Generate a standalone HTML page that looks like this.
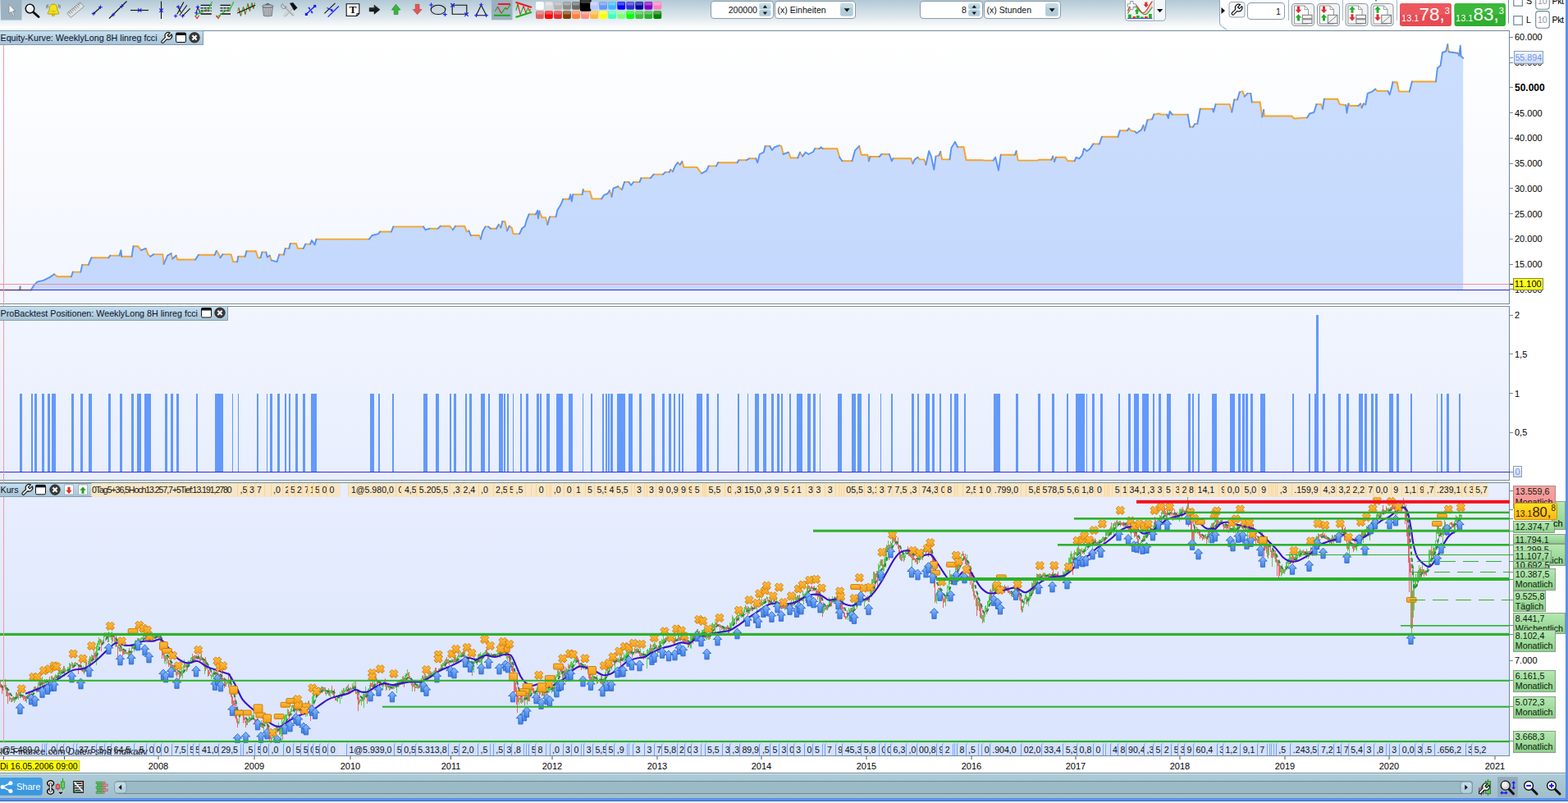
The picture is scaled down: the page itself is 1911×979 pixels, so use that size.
<!DOCTYPE html>
<html lang="de"><head><meta charset="utf-8"><title>ProRealTime Chart</title>
<style>
html,body{margin:0;padding:0;background:#fff;}
body{width:1911px;height:979px;overflow:hidden;position:relative;font-family:"Liberation Sans",sans-serif;font-size:11px;color:#000;}
#root{position:absolute;left:0;top:0;width:1911px;height:979px;overflow:hidden;background:#fff;}
.abs{position:absolute;}
.tb{position:absolute;left:0;top:0;width:1911px;height:37px;background:linear-gradient(#b2c9d5 0px,#c7d8e1 10px,#dde6ec 20px,#f0f4f7 28px,#fdfefe 34px,#fff 37px);}
.panel{position:absolute;left:0;width:1840px;border-top:1px solid #738b99;border-bottom:1px solid #738b99;border-right:1px solid #728898;box-sizing:border-box;}
.p1{top:37px;height:334px;background:linear-gradient(#ffffff,#f1f5fe);}
.p2{top:373px;height:213px;background:linear-gradient(#f1f5fe,#e8eefe);}
.p3{top:588px;height:334px;background:linear-gradient(#e8eefe,#dae4fd);}
.axl{position:absolute;left:1839px;top:37px;width:1px;height:885px;background:#728898;}
.lab{position:absolute;left:0;height:16px;line-height:17px;border:1px solid #7e9cb3;border-left:none;background:linear-gradient(#c6e0ee,#a9c3d4);font-size:10.72px;color:#091030;white-space:nowrap;padding-left:0.5px;box-sizing:content-box;}
.yl{position:absolute;left:1846px;font-size:11px;line-height:12px;white-space:nowrap;color:#000;}
.tick{position:absolute;left:1840px;width:4px;height:1px;background:#728898;}
.pl{position:absolute;left:1844.3px;font-size:10.7px;line-height:12.5px;padding:0 0 0 1.5px;box-sizing:border-box;border:1px solid #8aa08a;background:linear-gradient(#b4e8b0,#8fd08c);white-space:nowrap;overflow:hidden;color:#0a1a0a;}
.yr{position:absolute;top:924px;width:40px;text-align:center;font-size:11px;line-height:20px;}
.orow{position:absolute;top:589px;height:16.5px;line-height:17px;font-size:10.6px;background:#f6e6c6;border-radius:3px;overflow:hidden;white-space:nowrap;color:#111;}
.brow{position:absolute;top:905.5px;height:15.5px;line-height:16px;font-size:10.6px;background:#d3e1fd;overflow:hidden;white-space:nowrap;color:#111;}
.brow span,.orow span{position:absolute;top:0;height:17px;padding-left:2.5px;box-sizing:border-box;white-space:nowrap;}
.brow span{background:#d3e1fd;border-left:1px solid #6f9df0;border-radius:3px 0 0 3px;}
.orow span{background:#f6e6c6;border-left:1px solid #fbd593;border-radius:3px 0 0 3px;}
.brow b,.orow b{position:absolute;top:0;height:17px;width:3px;box-sizing:border-box;border-radius:3px 0 0 3px;}
.brow b{border-left:1px solid #7fa8f2;}
.orow b{border-left:1px solid #fbd593;}
.bt{position:absolute;left:0;top:942px;width:1908px;height:31px;background:linear-gradient(#6f8896 0,#6f8896 1px,#d8eef8 1px,#d8eef8 2px,#adcbd7 2px,#a9c8d4 10px,#a1bfcb 31px);}
.inp{position:absolute;box-sizing:border-box;border:1px solid #8a9aa8;border-radius:4px;background:#fff;font-size:10.6px;line-height:21px;height:22px;text-align:right;color:#111;}
.sel{position:absolute;box-sizing:border-box;border:1px solid #8a9aa8;border-radius:4px;background:#fff;font-size:10.55px;line-height:21px;height:22px;padding-left:3px;color:#111;}
</style></head><body><div id="root">
<div class="tb"></div>
<svg class="abs" style="left:0px;top:0px" width="1911" height="38" viewBox="0 0 1911 38"><path d="M1486.500,-1V27.500Q1486.500,31 1489.500,32.500L1495.500,36.500H1908V-1Z" fill="#fcfdfe"/><path d="M1486.500,-1V27.500Q1486.500,31 1489.500,32.500L1495.500,36.500" fill="none" stroke="#8fa5b2" stroke-width="1"/></svg><div class="inp" style="left:866px;top:1px;width:76.500px;padding-right:18.500px">200000</div>
<div class="sel" style="left:943.500px;top:1px;width:99.500px">(x) Einheiten</div>
<div class="inp" style="left:1121px;top:1px;width:76.500px;padding-right:18.500px">8</div>
<div class="sel" style="left:1198.500px;top:1px;width:94.500px">(x) Stunden</div>
<div class="inp" style="left:1520px;top:3px;width:46px;padding-right:4px;height:21px;line-height:20px">1</div><svg class="abs" style="left:0px;top:0px" width="1911" height="38" viewBox="0 0 1911 38"><rect x="1" y="0" width="25.5" height="24.5" fill="#9db2c1"/><path d="M11,5.300V16.800L13.700,14.300L15.900,19.600L17.700,18.800L15.500,13.700H19Z" fill="#f6f8fa" stroke="#87919a" stroke-width="1" stroke-linejoin="round"/><path d="M40.800,15L47,20.500" stroke="#111" stroke-width="3" stroke-linecap="round"/><circle cx="36.500" cy="10.600" r="5.300" fill="#eef1f4" stroke="#111" stroke-width="1.500"/><path d="M33,9.500a3.800,3.800 0 0 1 5,-2.500" stroke="#fff" stroke-width="1.200" fill="none"/><path d="M65,5c-3.300,0-4.700,2.500-4.700,5.300c0,3-1,4.400-2.300,5.500c0,0.900,0.400,1.300,1.300,1.300h11.400c0.900,0,1.300-0.400,1.300-1.300c-1.300-1.100-2.300-2.500-2.300-5.500C69.700,7.500,68.300,5,65,5z" fill="#f2e21c" stroke="#a89600" stroke-width="0.900"/><path d="M62.500,13.700h5" stroke="#b8a400" stroke-width="0.800"/><rect x="63.500" y="17" width="3" height="2.600" fill="#e4c800" stroke="#a89600" stroke-width="0.500"/><path d="M57.300,5.800q-1.200,2.200,-0.300,4.500M58.800,5.300q-1.100,2,-0.300,4.200M72.700,5.800q1.200,2.200,0.300,4.500M71.200,5.300q1.100,2,0.300,4.200" stroke="#555" stroke-width="0.700" fill="none"/><g transform="rotate(-40 92 12)"><rect x="81.500" y="8.600" width="21" height="7" fill="#dfe1e3" stroke="#8f9397" stroke-width="0.900"/><path d="M84,8.600v3M86.500,8.600v4M89,8.600v3M91.500,8.600v4M94,8.600v3M96.500,8.600v4M99,8.600v3M101,8.600v2" stroke="#6f7377" stroke-width="0.800"/></g><path d="M113.500,17L122.500,9" stroke="#111" stroke-width="1.1"/><path d="M111.8,16.6H116.2M114,14.4V18.8" stroke="#1a1aff" stroke-width="1.1" fill="none"/><path d="M120.2,8.6H124.6M122.4,6.4V10.8" stroke="#1a1aff" stroke-width="1.1" fill="none"/><path d="M133,22.500L154.500,1.500" stroke="#111" stroke-width="1.1"/><path d="M135.8,18H140.2M138,15.8V20.2" stroke="#1a1aff" stroke-width="1.1" fill="none"/><path d="M146.3,7.5H150.7M148.5,5.3V9.7" stroke="#1a1aff" stroke-width="1.1" fill="none"/><path d="M159,12.500H181" stroke="#111" stroke-width="1.1"/><path d="M168,10.3L172.4,14.7M168,14.7L172.4,10.3" stroke="#1a1aff" stroke-width="1.1" fill="none"/><path d="M196.500,1.500V23" stroke="#111" stroke-width="1.1"/><path d="M194.3,10.5L198.7,14.9M194.3,14.9L198.7,10.5" stroke="#1a1aff" stroke-width="1.1" fill="none"/><path d="M215.700,17.600L223.900,2.500M218.800,18.800L227.900,6.300M223.200,18.800L231.700,10.300M217.200,8.400L220.300,15" stroke="#111" stroke-width="1.100" fill="none"/><path d="M215,8.4H219.4M217.2,6.2V10.6" stroke="#1a1aff" stroke-width="1.1" fill="none"/><path d="M211.8,19.5H216.2M214,17.3V21.7" stroke="#1a1aff" stroke-width="1.1" fill="none"/><path d="M220.4,19.5H224.8M222.6,17.3V21.7" stroke="#1a1aff" stroke-width="1.1" fill="none"/><path d="M244.600,6.300H257.800M244.600,17H257.800" stroke="#111" stroke-width="1.300"/><path d="M244.600,9.800H257.800M244.600,13.200H257.800" stroke="#111" stroke-width="1.200" stroke-dasharray="3,1"/><path d="M241,8.500L239.300,15.700M241,8.500L244,16" stroke="#111" stroke-width="1"/><path d="M237.700,20L242,16.300H244L250.300,12H254L258.400,2" stroke="#1fbf1f" stroke-width="1.200" fill="none"/><path d="M237.700,19.500L240.200,22.600L242.700,18.800M250.300,12.300L252.300,13.800" stroke="#e02020" stroke-width="1.100" fill="none"/><path d="M238.8,8.5H243.2M241,6.3V10.7" stroke="#1a1aff" stroke-width="1.1" fill="none"/><path d="M237.1,15.7H241.5M239.3,13.5V17.9" stroke="#1a1aff" stroke-width="1.1" fill="none"/><path d="M268.500,6.300H281M268.500,17H281" stroke="#111" stroke-width="1.300"/><path d="M268.500,9.800H281M268.500,13.200H281" stroke="#111" stroke-width="1.200" stroke-dasharray="3,1"/><path d="M263.400,20.700L267.800,18.800L270.400,16.300L276.600,12.600L280.400,11.300L284.800,2" stroke="#1fbf1f" stroke-width="1.200" fill="none"/><path d="M263.400,18.800L266,22.600L268.400,18.800M276.600,12.600L278.500,13.600" stroke="#e02020" stroke-width="1.100" fill="none"/><path d="M289.500,13.500l1.500,-4l2.500,10l3,-11l2.500,9l3,-13l2.500,9l2.500,-10l2,7l1.500,-7.500" stroke="#1fbf1f" stroke-width="1" fill="none"/><path d="M291,9.500l2.500,10M296.500,8.500l2.500,9M302,4.500l2.500,9M307,3.500l2,7" stroke="#e02020" stroke-width="1" fill="none"/><path d="M289.200,16L311.200,6.300" stroke="#111" stroke-width="1.200"/><path d="M320.300,9h12l-1.100,10.200q-4.900,1.400,-9.800,0z" fill="#c4c7cb" stroke="#6a6e74" stroke-width="0.900"/><ellipse cx="326.300" cy="7.600" rx="6.800" ry="2" fill="#b0b4b9" stroke="#5e6268" stroke-width="0.900"/><path d="M324.300,5.800q2,-2.500,4,0" fill="none" stroke="#44484e" stroke-width="1.100"/><path d="M323,10.500v8M325.300,10.800v8.300M327.600,10.800v8.300M329.800,10.500v8" stroke="#80848a" stroke-width="0.900"/><path d="M346.500,19L356.500,8" stroke="#d0d3d6" stroke-width="3.200" stroke-linecap="round"/><path d="M346.500,19L356.500,8" stroke="#8a8e93" stroke-width="0.700" fill="none" transform="translate(1.500,1.200)"/><path d="M353,4l4,-1l5.500,6.500l-4,3.500z" fill="#111"/><path d="M347.500,8.500L357.500,18.500" stroke="#c6c9cd" stroke-width="3" stroke-linecap="round"/><path d="M344.500,4.500a3.200,3.200 0 1 0 4.600,3.400l-2.300,0.500l-1.300,-1.500z" fill="#d6d9dc" stroke="#7d8186" stroke-width="0.900"/><path d="M348.500,7.500L358.500,17.500" stroke="#7d8186" stroke-width="0.700" transform="translate(-1.400,1.400)"/><path d="M373.400,17.300L383.700,7.500" stroke="#1a1aff" stroke-width="1.300"/><rect x="371.800" y="15.800" width="3.200" height="3.200" fill="#1a1aff"/><rect x="382.100" y="5.900" width="3.200" height="3.200" fill="#1a1aff"/><path d="M375.800,9.800l2,1l-1,-2zM381.200,15.200l-2,-1l1,2z" fill="#1a1aff" stroke="#1a1aff" stroke-width="0.800"/><path d="M376.300,10.200L381,14.800" stroke="#1a1aff" stroke-width="1"/><path d="M395.400,16.300L408.500,3.800" stroke="#111" stroke-width="1.100"/><path d="M399.700,20.700L412.900,7.500" stroke="#1a1aff" stroke-width="1.200"/><path d="M398.500,9.500L405.500,13" stroke="#1a1aff" stroke-width="1.100"/><path d="M406.200,13.400l-3.600,0.600l1.800,-3.400z" fill="#1a1aff"/><path d="M422.200,4.700h15.600v11.800l-3,3h-12.600z" fill="#fff" stroke="#111" stroke-width="1.100"/><path d="M434.800,19.500v-3h3" fill="none" stroke="#111" stroke-width="0.900"/><text x="430" y="15.800" text-anchor="middle" font-family="Liberation Serif, serif" font-weight="bold" font-size="13.500" fill="#111">T</text><path d="M450.200,9.500h5.800v-3.400l7,5.600l-7,5.600v-3.400h-5.800z" fill="#1c1c1c" stroke="#000" stroke-width="0.500"/><path d="M450.600,9.900h6v-3l5.500,4.300" fill="none" stroke="#777" stroke-width="0.600" opacity="0.600"/><path d="M482.500,5.300l5.500,6.700h-3v5.600h-4.700v-5.600h-3z" fill="#3ab53a" stroke="#1f8a1f" stroke-width="0.700" stroke-linejoin="round"/><path d="M508.600,17.600l5.400,-6.100h-3v-6.200h-4.700v6.200h-3z" fill="#e4555a" stroke="#c03a40" stroke-width="0.700" stroke-linejoin="round"/><rect x="525.500" y="6" width="17" height="11.600" fill="#c6d0d8" opacity="0.500" stroke="#9aa6b0" stroke-width="0.500"/><ellipse cx="534" cy="11.900" rx="8.800" ry="5.600" fill="none" stroke="#111" stroke-width="1.100"/><path d="M523.1,6H527.9M525.5,3.6V8.4" stroke="#1a1aff" stroke-width="1.1" fill="none"/><path d="M540,17.6H544.8M542.4,15.2V20" stroke="#1a1aff" stroke-width="1.1" fill="none"/><path d="M551.200,6.300h17.600v11h-17.600z" fill="none" stroke="#111" stroke-width="1.100"/><path d="M549.3,4L553.9,8.6M549.3,8.6L553.9,4" stroke="#1a1aff" stroke-width="1.1" fill="none"/><path d="M566.3,15.3L570.9,19.9M566.3,19.9L570.9,15.3" stroke="#1a1aff" stroke-width="1.1" fill="none"/><path d="M586.400,6.300L592.700,18.800H580.400z" fill="none" stroke="#111" stroke-width="1.100"/><path d="M584.1,5.8H588.7M586.4,3.5V8.1" stroke="#1a1aff" stroke-width="1.1" fill="none"/><path d="M578.1,18.8H582.7M580.4,16.5V21.1" stroke="#1a1aff" stroke-width="1.1" fill="none"/><path d="M590.4,18.8H595M592.7,16.5V21.1" stroke="#1a1aff" stroke-width="1.1" fill="none"/><rect x="599" y="0" width="25.500" height="24.300" fill="#9bb0bf"/><path d="M607,5H622" stroke="#f01818" stroke-width="2"/><path d="M602,18.800H622" stroke="#12b012" stroke-width="2"/><path d="M603.400,13.800L606.500,8.200M611,16.300L616,9.400M617.900,11.300L622.200,5.700" stroke="#12b012" stroke-width="1.200" fill="none"/><path d="M606.500,8.200L611,16.300M616,9.400L617.900,11.300" stroke="#f01818" stroke-width="1.200" fill="none"/><path d="M629,12.600L631,5M634.200,17.600L638,7.500M641,15.700L643.600,9.400M645.400,13.800L646.700,11.300" stroke="#12b012" stroke-width="1.100" fill="none"/><path d="M631,5L634.200,17.600M638,7.500L641,15.700M643.600,9.400L645.400,13.800" stroke="#f01818" stroke-width="1.100" fill="none"/><path d="M628.500,2.800L648,9" stroke="#f01818" stroke-width="2"/><path d="M628.500,21L648,14.800" stroke="#12b012" stroke-width="2"/><rect x="653" y="13.200" width="9.800" height="9.800" rx="1.800" fill="#e06060"/><rect x="653.6" y="13.600" width="8.600" height="4" rx="1.500" fill="#fff" opacity="0.300"/><rect x="664" y="13.200" width="9.800" height="9.800" rx="1.800" fill="#ff0404"/><rect x="664.6" y="13.600" width="8.600" height="4" rx="1.500" fill="#fff" opacity="0.300"/><rect x="675.1" y="13.200" width="9.800" height="9.800" rx="1.800" fill="#e03030"/><rect x="675.7" y="13.600" width="8.600" height="4" rx="1.500" fill="#fff" opacity="0.300"/><rect x="686.1" y="13.200" width="9.800" height="9.800" rx="1.800" fill="#804000"/><rect x="686.7" y="13.600" width="8.600" height="4" rx="1.500" fill="#fff" opacity="0.300"/><rect x="697.1" y="13.200" width="9.800" height="9.800" rx="1.800" fill="#ff8040"/><rect x="697.7" y="13.600" width="8.600" height="4" rx="1.500" fill="#fff" opacity="0.300"/><rect x="708.1" y="13.200" width="9.800" height="9.800" rx="1.800" fill="#ff9080"/><rect x="708.8" y="13.600" width="8.600" height="4" rx="1.500" fill="#fff" opacity="0.300"/><rect x="719.2" y="13.200" width="9.800" height="9.800" rx="1.800" fill="#ffb840"/><rect x="719.8" y="13.600" width="8.600" height="4" rx="1.500" fill="#fff" opacity="0.300"/><rect x="730.2" y="13.200" width="9.800" height="9.800" rx="1.800" fill="#ffff00"/><rect x="730.8" y="13.600" width="8.600" height="4" rx="1.500" fill="#fff" opacity="0.300"/><rect x="741.2" y="13.200" width="9.800" height="9.800" rx="1.800" fill="#40ffc0"/><rect x="741.8" y="13.600" width="8.600" height="4" rx="1.500" fill="#fff" opacity="0.300"/><rect x="752.3" y="13.200" width="9.800" height="9.800" rx="1.800" fill="#80ff80"/><rect x="752.9" y="13.600" width="8.600" height="4" rx="1.500" fill="#fff" opacity="0.300"/><rect x="763.3" y="13.200" width="9.800" height="9.800" rx="1.800" fill="#04ff04"/><rect x="763.9" y="13.600" width="8.600" height="4" rx="1.500" fill="#fff" opacity="0.300"/><rect x="774.3" y="13.200" width="9.800" height="9.800" rx="1.800" fill="#40c040"/><rect x="774.9" y="13.600" width="8.600" height="4" rx="1.500" fill="#fff" opacity="0.300"/><rect x="785.4" y="13.200" width="9.800" height="9.800" rx="1.800" fill="#30b030"/><rect x="786" y="13.600" width="8.600" height="4" rx="1.500" fill="#fff" opacity="0.300"/><rect x="796.4" y="13.200" width="9.800" height="9.800" rx="1.800" fill="#008000"/><rect x="797" y="13.600" width="8.600" height="4" rx="1.500" fill="#fff" opacity="0.300"/><rect x="653" y="2" width="9.800" height="9.700" rx="1.800" fill="#ffffff"/><rect x="653.6" y="2.400" width="8.600" height="4" rx="1.500" fill="#fff" opacity="0.300"/><rect x="664" y="2" width="9.800" height="9.700" rx="1.800" fill="#d8d8d8"/><rect x="664.6" y="2.400" width="8.600" height="4" rx="1.500" fill="#fff" opacity="0.300"/><rect x="675.1" y="2" width="9.800" height="9.700" rx="1.800" fill="#b4b4b4"/><rect x="675.7" y="2.400" width="8.600" height="4" rx="1.500" fill="#fff" opacity="0.300"/><rect x="686.1" y="2" width="9.800" height="9.700" rx="1.800" fill="#8c8c8c"/><rect x="686.7" y="2.400" width="8.600" height="4" rx="1.500" fill="#fff" opacity="0.300"/><rect x="697.1" y="2" width="9.800" height="9.700" rx="1.800" fill="#6a6a6a"/><rect x="697.7" y="2.400" width="8.600" height="4" rx="1.500" fill="#fff" opacity="0.300"/><rect x="706.8" y="-1" width="13.800" height="14.800" rx="2" fill="#000"/><rect x="707.5" y="0" width="12.200" height="4" rx="1.500" fill="#fff" opacity="0.220"/><rect x="719.2" y="2" width="9.800" height="9.700" rx="1.800" fill="#b8c8ff"/><rect x="719.8" y="2.400" width="8.600" height="4" rx="1.500" fill="#fff" opacity="0.300"/><rect x="730.2" y="2" width="9.800" height="9.700" rx="1.800" fill="#6496ff"/><rect x="730.8" y="2.400" width="8.600" height="4" rx="1.500" fill="#fff" opacity="0.300"/><rect x="741.2" y="2" width="9.800" height="9.700" rx="1.800" fill="#40b8ff"/><rect x="741.8" y="2.400" width="8.600" height="4" rx="1.500" fill="#fff" opacity="0.300"/><rect x="752.3" y="2" width="9.800" height="9.700" rx="1.800" fill="#0404ff"/><rect x="752.9" y="2.400" width="8.600" height="4" rx="1.500" fill="#fff" opacity="0.300"/><rect x="763.3" y="2" width="9.800" height="9.700" rx="1.800" fill="#3030d0"/><rect x="763.9" y="2.400" width="8.600" height="4" rx="1.500" fill="#fff" opacity="0.300"/><rect x="774.3" y="2" width="9.800" height="9.700" rx="1.800" fill="#0404a0"/><rect x="774.9" y="2.400" width="8.600" height="4" rx="1.500" fill="#fff" opacity="0.300"/><rect x="785.4" y="2" width="9.800" height="9.700" rx="1.800" fill="#8000c0"/><rect x="786" y="2.400" width="8.600" height="4" rx="1.500" fill="#fff" opacity="0.300"/><rect x="796.4" y="2" width="9.800" height="9.700" rx="1.800" fill="#ff80c0"/><rect x="797" y="2.400" width="8.600" height="4" rx="1.500" fill="#fff" opacity="0.300"/><rect x="925.2" y="4.2" width="14.400" height="7.400" rx="2" fill="#b6d0dd"/><rect x="925.2" y="4.2" width="14.400" height="3" rx="1.500" fill="#c8e0ea" opacity="0.800"/><rect x="925.2" y="12.100000000000001" width="14.400" height="7.600" rx="2" fill="#b3cdda"/><path d="M929.7,9.8l2.700,-3.500l2.700,3.500zM929.7,14.5l2.700,3.500l2.700,-3.500z" fill="#111"/><rect x="1024.1" y="4.2" width="15.700" height="15.500" rx="2.500" fill="#b2ccd9"/><rect x="1024.1" y="4.2" width="15.700" height="5" rx="2" fill="#c6deea" opacity="0.800"/><path d="M1028.6999999999998,10.2h7l-3.500,4.200z" fill="#111"/><rect x="1180.1" y="4.2" width="14.400" height="7.400" rx="2" fill="#b6d0dd"/><rect x="1180.1" y="4.2" width="14.400" height="3" rx="1.500" fill="#c8e0ea" opacity="0.800"/><rect x="1180.1" y="12.100000000000001" width="14.400" height="7.600" rx="2" fill="#b3cdda"/><path d="M1184.6,9.8l2.700,-3.500l2.700,3.500zM1184.6,14.5l2.700,3.500l2.700,-3.500z" fill="#111"/><rect x="1274.1" y="4.2" width="15.700" height="15.500" rx="2.500" fill="#b2ccd9"/><rect x="1274.1" y="4.2" width="15.700" height="5" rx="2" fill="#c6deea" opacity="0.800"/><path d="M1278.6999999999998,10.2h7l-3.500,4.200z" fill="#111"/><rect x="1371.500" y="-3" width="49" height="28.300" rx="3.500" fill="#f3f6f8" stroke="#8f9ca6" stroke-width="0.900"/><path d="M1406.500,-2v27" stroke="#a4b0ba" stroke-width="0.900"/><path d="M1410,11h7.200l-3.600,4.200z" fill="#111"/><path d="M1374.500,13.500c3,-9 8,-11 12,-5s6,10 10,5s5,-9 8,-12v7c-3,2 -5,7 -8,9s-7,-3 -10,-7s-8,-2 -12,6z" fill="#f4b8b8" opacity="0.600"/><path d="M1374.500,13.500c3,-9 8,-11 12,-5s6,10 10,5s5,-9 8,-12" stroke="#d42a2a" stroke-width="1.100" fill="none"/><path d="M1374.500,16.500c4,-8 9,-10 12,-6s7,8 10,7s5,-5 8,-9" stroke="#22a822" stroke-width="1.100" fill="none"/><path d="M1377.500,1.500h3.500v3.300h3.300v3.500h-3.300v3.300h-3.500v-3.300h-3.300v-3.500h3.300z" fill="#fff" stroke="#8a949c" stroke-width="0.900"/><path d="M1395.300,2.500h3v3h1.800l-3.300,3.600l-3.300,-3.600h1.800z" fill="#e02a2a"/><path d="M1385.700,10.500l3,3.400h-1.600v3.300h-2.800v-3.300h-1.600z" fill="#22b022"/><path d="M1374,22.400h30.500" stroke="#2a2ae0" stroke-width="0.900"/><rect x="1375" y="17.6" width="3.800" height="4.4" fill="#22b022"/><rect x="1380.5" y="20.1" width="3.800" height="1.9" fill="#e02a2a"/><rect x="1385" y="18.9" width="3.800" height="3.1" fill="#22b022"/><rect x="1390" y="20.5" width="3.800" height="1.5" fill="#22b022"/><rect x="1395" y="20.1" width="3.800" height="1.9" fill="#e02a2a"/><rect x="1400" y="17" width="3.800" height="5" fill="#22b022"/><path d="M1488.500,9l4.500,4l-4.500,4z" fill="#111"/><rect x="1498" y="2.500" width="19" height="18.500" rx="3" fill="#f4f6f8" stroke="#8f9aa4" stroke-width="0.900"/><g transform="translate(1501.2,5) scale(1)"><path d="M10.390,0.630L7.300,3.720L9.280,5.700L12.370,2.610A4.300,4.300 0 0 1 6.710,8.410L2.490,12.630A1.500,1.500 0 0 1 0.370,10.510L4.590,6.290A4.300,4.300 0 0 1 10.390,0.630Z" fill="#fff" stroke="#111" stroke-width="1.150" stroke-linejoin="round"/></g><path d="M1570.500,0V25M1636.500,0V25M1702.500,0V25" stroke="#a9b8c2" stroke-width="1"/><path d="M1838.500,0V28.600" stroke="#7a909c" stroke-width="1"/><path d="M1677,0v1.500" stroke="#111" stroke-width="1"/><rect x="1574.5" y="4.5" width="27" height="27" rx="3.500" fill="#f1f3f5" stroke="#8a96a0" stroke-width="1"/><path d="M1577.5,7.0h12.500l4.500,4.500v17.500h-17z" fill="#fff" stroke="#8a8a8a" stroke-width="0.900"/><path d="M1590.0,7.0v4.500h4.500" fill="none" stroke="#8a8a8a" stroke-width="0.800"/><path d="M1581.0,7.8h3v4h2.300l-3.800,4.300l-3.800,-4.300h2.300z" fill="#e32a30"/><path d="M1582.5,17.2l3.800,4.300h-2.300v4h-3v-4h-2.300z" fill="#1fae2a"/><rect x="1587.3" y="18.3" width="11.700" height="10.300" fill="#f2f2f2" stroke="#777" stroke-width="1"/><rect x="1587.3" y="22.1" width="11.700" height="2.200" fill="#8c8c8c"/><rect x="1605.5" y="4.5" width="27" height="27" rx="3.500" fill="#f1f3f5" stroke="#8a96a0" stroke-width="1"/><path d="M1608.5,7.0h12.500l4.500,4.500v17.500h-17z" fill="#fff" stroke="#8a8a8a" stroke-width="0.900"/><path d="M1621.0,7.0v4.500h4.500" fill="none" stroke="#8a8a8a" stroke-width="0.800"/><path d="M1612.0,7.8h3v4h2.300l-3.800,4.300l-3.800,-4.300h2.300z" fill="#e32a30"/><path d="M1613.5,17.2l3.800,4.300h-2.300v4h-3v-4h-2.300z" fill="#1fae2a"/><rect x="1618.3" y="18.3" width="11.700" height="10.300" fill="#f2f2f2" stroke="#777" stroke-width="1"/><path d="M1618.8,28.1l10.700,-9.300" stroke="#777" stroke-width="0.900"/><rect x="1640" y="4.5" width="27" height="27" rx="3.500" fill="#f1f3f5" stroke="#8a96a0" stroke-width="1"/><path d="M1643,7.0h12.500l4.500,4.500v17.500h-17z" fill="#fff" stroke="#8a8a8a" stroke-width="0.900"/><path d="M1655.5,7.0v4.500h4.500" fill="none" stroke="#8a8a8a" stroke-width="0.800"/><path d="M1648,7.5l3.800,4.300h-2.300v4h-3v-4h-2.300z" fill="#1fae2a"/><path d="M1646.5,17.2h3v4h2.300l-3.800,4.300l-3.800,-4.300h2.300z" fill="#e32a30"/><rect x="1652.8" y="18.3" width="11.700" height="10.300" fill="#f2f2f2" stroke="#777" stroke-width="1"/><rect x="1652.8" y="22.1" width="11.700" height="2.200" fill="#8c8c8c"/><rect x="1671" y="4.5" width="27" height="27" rx="3.500" fill="#f1f3f5" stroke="#8a96a0" stroke-width="1"/><path d="M1674,7.0h12.500l4.500,4.500v17.500h-17z" fill="#fff" stroke="#8a8a8a" stroke-width="0.900"/><path d="M1686.5,7.0v4.500h4.500" fill="none" stroke="#8a8a8a" stroke-width="0.800"/><path d="M1679,7.5l3.800,4.300h-2.300v4h-3v-4h-2.300z" fill="#1fae2a"/><path d="M1677.5,17.2h3v4h2.300l-3.800,4.300l-3.800,-4.300h2.300z" fill="#e32a30"/><rect x="1683.8" y="18.3" width="11.700" height="10.300" fill="#f2f2f2" stroke="#777" stroke-width="1"/><path d="M1684.3,28.1l10.700,-9.300" stroke="#777" stroke-width="0.900"/><rect x="1706" y="4" width="63" height="28" rx="3" fill="#e84a52"/><rect x="1706" y="4" width="63" height="14" rx="3" fill="#ee6068" opacity="0.6"/><rect x="1772.500" y="4" width="62.500" height="28" rx="3" fill="#2fae2f"/><rect x="1772.500" y="4" width="62.500" height="14" rx="3" fill="#46bd46" opacity="0.6"/><rect x="1844.800" y="-4" width="10.600" height="11.200" fill="#fff" stroke="#6f8896" stroke-width="1.200"/><rect x="1844.800" y="19.700" width="10.600" height="10.500" fill="#fff" stroke="#6f8896" stroke-width="1.200"/><rect x="1871.700" y="-10" width="16.600" height="21.200" rx="3.500" fill="#fff" stroke="#6f8896" stroke-width="1.100"/><rect x="1871.700" y="13.600" width="16.600" height="20.700" rx="3.500" fill="#fff" stroke="#6f8896" stroke-width="1.100"/></svg><div class="abs" style="left:1706px;top:4px;width:63px;height:28px;color:#fff;white-space:nowrap;line-height:28px;text-align:center"><span style="font-size:11px;position:relative;top:1px">13.1</span><span style="font-size:22.5px">78,</span><span style="font-size:11px;position:relative;top:-8px">3</span></div>
<div class="abs" style="left:1772px;top:4px;width:63px;height:28px;color:#fff;white-space:nowrap;line-height:28px;text-align:center"><span style="font-size:11px;position:relative;top:1px">13.1</span><span style="font-size:22.5px">83,</span><span style="font-size:11px;position:relative;top:-8px">3</span></div>
<div class="abs" style="left:1860px;top:-6px;font-size:10.8px;line-height:14px">S</div><div class="abs" style="left:1874px;top:-6px;font-size:10.5px;line-height:14px;color:#9292a8">10</div><div class="abs" style="left:1891.500px;top:-6px;font-size:10.8px;letter-spacing:-0.5px;line-height:14px">Pkt</div>
<div class="abs" style="left:1860px;top:17px;font-size:10.8px;line-height:14px">L</div><div class="abs" style="left:1874px;top:17px;font-size:10.5px;line-height:14px;color:#9292a8">10</div><div class="abs" style="left:1891.500px;top:17px;font-size:10.8px;letter-spacing:-0.5px;line-height:14px">Pkt</div>
<div class="panel p1"></div><div class="panel p2"></div><div class="panel p3"></div>
<div class="abs" style="left:1840px;top:37px;width:68px;height:905px;background:#fff"></div>
<div class="abs" style="left:1908px;top:0;width:3px;height:979px;background:#5a90ee"></div>

<svg class="abs" style="left:0;top:0" width="1911" height="979" viewBox="0 0 1911 979" font-family="Liberation Sans, sans-serif">
<path d="M0,353.4 L0,353.6 L23.8,353.6 L24.6,349.4 L25.3,353.6 L37.8,353.6 L41.6,347.5 L45.4,343.7 L52.9,341.8 L60.5,338.1 L66.1,334.3 L69.9,337.3 L86.9,337.3 L88.8,331.6 L98.3,331.6 L100.2,322.9 L107.7,322.9 L111.5,314.2 L132.3,314.2 L134.2,311.6 L145.5,311.6 L147.4,305.2 L148.2,312.7 L160.6,312.7 L162.5,300.3 L168.2,300.3 L172,305.2 L177.7,302.9 L180.7,310.5 L183.3,312.7 L187.1,310.1 L198.4,310.1 L199.6,321.8 L204.1,311.6 L208.6,309 L210.2,315.4 L214.7,311.6 L216.2,316.5 L238.1,316.5 L241.9,310.8 L261.6,310.8 L263.8,305.9 L266.5,309.7 L268.4,314.2 L271.4,310.1 L281.6,310.1 L284.2,319.2 L289.2,319.2 L290.3,312.7 L298.6,312.7 L300.5,306.3 L311.8,306.3 L314.5,314.2 L317.5,314.2 L319.4,307.4 L324.3,307.4 L325.8,313.5 L328.8,311.6 L330.7,317.3 L337.5,319.2 L340.2,310.5 L345.9,310.5 L347.7,302.9 L352.3,302.9 L353.8,296.9 L361,296.9 L362.9,302.9 L369.7,302.9 L372.3,297.6 L378,297.6 L379.9,293.1 L383.7,298.4 L385.5,291.6 L449.8,291.6 L453.6,287 L461.1,285.1 L463,282.5 L477,282.5 L479.3,276.4 L516,276.4 L518.6,280.2 L523.5,278.7 L529.2,278.7 L533.7,278.7 L536.7,275.7 L548.1,275.7 L551.9,280.2 L554.9,275.7 L566.2,275.7 L568.9,282.5 L571.5,281.4 L573.8,287 L584,287 L585.9,291.6 L588.1,282.5 L591.5,276.4 L595.3,276.4 L598,278.7 L604.8,278.7 L607.8,273.8 L610.4,277.6 L612.3,270 L615.4,270 L618,281.4 L620.7,275.7 L623.7,277.6 L625.6,285.1 L633.1,285.1 L635.8,279.5 L635.9,278.7 L639.7,275.7 L641.6,268.9 L644.6,261.3 L652.9,261.3 L655.2,256.8 L655.9,266.2 L657.5,257.5 L660.5,265.1 L665,265.1 L667.3,273.8 L669.9,264.4 L677.5,264.4 L679.4,256 L683.2,250 L686.2,242.8 L693.7,242.8 L695.3,237.1 L696.8,245.5 L698.3,237.1 L709.6,237.1 L710.7,231.1 L711.9,233.4 L719.1,233.4 L721.7,242.4 L733.1,242.4 L736.1,237.9 L740.6,236 L742.9,232.2 L745.5,239.8 L747.4,229.6 L753.1,227.3 L755.7,229.6 L758,231.1 L761,222 L766.3,222 L769.3,225.8 L772,222 L779.5,222 L781.4,217.1 L792.8,217.1 L796.6,212.6 L807.9,212.6 L810.9,209.9 L815.5,209.9 L817.3,206.9 L820,209.2 L823,202 L826,198.2 L828.7,200.8 L831.3,197.1 L833.6,203.9 L849.5,203.9 L852.5,208.4 L855.1,211.4 L860.8,208.4 L863.8,202.4 L872.9,202.4 L875.2,198.2 L898.6,198.2 L900.5,195.2 L909.9,195.2 L913,193.3 L921.3,193.3 L923.2,198.2 L925.8,188 L930.7,185.7 L932.6,178.2 L938.3,178.2 L940.9,183.1 L944,179.3 L949.6,177.4 L952.3,178.2 L954.6,188 L961,185.7 L963.6,192.5 L972.3,192.5 L975,185.7 L978,190.6 L981.8,185.7 L985.5,188 L991.2,185 L993.1,181.2 L998.8,181.2 L1000.7,179.3 L1002.6,181.2 L1020.3,181.2 L1023.3,191.8 L1026.4,196.3 L1038.5,196.3 L1042.2,183.1 L1047.2,178.2 L1049.8,188.8 L1057.4,188.8 L1058.9,196.3 L1060.4,191 L1071.7,191 L1074.4,188 L1083.8,188 L1086.8,196.3 L1088.4,193.3 L1110.3,193.3 L1112.5,199.3 L1114.8,194.4 L1118.6,191.8 L1120.9,194.4 L1126.2,194.4 L1128.4,200.8 L1132.2,184.2 L1134.9,190.6 L1138.3,206.9 L1140.5,190.6 L1144.3,189.5 L1146.2,185 L1148.1,194.4 L1157.5,194.4 L1159.4,180.4 L1164,172.9 L1167,179.3 L1174.5,179.3 L1177.6,195.2 L1197.2,195.2 L1200,195.6 L1210.6,195.6 L1213.2,191.8 L1217,207.7 L1219.7,188.8 L1237,188.8 L1238.6,184.2 L1240.8,195.6 L1264.3,195.6 L1266.1,194.8 L1281.3,194.8 L1283.2,190.6 L1285,197.1 L1286.9,191.8 L1298.3,191.8 L1301.3,196.3 L1309.6,196.3 L1311.5,191.8 L1315.3,193.3 L1319.1,188.8 L1321,181.2 L1324.7,184.2 L1328.5,181.2 L1332.3,175.5 L1339.9,175.5 L1342.9,166.8 L1362.5,166.8 L1364.8,159.3 L1373.9,159.3 L1375.8,156.6 L1378.4,159.3 L1383.3,160.4 L1385.2,162.3 L1390.9,158.5 L1393.5,152.8 L1395,159.3 L1398.4,146.4 L1404.1,145.3 L1406.4,139.6 L1411.7,138.5 L1415.5,139.6 L1422.3,139.6 L1423.8,144.2 L1425.7,135.8 L1428.7,139.6 L1447.6,139.6 L1450.2,154.7 L1454,154.7 L1456.3,151 L1459.3,151 L1462.7,132.8 L1477.8,132.8 L1479,136.6 L1481.6,127.1 L1498.6,127.1 L1501.3,136.6 L1504.3,121.5 L1508.1,121.5 L1510.7,112.4 L1514.5,111.3 L1516.8,117.7 L1520.5,113.9 L1524.3,113.9 L1525.8,124.5 L1535.7,124.5 L1538.3,142.6 L1540.2,133.9 L1540.9,141.5 L1574.2,141.5 L1577.2,144.5 L1593.1,143.4 L1596.1,138.5 L1601.4,137 L1604.4,127.1 L1610.1,127.1 L1612,132.8 L1613.9,120.7 L1630.1,120.7 L1632.8,127.1 L1640.4,128.3 L1641.5,137.7 L1643.4,126.4 L1645.3,129 L1655.5,129 L1658.1,126.4 L1659.6,131.3 L1661.9,126.4 L1664.2,127.5 L1666.8,113.9 L1672.5,111.6 L1676.3,108.6 L1678.2,110.9 L1691.4,110.9 L1693.6,115.4 L1695.9,107.5 L1697.4,100.3 L1702.7,100.3 L1705,111.6 L1717.8,111.6 L1720.9,99.5 L1750,99.5 L1751.9,82.9 L1755.6,79.9 L1757.9,64 L1762.4,62.5 L1764.3,54.2 L1765.8,63.3 L1776.4,64.8 L1778.3,67.8 L1779.8,55.7 L1780.6,68.6 L1783.2,70.8 L1783.2,353.4 Z" fill="#5895fc" fill-opacity="0.3" stroke="none"/>
<path d="M0,353.6 L23.8,353.6 M24.6,349.4 L25.3,353.6 M25.3,353.6 L37.8,353.6 M66.1,334.3 L69.9,337.3 M69.9,337.3 L86.9,337.3 M88.8,331.6 L98.3,331.6 M100.2,322.9 L107.7,322.9 M111.5,314.2 L132.3,314.2 M134.2,311.6 L145.5,311.6 M148.2,312.7 L160.6,312.7 M162.5,300.3 L168.2,300.3 M168.2,300.3 L172,305.2 M177.7,302.9 L180.7,310.5 M180.7,310.5 L183.3,312.7 M187.1,310.1 L198.4,310.1 M198.4,310.1 L199.6,321.8 M208.6,309 L210.2,315.4 M214.7,311.6 L216.2,316.5 M216.2,316.5 L238.1,316.5 M241.9,310.8 L261.6,310.8 M263.8,305.9 L266.5,309.7 M266.5,309.7 L268.4,314.2 M271.4,310.1 L281.6,310.1 M281.6,310.1 L284.2,319.2 M284.2,319.2 L289.2,319.2 M290.3,312.7 L298.6,312.7 M300.5,306.3 L311.8,306.3 M311.8,306.3 L314.5,314.2 M314.5,314.2 L317.5,314.2 M319.4,307.4 L324.3,307.4 M328.8,311.6 L330.7,317.3 M340.2,310.5 L345.9,310.5 M347.7,302.9 L352.3,302.9 M353.8,296.9 L361,296.9 M361,296.9 L362.9,302.9 M362.9,302.9 L369.7,302.9 M372.3,297.6 L378,297.6 M385.5,291.6 L449.8,291.6 M463,282.5 L477,282.5 M479.3,276.4 L516,276.4 M523.5,278.7 L529.2,278.7 M529.2,278.7 L533.7,278.7 M536.7,275.7 L548.1,275.7 M548.1,275.7 L551.9,280.2 M554.9,275.7 L566.2,275.7 M566.2,275.7 L568.9,282.5 M568.9,282.5 L571.5,281.4 M573.8,287 L584,287 M584,287 L585.9,291.6 M591.5,276.4 L595.3,276.4 M598,278.7 L604.8,278.7 M607.8,273.8 L610.4,277.6 M612.3,270 L615.4,270 M615.4,270 L618,281.4 M620.7,275.7 L623.7,277.6 M623.7,277.6 L625.6,285.1 M625.6,285.1 L633.1,285.1 M635.8,279.5 L635.9,278.7 M644.6,261.3 L652.9,261.3 M657.5,257.5 L660.5,265.1 M660.5,265.1 L665,265.1 M665,265.1 L667.3,273.8 M669.9,264.4 L677.5,264.4 M686.2,242.8 L693.7,242.8 M698.3,237.1 L709.6,237.1 M710.7,231.1 L711.9,233.4 M711.9,233.4 L719.1,233.4 M719.1,233.4 L721.7,242.4 M721.7,242.4 L733.1,242.4 M742.9,232.2 L745.5,239.8 M753.1,227.3 L755.7,229.6 M755.7,229.6 L758,231.1 M761,222 L766.3,222 M772,222 L779.5,222 M781.4,217.1 L792.8,217.1 M796.6,212.6 L807.9,212.6 M810.9,209.9 L815.5,209.9 M817.3,206.9 L820,209.2 M826,198.2 L828.7,200.8 M831.3,197.1 L833.6,203.9 M833.6,203.9 L849.5,203.9 M849.5,203.9 L852.5,208.4 M852.5,208.4 L855.1,211.4 M863.8,202.4 L872.9,202.4 M875.2,198.2 L898.6,198.2 M900.5,195.2 L909.9,195.2 M913,193.3 L921.3,193.3 M932.6,178.2 L938.3,178.2 M949.6,177.4 L952.3,178.2 M952.3,178.2 L954.6,188 M961,185.7 L963.6,192.5 M963.6,192.5 L972.3,192.5 M975,185.7 L978,190.6 M993.1,181.2 L998.8,181.2 M1002.6,181.2 L1020.3,181.2 M1020.3,181.2 L1023.3,191.8 M1026.4,196.3 L1038.5,196.3 M1047.2,178.2 L1049.8,188.8 M1049.8,188.8 L1057.4,188.8 M1057.4,188.8 L1058.9,196.3 M1060.4,191 L1071.7,191 M1074.4,188 L1083.8,188 M1088.4,193.3 L1110.3,193.3 M1110.3,193.3 L1112.5,199.3 M1118.6,191.8 L1120.9,194.4 M1120.9,194.4 L1126.2,194.4 M1126.2,194.4 L1128.4,200.8 M1140.5,190.6 L1144.3,189.5 M1146.2,185 L1148.1,194.4 M1148.1,194.4 L1157.5,194.4 M1167,179.3 L1174.5,179.3 M1174.5,179.3 L1177.6,195.2 M1177.6,195.2 L1197.2,195.2 M1197.2,195.2 L1200,195.6 M1200,195.6 L1210.6,195.6 M1219.7,188.8 L1237,188.8 M1238.6,184.2 L1240.8,195.6 M1240.8,195.6 L1264.3,195.6 M1264.3,195.6 L1266.1,194.8 M1266.1,194.8 L1281.3,194.8 M1283.2,190.6 L1285,197.1 M1286.9,191.8 L1298.3,191.8 M1298.3,191.8 L1301.3,196.3 M1301.3,196.3 L1309.6,196.3 M1332.3,175.5 L1339.9,175.5 M1342.9,166.8 L1362.5,166.8 M1364.8,159.3 L1373.9,159.3 M1375.8,156.6 L1378.4,159.3 M1378.4,159.3 L1383.3,160.4 M1393.5,152.8 L1395,159.3 M1398.4,146.4 L1404.1,145.3 M1406.4,139.6 L1411.7,138.5 M1411.7,138.5 L1415.5,139.6 M1415.5,139.6 L1422.3,139.6 M1428.7,139.6 L1447.6,139.6 M1450.2,154.7 L1454,154.7 M1456.3,151 L1459.3,151 M1462.7,132.8 L1477.8,132.8 M1481.6,127.1 L1498.6,127.1 M1498.6,127.1 L1501.3,136.6 M1504.3,121.5 L1508.1,121.5 M1510.7,112.4 L1514.5,111.3 M1514.5,111.3 L1516.8,117.7 M1520.5,113.9 L1524.3,113.9 M1525.8,124.5 L1535.7,124.5 M1535.7,124.5 L1538.3,142.6 M1540.2,133.9 L1540.9,141.5 M1540.9,141.5 L1574.2,141.5 M1574.2,141.5 L1577.2,144.5 M1577.2,144.5 L1593.1,143.4 M1604.4,127.1 L1610.1,127.1 M1610.1,127.1 L1612,132.8 M1613.9,120.7 L1630.1,120.7 M1630.1,120.7 L1632.8,127.1 M1632.8,127.1 L1640.4,128.3 M1643.4,126.4 L1645.3,129 M1645.3,129 L1655.5,129 M1658.1,126.4 L1659.6,131.3 M1661.9,126.4 L1664.2,127.5 M1676.3,108.6 L1678.2,110.9 M1678.2,110.9 L1691.4,110.9 M1697.4,100.3 L1702.7,100.3 M1702.7,100.3 L1705,111.6 M1705,111.6 L1717.8,111.6 M1720.9,99.5 L1750,99.5 M1764.3,54.2 L1765.8,63.3 M1776.4,64.8 L1778.3,67.8" fill="none" stroke="#f5a32a" stroke-width="1.9" stroke-linecap="round"/>
<path d="M23.8,353.6 L24.6,349.4 M37.8,353.6 L41.6,347.5 M41.6,347.5 L45.4,343.7 M45.4,343.7 L52.9,341.8 M52.9,341.8 L60.5,338.1 M60.5,338.1 L66.1,334.3 M86.9,337.3 L88.8,331.6 M98.3,331.6 L100.2,322.9 M107.7,322.9 L111.5,314.2 M132.3,314.2 L134.2,311.6 M145.5,311.6 L147.4,305.2 M147.4,305.2 L148.2,312.7 M160.6,312.7 L162.5,300.3 M172,305.2 L177.7,302.9 M183.3,312.7 L187.1,310.1 M199.6,321.8 L204.1,311.6 M204.1,311.6 L208.6,309 M210.2,315.4 L214.7,311.6 M238.1,316.5 L241.9,310.8 M261.6,310.8 L263.8,305.9 M268.4,314.2 L271.4,310.1 M289.2,319.2 L290.3,312.7 M298.6,312.7 L300.5,306.3 M317.5,314.2 L319.4,307.4 M324.3,307.4 L325.8,313.5 M325.8,313.5 L328.8,311.6 M330.7,317.3 L337.5,319.2 M337.5,319.2 L340.2,310.5 M345.9,310.5 L347.7,302.9 M352.3,302.9 L353.8,296.9 M369.7,302.9 L372.3,297.6 M378,297.6 L379.9,293.1 M379.9,293.1 L383.7,298.4 M383.7,298.4 L385.5,291.6 M449.8,291.6 L453.6,287 M453.6,287 L461.1,285.1 M461.1,285.1 L463,282.5 M477,282.5 L479.3,276.4 M516,276.4 L518.6,280.2 M518.6,280.2 L523.5,278.7 M533.7,278.7 L536.7,275.7 M551.9,280.2 L554.9,275.7 M571.5,281.4 L573.8,287 M585.9,291.6 L588.1,282.5 M588.1,282.5 L591.5,276.4 M595.3,276.4 L598,278.7 M604.8,278.7 L607.8,273.8 M610.4,277.6 L612.3,270 M618,281.4 L620.7,275.7 M633.1,285.1 L635.8,279.5 M635.9,278.7 L639.7,275.7 M639.7,275.7 L641.6,268.9 M641.6,268.9 L644.6,261.3 M652.9,261.3 L655.2,256.8 M655.2,256.8 L655.9,266.2 M655.9,266.2 L657.5,257.5 M667.3,273.8 L669.9,264.4 M677.5,264.4 L679.4,256 M679.4,256 L683.2,250 M683.2,250 L686.2,242.8 M693.7,242.8 L695.3,237.1 M695.3,237.1 L696.8,245.5 M696.8,245.5 L698.3,237.1 M709.6,237.1 L710.7,231.1 M733.1,242.4 L736.1,237.9 M736.1,237.9 L740.6,236 M740.6,236 L742.9,232.2 M745.5,239.8 L747.4,229.6 M747.4,229.6 L753.1,227.3 M758,231.1 L761,222 M766.3,222 L769.3,225.8 M769.3,225.8 L772,222 M779.5,222 L781.4,217.1 M792.8,217.1 L796.6,212.6 M807.9,212.6 L810.9,209.9 M815.5,209.9 L817.3,206.9 M820,209.2 L823,202 M823,202 L826,198.2 M828.7,200.8 L831.3,197.1 M855.1,211.4 L860.8,208.4 M860.8,208.4 L863.8,202.4 M872.9,202.4 L875.2,198.2 M898.6,198.2 L900.5,195.2 M909.9,195.2 L913,193.3 M921.3,193.3 L923.2,198.2 M923.2,198.2 L925.8,188 M925.8,188 L930.7,185.7 M930.7,185.7 L932.6,178.2 M938.3,178.2 L940.9,183.1 M940.9,183.1 L944,179.3 M944,179.3 L949.6,177.4 M954.6,188 L961,185.7 M972.3,192.5 L975,185.7 M978,190.6 L981.8,185.7 M981.8,185.7 L985.5,188 M985.5,188 L991.2,185 M991.2,185 L993.1,181.2 M998.8,181.2 L1000.7,179.3 M1000.7,179.3 L1002.6,181.2 M1023.3,191.8 L1026.4,196.3 M1038.5,196.3 L1042.2,183.1 M1042.2,183.1 L1047.2,178.2 M1058.9,196.3 L1060.4,191 M1071.7,191 L1074.4,188 M1083.8,188 L1086.8,196.3 M1086.8,196.3 L1088.4,193.3 M1112.5,199.3 L1114.8,194.4 M1114.8,194.4 L1118.6,191.8 M1128.4,200.8 L1132.2,184.2 M1132.2,184.2 L1134.9,190.6 M1134.9,190.6 L1138.3,206.9 M1138.3,206.9 L1140.5,190.6 M1144.3,189.5 L1146.2,185 M1157.5,194.4 L1159.4,180.4 M1159.4,180.4 L1164,172.9 M1164,172.9 L1167,179.3 M1210.6,195.6 L1213.2,191.8 M1213.2,191.8 L1217,207.7 M1217,207.7 L1219.7,188.8 M1237,188.8 L1238.6,184.2 M1281.3,194.8 L1283.2,190.6 M1285,197.1 L1286.9,191.8 M1309.6,196.3 L1311.5,191.8 M1311.5,191.8 L1315.3,193.3 M1315.3,193.3 L1319.1,188.8 M1319.1,188.8 L1321,181.2 M1321,181.2 L1324.7,184.2 M1324.7,184.2 L1328.5,181.2 M1328.5,181.2 L1332.3,175.5 M1339.9,175.5 L1342.9,166.8 M1362.5,166.8 L1364.8,159.3 M1373.9,159.3 L1375.8,156.6 M1383.3,160.4 L1385.2,162.3 M1385.2,162.3 L1390.9,158.5 M1390.9,158.5 L1393.5,152.8 M1395,159.3 L1398.4,146.4 M1404.1,145.3 L1406.4,139.6 M1422.3,139.6 L1423.8,144.2 M1423.8,144.2 L1425.7,135.8 M1425.7,135.8 L1428.7,139.6 M1447.6,139.6 L1450.2,154.7 M1454,154.7 L1456.3,151 M1459.3,151 L1462.7,132.8 M1477.8,132.8 L1479,136.6 M1479,136.6 L1481.6,127.1 M1501.3,136.6 L1504.3,121.5 M1508.1,121.5 L1510.7,112.4 M1516.8,117.7 L1520.5,113.9 M1524.3,113.9 L1525.8,124.5 M1538.3,142.6 L1540.2,133.9 M1593.1,143.4 L1596.1,138.5 M1596.1,138.5 L1601.4,137 M1601.4,137 L1604.4,127.1 M1612,132.8 L1613.9,120.7 M1640.4,128.3 L1641.5,137.7 M1641.5,137.7 L1643.4,126.4 M1655.5,129 L1658.1,126.4 M1659.6,131.3 L1661.9,126.4 M1664.2,127.5 L1666.8,113.9 M1666.8,113.9 L1672.5,111.6 M1672.5,111.6 L1676.3,108.6 M1691.4,110.9 L1693.6,115.4 M1693.6,115.4 L1695.9,107.5 M1695.9,107.5 L1697.4,100.3 M1717.8,111.6 L1720.9,99.5 M1750,99.5 L1751.9,82.9 M1751.9,82.9 L1755.6,79.9 M1755.6,79.9 L1757.9,64 M1757.9,64 L1762.4,62.5 M1762.4,62.5 L1764.3,54.2 M1765.8,63.3 L1776.4,64.8 M1778.3,67.8 L1779.8,55.7 M1779.8,55.7 L1780.6,68.6 M1780.6,68.6 L1783.2,70.8" fill="none" stroke="#5a93f6" stroke-width="1.9" stroke-linecap="round"/>
<rect x="0" y="346" width="1840" height="1" fill="#f48f99"/>
<rect x="0" y="353" width="1840" height="1.1" fill="#3636e0"/>
<path d="M24,480h3V575h-3ZM38,480h2V575h-2ZM42,480h3V575h-3ZM51,480h3V575h-3ZM58,480h3V575h-3ZM63,480h5V575h-5ZM87,480h3V575h-3ZM98,480h3V575h-3ZM108,480h4V575h-4ZM132,480h3V575h-3ZM146,480h3V575h-3ZM160,480h3V575h-3ZM167,480h5V575h-5ZM176,480h8V575h-8ZM201,480h3V575h-3ZM208,480h3V575h-3ZM215,480h3V575h-3ZM239,480h2V575h-2ZM262,480h10V575h-10ZM283,480h1V575h-1ZM290,480h1V575h-1ZM313,480h2V575h-2ZM325,480h1V575h-1ZM329,480h3V575h-3ZM338,480h3V575h-3ZM347,480h2V575h-2ZM352,480h2V575h-2ZM360,480h3V575h-3ZM369,480h3V575h-3ZM379,480h7V575h-7ZM451,480h5V575h-5ZM461,480h2V575h-2ZM478,480h2V575h-2ZM516,480h5V575h-5ZM531,480h4V575h-4ZM548,480h2V575h-2ZM553,480h3V575h-3ZM567,480h2V575h-2ZM572,480h3V575h-3ZM586,480h5V575h-5ZM595,480h2V575h-2ZM608,480h5V575h-5ZM614,480h2V575h-2ZM618,480h2V575h-2ZM625,480h1V575h-1ZM634,480h2V575h-2ZM625,480h1V575h-1ZM634,480h2V575h-2ZM641,480h3V575h-3ZM654,480h3V575h-3ZM658,480h1V575h-1ZM659,480h1V575h-1ZM666,480h4V575h-4ZM678,480h8V575h-8ZM693,480h5V575h-5ZM710,480h1V575h-1ZM720,480h2V575h-2ZM734,480h2V575h-2ZM738,480h2V575h-2ZM741,480h2V575h-2ZM744,480h3V575h-3ZM752,480h10V575h-10ZM766,480h5V575h-5ZM779,480h3V575h-3ZM794,480h4V575h-4ZM807,480h3V575h-3ZM815,480h3V575h-3ZM821,480h2V575h-2ZM827,480h2V575h-2ZM831,480h2V575h-2ZM849,480h7V575h-7ZM861,480h3V575h-3ZM874,480h2V575h-2ZM899,480h2V575h-2ZM911,480h1V575h-1ZM920,480h5V575h-5ZM930,480h4V575h-4ZM940,480h3V575h-3ZM947,480h3V575h-3ZM952,480h2V575h-2ZM962,480h2V575h-2ZM971,480h7V575h-7ZM984,480h4V575h-4ZM991,480h3V575h-3ZM999,480h1V575h-1ZM1021,480h5V575h-5ZM1038,480h5V575h-5ZM1045,480h5V575h-5ZM1058,480h2V575h-2ZM1073,480h1V575h-1ZM1086,480h2V575h-2ZM1111,480h3V575h-3ZM1118,480h2V575h-2ZM1128,480h5V575h-5ZM1136,480h3V575h-3ZM1145,480h2V575h-2ZM1158,480h2V575h-2ZM1163,480h5V575h-5ZM1175,480h2V575h-2ZM1211,480h8V575h-8ZM1238,480h3V575h-3ZM1240,480h1V575h-1ZM1265,480h3V575h-3ZM1282,480h3V575h-3ZM1300,480h2V575h-2ZM1311,480h11V575h-11ZM1324,480h1V575h-1ZM1331,480h3V575h-3ZM1341,480h3V575h-3ZM1363,480h2V575h-2ZM1375,480h3V575h-3ZM1382,480h6V575h-6ZM1392,480h8V575h-8ZM1405,480h2V575h-2ZM1412,480h3V575h-3ZM1422,480h5V575h-5ZM1448,480h3V575h-3ZM1453,480h2V575h-2ZM1460,480h2V575h-2ZM1477,480h6V575h-6ZM1499,480h6V575h-6ZM1509,480h3V575h-3ZM1514,480h3V575h-3ZM1518,480h3V575h-3ZM1524,480h3V575h-3ZM1536,480h6V575h-6ZM1575,480h2V575h-2ZM1595,480h2V575h-2ZM1602,480h5V575h-5ZM1612,480h3V575h-3ZM1631,480h3V575h-3ZM1641,480h3V575h-3ZM1656,480h5V575h-5ZM1663,480h3V575h-3ZM1671,480h3V575h-3ZM1676,480h3V575h-3ZM1693,480h5V575h-5ZM1702,480h3V575h-3ZM1719,480h2V575h-2ZM1751,480h1V575h-1ZM1756,480h2V575h-2ZM1763,480h3V575h-3ZM1778,480h2V575h-2ZM1604,384h3V480h-3Z" fill="#6399fa"/>
<rect x="0" y="575" width="1845" height="1.1" fill="#3636e0"/>
<path d="M0.5,831V838M1.5,834V839M2.5,836V846M3.5,836V842M6.5,828V841M8.5,838V849M9.5,841V858M10.5,845V848M11.5,845V855M12.5,850V853M14.5,851V856M16.5,849V854M20.5,844V851M21.5,846V851M23.5,845V848M24.5,845V851M26.5,847V850M28.5,847V854M29.5,848V852M30.5,848V855M31.5,850V855M35.5,845V850M36.5,844V851M42.5,837V841M43.5,837V842M44.5,839V844M48.5,828V838M49.5,828V834M50.5,831V834M52.5,829V839M55.5,830V832M57.5,828V831M58.5,830V833M60.5,825V837M63.5,824V828M64.5,826V830M65.5,826V834M68.5,823V827M72.5,816V822M75.5,817V821M77.5,812V821M79.5,815V819M85.5,809V815M88.5,808V815M92.5,808V810M94.5,808V811M95.5,810V822M98.5,808V817M99.5,812V818M100.5,814V819M102.5,815V822M105.5,807V819M109.5,800V822M112.5,799V804M113.5,799V803M115.5,796V802M116.5,794V806M122.5,779V784M123.5,780V794M128.5,772V776M131.5,771V783M134.5,773V776M137.5,772V782M138.5,774V777M139.5,775V783M141.5,772V788M142.5,783V789M143.5,788V801M145.5,789V794M147.5,788V794M149.5,791V800M150.5,792V798M151.5,794V798M154.5,795V797M157.5,790V800M158.5,793V798M159.5,794V796M161.5,786V791M166.5,781V787M168.5,778V785M173.5,777V779M176.5,772V776M177.5,773V780M178.5,775V779M180.5,775V781M181.5,777V782M184.5,774V783M189.5,774V779M191.5,773V776M193.5,773V779M195.5,775V788M197.5,779V803M198.5,784V799M199.5,789V803M201.5,799V806M203.5,798V804M204.5,802V809M205.5,805V813M206.5,808V811M208.5,808V814M209.5,810V817M210.5,811V815M213.5,813V819M214.5,816V823M215.5,819V825M217.5,820V822M218.5,821V829M220.5,818V825M225.5,809V815M227.5,807V819M234.5,797V805M235.5,800V806M237.5,799V806M239.5,799V803M241.5,797V804M242.5,799V804M243.5,801V807M245.5,797V804M246.5,801V805M247.5,803V808M250.5,801V818M251.5,805V815M252.5,812V816M253.5,816V825M254.5,817V824M255.5,819V822M256.5,822V824M261.5,818V823M263.5,814V821M265.5,819V824M266.5,821V825M267.5,823V825M268.5,821V828M270.5,819V829M271.5,826V831M272.5,827V830M273.5,826V839M274.5,829V837M278.5,820V838M281.5,826V850M282.5,838V858M283.5,849V864M284.5,854V860M285.5,854V860M286.5,857V875M287.5,862V877M288.5,869V881M289.5,876V887M294.5,865V868M295.5,866V872M296.5,869V882M297.5,873V878M298.5,875V881M299.5,879V887M301.5,879V884M304.5,874V880M309.5,872V878M310.5,876V881M311.5,878V882M313.5,876V880M314.5,876V885M315.5,879V888M317.5,882V886M319.5,882V887M320.5,880V888M325.5,879V897M326.5,884V890M327.5,886V897M328.5,891V904M329.5,898V901M330.5,899V906M337.5,885V891M340.5,886V896M344.5,880V902M351.5,865V872M352.5,868V880M357.5,860V865M358.5,863V868M361.5,861V874M362.5,864V867M365.5,859V867M366.5,864V870M367.5,865V868M368.5,867V869M376.5,854V864M377.5,858V864M378.5,860V879M385.5,840V849M386.5,838V846M388.5,840V843M390.5,839V842M392.5,837V845M394.5,838V842M396.5,838V846M401.5,841V848M404.5,836V846M406.5,842V850M407.5,840V851M408.5,849V854M409.5,851V854M415.5,846V849M418.5,839V846M422.5,837V841M424.5,834V845M425.5,839V844M427.5,838V841M430.5,836V840M432.5,836V841M433.5,831V846M435.5,842V853M436.5,846V867M437.5,850V859M441.5,850V855M444.5,846V853M447.5,844V858M451.5,832V840M452.5,833V837M454.5,831V841M455.5,834V838M458.5,825V829M459.5,828V837M461.5,829V833M462.5,830V836M464.5,832V835M465.5,833V837M468.5,830V834M469.5,827V837M470.5,832V842M473.5,834V839M474.5,839V842M477.5,837V840M479.5,836V839M482.5,833V837M485.5,831V838M487.5,829V835M491.5,824V834M492.5,826V838M495.5,821V825M498.5,819V828M499.5,824V828M500.5,827V833M501.5,828V836M503.5,833V838M505.5,831V843M506.5,837V839M509.5,834V840M510.5,836V839M515.5,823V829M518.5,822V829M520.5,824V829M522.5,822V826M525.5,820V823M530.5,814V820M531.5,814V824M532.5,817V820M533.5,818V822M535.5,815V819M538.5,810V814M541.5,806V812M544.5,801V807M545.5,804V809M547.5,805V811M548.5,805V808M551.5,804V806M553.5,798V807M554.5,801V807M559.5,795V801M563.5,795V799M564.5,794V798M565.5,793V803M567.5,799V808M568.5,801V810M571.5,801V811M573.5,808V810M574.5,809V813M575.5,811V824M579.5,804V808M584.5,797V808M592.5,792V796M593.5,790V796M594.5,795V811M596.5,797V801M599.5,797V801M601.5,797V800M604.5,797V800M610.5,795V797M614.5,792V796M616.5,794V800M617.5,793V803M619.5,790V802M620.5,797V807M621.5,800V821M623.5,808V818M624.5,812V819M625.5,811V830M626.5,822V845M627.5,830V844M628.5,832V844M629.5,838V859M630.5,845V869M631.5,846V856M633.5,850V853M634.5,847V857M636.5,850V856M639.5,848V860M641.5,845V853M643.5,845V855M644.5,842V855M648.5,839V842M649.5,839V845M650.5,839V846M651.5,842V846M656.5,834V840M657.5,838V856M659.5,835V841M660.5,836V849M661.5,841V848M663.5,844V849M666.5,842V847M671.5,838V841M680.5,814V825M683.5,810V819M684.5,810V822M685.5,815V827M687.5,812V825M689.5,813V832M693.5,811V815M694.5,810V816M702.5,801V806M703.5,800V806M704.5,802V809M705.5,804V814M706.5,809V812M708.5,811V817M710.5,811V815M713.5,810V817M715.5,811V816M716.5,814V820M717.5,814V827M718.5,821V829M719.5,822V828M720.5,825V830M723.5,824V831M725.5,825V828M726.5,827V830M728.5,827V833M729.5,829V831M731.5,829V833M733.5,824V834M734.5,828V835M740.5,808V825M741.5,813V816M746.5,799V804M747.5,800V807M748.5,805V811M751.5,803V807M753.5,802V807M756.5,801V816M757.5,799V806M758.5,802V806M766.5,794V799M768.5,790V796M769.5,785V796M770.5,792V802M773.5,790V796M775.5,791V796M777.5,791V795M778.5,791V797M779.5,794V800M781.5,796V801M783.5,797V803M785.5,797V800M786.5,797V803M793.5,786V794M794.5,790V806M796.5,785V789M799.5,786V790M800.5,787V794M804.5,781V788M810.5,778V782M811.5,777V783M814.5,776V782M816.5,777V781M819.5,777V781M820.5,778V784M821.5,780V787M822.5,778V786M824.5,779V782M827.5,775V780M828.5,777V780M831.5,775V781M832.5,779V783M834.5,775V783M835.5,776V783M836.5,780V784M837.5,781V785M839.5,781V789M840.5,783V787M844.5,773V785M845.5,774V781M850.5,767V773M851.5,770V773M852.5,769V773M853.5,772V775M859.5,770V778M862.5,774V778M863.5,775V780M870.5,761V767M872.5,759V762M873.5,758V763M874.5,760V763M875.5,761V764M876.5,761V764M878.5,762V765M879.5,764V768M881.5,763V771M885.5,764V769M886.5,762V767M887.5,763V774M888.5,765V775M894.5,754V759M897.5,751V761M899.5,750V752M903.5,745V751M909.5,739V744M911.5,739V750M914.5,741V745M916.5,739V745M917.5,740V745M920.5,736V741M926.5,731V739M928.5,730V738M932.5,730V734M935.5,728V733M936.5,731V739M938.5,733V737M940.5,728V737M943.5,729V734M944.5,732V735M947.5,733V739M948.5,734V741M949.5,736V745M952.5,736V743M953.5,737V742M954.5,738V742M955.5,739V742M957.5,734V742M959.5,735V743M961.5,737V743M965.5,735V739M971.5,726V733M974.5,725V734M975.5,729V733M977.5,729V733M984.5,712V722M986.5,714V721M988.5,715V721M989.5,714V718M990.5,716V721M991.5,715V720M993.5,717V719M994.5,716V727M995.5,720V724M996.5,720V731M997.5,722V728M999.5,719V741M1000.5,727V747M1001.5,735V744M1002.5,737V752M1006.5,740V743M1008.5,737V744M1012.5,730V740M1013.5,731V739M1015.5,730V732M1017.5,727V731M1020.5,723V733M1022.5,723V731M1024.5,728V743M1025.5,734V753M1026.5,722V743M1027.5,740V747M1028.5,746V752M1029.5,747V753M1030.5,751V755M1032.5,744V753M1037.5,741V748M1038.5,741V746M1043.5,729V738M1045.5,732V734M1046.5,730V737M1051.5,728V732M1052.5,729V732M1055.5,727V733M1057.5,726V732M1058.5,728V734M1065.5,697V711M1067.5,699V707M1069.5,696V717M1074.5,682V690M1075.5,682V695M1081.5,665V671M1083.5,664V683M1086.5,662V671M1088.5,656V662M1090.5,656V661M1091.5,655V662M1092.5,659V665M1094.5,655V669M1095.5,665V674M1096.5,670V681M1097.5,674V683M1101.5,678V685M1106.5,666V675M1107.5,669V678M1108.5,670V678M1109.5,673V679M1110.5,670V680M1112.5,674V683M1113.5,673V683M1114.5,680V683M1115.5,681V686M1116.5,682V685M1117.5,683V688M1121.5,677V683M1123.5,676V678M1130.5,666V670M1131.5,664V679M1133.5,663V674M1134.5,665V676M1135.5,669V680M1136.5,676V687M1137.5,679V704M1138.5,699V716M1139.5,706V735M1144.5,717V719M1145.5,717V723M1146.5,719V727M1147.5,722V727M1148.5,724V730M1149.5,727V741M1150.5,730V735M1151.5,728V734M1159.5,700V713M1160.5,703V711M1161.5,705V712M1166.5,681V699M1167.5,684V700M1173.5,672V678M1174.5,675V680M1175.5,678V681M1176.5,675V688M1177.5,680V690M1179.5,683V693M1180.5,689V700M1181.5,694V708M1182.5,693V713M1183.5,696V708M1184.5,700V718M1186.5,709V727M1187.5,720V731M1189.5,726V739M1190.5,729V751M1193.5,733V745M1194.5,736V753M1195.5,739V754M1197.5,750V760M1202.5,741V749M1207.5,718V729M1210.5,713V721M1212.5,716V720M1215.5,717V721M1218.5,716V724M1220.5,716V721M1224.5,713V723M1225.5,715V718M1227.5,717V721M1228.5,714V723M1229.5,719V723M1231.5,721V724M1232.5,723V727M1238.5,716V719M1240.5,716V722M1241.5,716V728M1242.5,718V732M1243.5,728V733M1244.5,725V744M1245.5,739V747M1251.5,727V737M1258.5,711V724M1261.5,708V713M1264.5,700V704M1265.5,700V705M1267.5,699V706M1269.5,701V703M1270.5,700V705M1272.5,699V705M1274.5,700V704M1279.5,699V705M1280.5,700V703M1281.5,700V705M1283.5,692V703M1284.5,700V703M1285.5,699V704M1286.5,699V705M1287.5,700V704M1288.5,699V706M1289.5,697V707M1293.5,701V708M1296.5,698V704M1306.5,675V682M1307.5,679V701M1310.5,673V676M1314.5,663V674M1316.5,669V677M1319.5,671V675M1327.5,661V663M1330.5,658V665M1332.5,657V662M1334.5,656V662M1335.5,658V663M1336.5,661V664M1340.5,658V661M1345.5,655V664M1346.5,655V660M1348.5,649V653M1354.5,637V652M1359.5,637V644M1361.5,634V639M1362.5,636V641M1365.5,635V642M1367.5,637V640M1368.5,637V641M1369.5,636V642M1371.5,637V642M1372.5,637V644M1373.5,640V644M1375.5,641V648M1376.5,642V646M1377.5,634V650M1379.5,641V650M1381.5,645V650M1382.5,640V655M1383.5,647V654M1385.5,643V657M1386.5,653V661M1387.5,657V675M1394.5,653V659M1400.5,638V644M1401.5,641V652M1402.5,640V652M1403.5,644V646M1407.5,630V648M1408.5,634V648M1411.5,637V645M1414.5,629V634M1418.5,623V627M1419.5,618V629M1420.5,623V630M1421.5,625V635M1423.5,624V627M1426.5,624V626M1427.5,623V629M1428.5,624V627M1429.5,626V635M1431.5,621V629M1432.5,624V629M1434.5,624V629M1435.5,627V633M1440.5,621V633M1441.5,618V625M1443.5,622V626M1444.5,623V626M1446.5,617V631M1448.5,612V642M1449.5,622V628M1450.5,620V636M1451.5,624V646M1452.5,629V662M1453.5,648V657M1454.5,648V664M1458.5,642V647M1459.5,645V651M1460.5,647V650M1461.5,645V653M1462.5,646V657M1463.5,651V655M1464.5,653V656M1465.5,655V659M1466.5,654V657M1469.5,651V657M1470.5,654V664M1473.5,645V655M1477.5,638V644M1478.5,637V649M1482.5,630V644M1483.5,634V640M1484.5,633V641M1489.5,633V638M1490.5,637V642M1491.5,639V648M1493.5,638V644M1494.5,638V646M1495.5,642V644M1496.5,643V649M1498.5,643V648M1500.5,645V649M1501.5,645V648M1505.5,643V650M1509.5,641V652M1513.5,640V644M1515.5,635V646M1516.5,642V644M1517.5,640V649M1521.5,644V647M1522.5,640V650M1523.5,646V653M1527.5,640V653M1528.5,649V653M1529.5,651V658M1530.5,652V664M1531.5,656V659M1532.5,657V662M1534.5,656V660M1537.5,652V657M1538.5,649V661M1539.5,654V665M1540.5,655V679M1541.5,656V671M1542.5,663V669M1543.5,662V674M1545.5,663V681M1547.5,664V667M1548.5,665V673M1549.5,671V680M1551.5,666V680M1552.5,674V678M1554.5,671V685M1555.5,677V686M1556.5,682V702M1558.5,686V704M1559.5,688V702M1560.5,692V698M1564.5,694V699M1569.5,684V687M1573.5,679V685M1575.5,677V687M1576.5,678V687M1578.5,678V685M1585.5,671V679M1587.5,671V675M1589.5,672V676M1590.5,672V676M1591.5,672V677M1593.5,672V677M1595.5,672V679M1597.5,667V674M1599.5,671V678M1605.5,654V658M1607.5,651V660M1609.5,651V655M1610.5,651V655M1612.5,649V655M1613.5,652V656M1614.5,650V657M1615.5,653V657M1617.5,654V658M1618.5,655V660M1619.5,658V661M1622.5,656V665M1624.5,653V661M1628.5,652V662M1635.5,637V652M1636.5,642V650M1638.5,644V659M1639.5,642V655M1640.5,649V656M1641.5,652V669M1643.5,659V670M1645.5,660V665M1646.5,663V666M1648.5,664V669M1649.5,662V673M1651.5,655V668M1659.5,648V658M1660.5,648V655M1666.5,644V653M1668.5,647V654M1679.5,625V630M1681.5,626V629M1682.5,626V631M1685.5,616V627M1686.5,621V626M1689.5,617V625M1691.5,620V623M1693.5,620V623M1695.5,618V623M1696.5,616V622M1697.5,616V621M1698.5,617V621M1700.5,618V628M1702.5,616V628M1703.5,619V626M1708.5,615V624M1710.5,607V615M1711.5,612V622M1712.5,621V639M1713.5,615V635M1714.5,628V654M1715.5,643V663M1716.5,647V686M1717.5,663V691M1718.5,680V698M1719.5,690V713M1720.5,706V732M1721.5,720V766M1730.5,693V704M1731.5,691V701M1734.5,694V697M1735.5,694V703M1737.5,695V701M1738.5,696V702M1744.5,664V682M1745.5,672V678M1747.5,668V679M1752.5,636V651M1755.5,644V652M1756.5,649V655M1761.5,636V647M1762.5,643V653M1768.5,637V640M1769.5,636V644M1770.5,638V643M1771.5,638V643M1775.5,630V643M1780.5,627V630M1717.5,640V722M1719.5,687V766" stroke="#ec666c" stroke-width="1" fill="none"/>
<path d="M4.5,833V844M5.5,835V838M7.5,835V849M13.5,851V856M15.5,850V855M17.5,852V857M18.5,849V855M19.5,844V853M22.5,844V853M25.5,842V851M27.5,847V851M32.5,851V857M33.5,847V852M34.5,846V849M37.5,846V851M38.5,844V849M39.5,843V845M40.5,840V844M41.5,837V843M45.5,837V844M46.5,832V840M47.5,829V836M51.5,825V837M53.5,829V834M54.5,828V839M56.5,828V839M59.5,828V836M61.5,829V844M62.5,824V842M66.5,824V828M67.5,822V832M69.5,823V826M70.5,820V825M71.5,817V827M73.5,817V828M74.5,816V823M76.5,815V821M78.5,812V825M80.5,817V819M81.5,816V818M82.5,813V821M83.5,814V821M84.5,808V817M86.5,810V815M87.5,807V812M89.5,810V812M90.5,808V812M91.5,807V811M93.5,808V811M96.5,811V817M97.5,811V814M101.5,812V820M103.5,813V820M104.5,807V819M106.5,812V823M107.5,806V823M108.5,803V810M110.5,801V810M111.5,798V807M114.5,790V802M117.5,787V811M118.5,784V805M119.5,781V789M120.5,777V786M121.5,779V787M124.5,782V786M125.5,780V785M126.5,774V782M127.5,771V777M129.5,771V780M130.5,772V777M132.5,770V783M133.5,771V776M135.5,771V780M136.5,770V785M140.5,779V789M144.5,786V791M146.5,788V795M148.5,788V794M152.5,795V797M153.5,792V798M155.5,795V798M156.5,793V801M160.5,785V797M162.5,787V791M163.5,786V795M164.5,781V791M165.5,780V786M167.5,778V783M169.5,778V784M170.5,779V785M171.5,778V784M172.5,777V780M174.5,773V782M175.5,774V777M179.5,774V781M182.5,779V782M183.5,778V782M185.5,778V782M186.5,774V782M187.5,775V778M188.5,774V778M190.5,773V777M192.5,773V777M194.5,772V779M196.5,775V786M200.5,794V809M202.5,799V810M207.5,807V815M211.5,812V818M212.5,812V819M216.5,815V823M219.5,820V827M221.5,816V824M222.5,817V827M223.5,811V821M224.5,804V814M226.5,810V813M228.5,808V817M229.5,805V813M230.5,806V813M231.5,805V810M232.5,802V806M233.5,801V804M236.5,799V806M238.5,799V802M240.5,800V804M244.5,799V806M248.5,804V813M249.5,805V822M257.5,823V828M258.5,822V826M259.5,820V825M260.5,816V826M262.5,819V829M264.5,820V822M269.5,824V831M275.5,832V837M276.5,831V834M277.5,831V833M279.5,829V836M280.5,821V831M290.5,879V883M291.5,871V882M292.5,870V875M293.5,865V872M300.5,878V884M302.5,876V881M303.5,873V881M305.5,875V878M306.5,872V877M307.5,872V876M308.5,870V876M312.5,878V886M316.5,882V887M318.5,878V887M321.5,883V894M322.5,878V886M323.5,880V883M324.5,876V883M331.5,899V901M332.5,895V900M333.5,897V900M334.5,891V901M335.5,888V895M336.5,885V896M338.5,887V891M339.5,881V887M341.5,887V895M342.5,887V903M343.5,877V897M345.5,878V885M346.5,873V887M347.5,871V878M348.5,871V877M349.5,871V878M350.5,864V872M353.5,867V872M354.5,864V870M355.5,860V868M356.5,859V863M359.5,863V869M360.5,862V866M363.5,864V866M364.5,859V868M369.5,868V871M370.5,863V869M371.5,865V871M372.5,856V874M373.5,862V866M374.5,860V873M375.5,855V864M379.5,860V872M380.5,849V864M381.5,845V857M382.5,845V855M383.5,844V849M384.5,840V847M387.5,841V845M389.5,838V845M391.5,837V844M393.5,837V842M395.5,838V843M397.5,844V848M398.5,842V846M399.5,841V846M400.5,839V848M402.5,842V850M403.5,841V845M405.5,842V847M410.5,851V855M411.5,851V856M412.5,847V851M413.5,847V850M414.5,844V858M416.5,841V852M417.5,842V847M419.5,839V844M420.5,841V844M421.5,838V843M423.5,836V839M426.5,838V845M428.5,839V841M429.5,833V840M431.5,831V842M434.5,843V846M438.5,853V857M439.5,852V855M440.5,851V860M442.5,846V855M443.5,844V863M445.5,837V850M446.5,843V851M448.5,840V848M449.5,839V843M450.5,835V840M453.5,832V838M456.5,827V838M457.5,825V830M460.5,829V834M463.5,832V836M466.5,833V841M467.5,831V837M471.5,836V841M472.5,834V838M475.5,838V841M476.5,836V840M478.5,836V840M480.5,834V840M481.5,833V837M483.5,832V845M484.5,831V837M486.5,830V837M488.5,828V835M489.5,828V833M490.5,825V835M493.5,823V831M494.5,821V832M496.5,816V824M497.5,820V824M502.5,830V843M504.5,834V837M507.5,837V839M508.5,834V839M511.5,832V839M512.5,830V844M513.5,827V833M514.5,824V828M516.5,825V830M517.5,820V827M519.5,824V830M521.5,824V829M523.5,821V827M524.5,818V825M526.5,819V822M527.5,820V823M528.5,818V822M529.5,817V821M534.5,815V820M536.5,814V818M537.5,810V816M539.5,808V814M540.5,808V812M542.5,804V809M543.5,803V814M546.5,803V809M549.5,806V809M550.5,803V807M552.5,804V811M555.5,801V809M556.5,802V807M557.5,800V807M558.5,798V806M560.5,799V802M561.5,794V801M562.5,796V799M566.5,795V804M569.5,805V809M570.5,804V810M572.5,806V818M576.5,806V817M577.5,806V820M578.5,802V809M580.5,802V809M581.5,805V811M582.5,798V807M583.5,797V807M585.5,795V808M586.5,798V810M587.5,798V813M588.5,796V801M589.5,796V799M590.5,795V799M591.5,793V797M595.5,797V802M597.5,798V801M598.5,796V802M600.5,798V801M602.5,797V801M603.5,797V800M605.5,797V801M606.5,796V799M607.5,795V798M608.5,795V799M609.5,793V802M611.5,794V798M612.5,792V799M613.5,792V797M615.5,794V800M618.5,796V806M622.5,804V814M632.5,851V859M635.5,851V858M637.5,853V857M638.5,850V854M640.5,849V852M642.5,847V859M645.5,835V855M646.5,839V846M647.5,838V845M652.5,842V846M653.5,840V845M654.5,838V841M655.5,834V846M658.5,832V847M662.5,843V849M664.5,842V847M665.5,838V845M667.5,839V844M668.5,839V842M669.5,838V842M670.5,837V842M672.5,830V845M673.5,836V842M674.5,835V837M675.5,828V849M676.5,823V838M677.5,825V830M678.5,822V826M679.5,817V825M681.5,819V826M682.5,813V823M686.5,818V837M688.5,817V825M690.5,815V824M691.5,816V830M692.5,809V820M695.5,807V814M696.5,806V816M697.5,808V817M698.5,806V817M699.5,804V808M700.5,800V807M701.5,802V806M707.5,808V813M709.5,812V815M711.5,810V816M712.5,810V814M714.5,813V816M721.5,824V831M722.5,823V833M724.5,826V830M727.5,823V834M730.5,827V831M732.5,824V834M735.5,827V844M736.5,826V834M737.5,820V829M738.5,816V825M739.5,809V818M742.5,813V818M743.5,807V816M744.5,800V813M745.5,800V817M749.5,805V816M750.5,802V809M752.5,803V807M754.5,804V808M755.5,797V808M759.5,801V807M760.5,797V804M761.5,799V809M762.5,797V804M763.5,794V808M764.5,795V800M765.5,793V801M767.5,791V797M771.5,795V799M772.5,794V798M774.5,791V796M776.5,789V795M780.5,791V801M782.5,796V800M784.5,794V804M787.5,797V801M788.5,792V815M789.5,791V798M790.5,793V796M791.5,790V795M792.5,785V796M795.5,786V796M797.5,782V790M798.5,784V790M801.5,789V798M802.5,787V793M803.5,782V789M805.5,782V791M806.5,779V785M807.5,780V786M808.5,770V787M809.5,779V782M812.5,777V781M813.5,772V781M815.5,776V783M817.5,778V781M818.5,778V781M823.5,776V782M825.5,778V781M826.5,771V779M829.5,775V781M830.5,775V780M833.5,775V783M838.5,780V790M841.5,774V790M842.5,775V791M843.5,774V780M846.5,772V779M847.5,770V776M848.5,769V774M849.5,767V773M854.5,771V776M855.5,768V774M856.5,768V773M857.5,767V778M858.5,766V778M860.5,774V779M861.5,773V780M864.5,775V780M865.5,770V779M866.5,766V776M867.5,760V772M868.5,759V774M869.5,761V766M871.5,757V774M877.5,761V772M880.5,764V767M882.5,766V769M883.5,765V771M884.5,764V768M889.5,759V769M890.5,760V765M891.5,758V767M892.5,750V762M893.5,752V762M895.5,754V760M896.5,753V755M898.5,748V757M900.5,749V757M901.5,748V751M902.5,748V752M904.5,744V752M905.5,747V752M906.5,743V758M907.5,740V747M908.5,737V743M910.5,741V744M912.5,740V748M913.5,741V748M915.5,738V743M918.5,741V743M919.5,735V741M921.5,737V739M922.5,734V750M923.5,735V740M924.5,734V738M925.5,726V736M927.5,735V739M929.5,734V739M930.5,731V737M931.5,730V736M933.5,729V733M934.5,727V730M937.5,731V736M939.5,734V737M941.5,734V738M942.5,731V735M945.5,733V743M946.5,728V736M950.5,735V741M951.5,735V742M956.5,734V744M958.5,736V740M960.5,737V746M962.5,738V741M963.5,734V741M964.5,731V739M966.5,733V737M967.5,732V738M968.5,733V738M969.5,724V735M970.5,728V733M972.5,726V738M973.5,726V731M976.5,728V731M978.5,721V733M979.5,724V737M980.5,724V730M981.5,723V728M982.5,721V725M983.5,716V724M985.5,714V718M987.5,716V718M992.5,714V721M998.5,723V735M1003.5,736V748M1004.5,739V746M1005.5,741V744M1007.5,738V744M1009.5,737V742M1010.5,728V739M1011.5,730V736M1014.5,727V735M1016.5,728V734M1018.5,728V731M1019.5,727V732M1021.5,723V730M1023.5,723V734M1031.5,751V755M1033.5,748V756M1034.5,741V750M1035.5,743V755M1036.5,741V751M1039.5,738V758M1040.5,739V749M1041.5,734V744M1042.5,730V737M1044.5,729V742M1047.5,731V736M1048.5,727V735M1049.5,728V732M1050.5,728V731M1053.5,730V740M1054.5,730V734M1056.5,729V732M1059.5,726V734M1060.5,719V729M1061.5,718V724M1062.5,706V725M1063.5,706V718M1064.5,697V711M1066.5,699V720M1068.5,696V704M1070.5,687V705M1071.5,689V696M1072.5,684V692M1073.5,682V690M1076.5,688V697M1077.5,681V696M1078.5,679V690M1079.5,667V692M1080.5,664V684M1082.5,659V671M1084.5,664V676M1085.5,660V667M1087.5,655V668M1089.5,657V660M1093.5,660V664M1098.5,676V684M1099.5,675V684M1100.5,676V680M1102.5,677V683M1103.5,671V680M1104.5,671V675M1105.5,669V673M1111.5,670V699M1118.5,681V688M1119.5,679V682M1120.5,678V686M1122.5,674V682M1124.5,673V683M1125.5,669V677M1126.5,666V673M1127.5,666V673M1128.5,667V671M1129.5,667V670M1132.5,666V677M1140.5,726V733M1141.5,722V736M1142.5,719V723M1143.5,717V722M1152.5,727V739M1153.5,722V730M1154.5,713V733M1155.5,715V717M1156.5,706V723M1157.5,695V712M1158.5,700V708M1162.5,703V712M1163.5,699V706M1164.5,686V704M1165.5,675V695M1168.5,687V694M1169.5,678V694M1170.5,679V688M1171.5,676V683M1172.5,675V677M1178.5,676V689M1185.5,711V721M1188.5,725V729M1191.5,725V744M1192.5,733V739M1196.5,748V755M1198.5,749V758M1199.5,748V759M1200.5,739V752M1201.5,738V746M1203.5,733V742M1204.5,732V740M1205.5,726V734M1206.5,719V739M1208.5,720V730M1209.5,712V723M1211.5,717V721M1213.5,716V721M1214.5,717V721M1216.5,717V721M1217.5,717V721M1219.5,713V720M1221.5,717V720M1222.5,716V721M1223.5,715V718M1226.5,715V720M1230.5,720V725M1233.5,723V728M1234.5,722V728M1235.5,720V725M1236.5,717V732M1237.5,717V720M1239.5,713V723M1246.5,739V746M1247.5,735V741M1248.5,729V737M1249.5,725V731M1250.5,723V731M1252.5,728V734M1253.5,727V739M1254.5,722V733M1255.5,719V730M1256.5,717V724M1257.5,710V725M1259.5,708V723M1260.5,708V718M1262.5,705V718M1263.5,699V707M1266.5,700V704M1268.5,700V703M1271.5,698V703M1273.5,698V703M1275.5,701V704M1276.5,700V703M1277.5,700V706M1278.5,699V705M1282.5,698V702M1290.5,705V708M1291.5,704V709M1292.5,702V707M1294.5,701V705M1295.5,696V711M1297.5,697V705M1298.5,694V699M1299.5,692V701M1300.5,691V701M1301.5,688V700M1302.5,680V694M1303.5,680V690M1304.5,675V692M1305.5,672V696M1308.5,674V687M1309.5,671V685M1311.5,673V677M1312.5,668V680M1313.5,667V675M1315.5,669V675M1317.5,670V679M1318.5,668V673M1320.5,669V674M1321.5,669V676M1322.5,667V671M1323.5,665V670M1324.5,663V667M1325.5,656V668M1326.5,659V665M1328.5,657V667M1329.5,658V666M1331.5,656V669M1333.5,658V663M1337.5,660V665M1338.5,660V663M1339.5,658V663M1341.5,658V661M1342.5,657V659M1343.5,655V660M1344.5,654V660M1347.5,647V659M1349.5,648V653M1350.5,645V655M1351.5,647V654M1352.5,644V652M1353.5,642V646M1355.5,643V650M1356.5,638V645M1357.5,638V652M1358.5,636V641M1360.5,635V650M1363.5,636V639M1364.5,635V639M1366.5,637V640M1370.5,638V642M1374.5,639V645M1378.5,643V658M1380.5,645V649M1384.5,646V654M1388.5,662V666M1389.5,662V665M1390.5,660V668M1391.5,658V662M1392.5,656V659M1393.5,653V658M1395.5,652V660M1396.5,646V656M1397.5,647V655M1398.5,642V652M1399.5,640V647M1404.5,644V649M1405.5,641V644M1406.5,636V642M1409.5,638V646M1410.5,635V641M1412.5,632V645M1413.5,628V641M1415.5,624V637M1416.5,619V627M1417.5,623V627M1422.5,623V632M1424.5,625V628M1425.5,621V629M1430.5,625V628M1433.5,627V631M1436.5,625V632M1437.5,620V636M1438.5,621V629M1439.5,619V625M1442.5,621V625M1445.5,620V626M1447.5,606V623M1455.5,644V663M1456.5,644V650M1457.5,645V650M1467.5,654V658M1468.5,652V656M1471.5,651V658M1472.5,647V662M1474.5,646V654M1475.5,641V649M1476.5,638V651M1479.5,637V644M1480.5,634V639M1481.5,632V637M1485.5,635V639M1486.5,636V639M1487.5,634V638M1488.5,634V638M1492.5,639V644M1497.5,646V650M1499.5,644V649M1502.5,642V649M1503.5,643V650M1504.5,639V646M1506.5,644V647M1507.5,640V646M1508.5,639V644M1510.5,639V644M1511.5,640V644M1512.5,638V642M1514.5,640V645M1518.5,640V647M1519.5,643V645M1520.5,641V659M1524.5,644V650M1525.5,641V651M1526.5,644V650M1533.5,654V662M1535.5,655V663M1536.5,647V659M1544.5,654V679M1546.5,662V677M1550.5,668V691M1553.5,673V681M1557.5,684V690M1561.5,691V703M1562.5,688V701M1563.5,693V699M1565.5,694V700M1566.5,690V697M1567.5,685V692M1568.5,682V693M1570.5,681V690M1571.5,675V684M1572.5,677V683M1574.5,675V685M1577.5,679V683M1579.5,672V685M1580.5,677V684M1581.5,676V680M1582.5,672V677M1583.5,671V680M1584.5,669V676M1586.5,672V675M1588.5,670V676M1592.5,669V681M1594.5,672V681M1596.5,671V678M1598.5,671V676M1600.5,667V677M1601.5,655V674M1602.5,658V669M1603.5,655V661M1604.5,653V666M1606.5,650V657M1608.5,652V654M1611.5,650V656M1616.5,652V658M1620.5,659V664M1621.5,658V662M1623.5,652V665M1625.5,655V663M1626.5,652V660M1627.5,655V660M1629.5,654V659M1630.5,653V657M1631.5,653V657M1632.5,646V653M1633.5,649V651M1634.5,646V652M1637.5,646V648M1642.5,662V672M1644.5,662V676M1647.5,664V666M1650.5,663V671M1652.5,663V670M1653.5,653V672M1654.5,662V665M1655.5,657V665M1656.5,653V664M1657.5,652V662M1658.5,651V658M1661.5,648V662M1662.5,648V653M1663.5,645V656M1664.5,645V653M1665.5,641V649M1667.5,640V653M1669.5,645V659M1670.5,648V653M1671.5,643V651M1672.5,632V646M1673.5,631V643M1674.5,633V641M1675.5,631V642M1676.5,631V641M1677.5,627V636M1678.5,624V638M1680.5,627V632M1683.5,624V629M1684.5,621V627M1687.5,622V625M1688.5,622V627M1690.5,619V626M1692.5,619V625M1694.5,618V624M1699.5,616V621M1701.5,618V622M1704.5,620V623M1705.5,619V622M1706.5,613V625M1707.5,613V617M1709.5,612V620M1722.5,734V753M1723.5,717V744M1724.5,705V718M1725.5,700V714M1726.5,705V709M1727.5,698V715M1728.5,695V704M1729.5,689V705M1732.5,694V706M1733.5,688V697M1736.5,696V700M1739.5,690V697M1740.5,689V698M1741.5,670V690M1742.5,671V686M1743.5,670V676M1746.5,666V684M1748.5,667V676M1749.5,659V675M1750.5,647V660M1751.5,641V651M1753.5,642V654M1754.5,644V651M1757.5,644V652M1758.5,642V662M1759.5,641V653M1760.5,634V644M1763.5,640V653M1764.5,644V651M1765.5,640V649M1766.5,638V644M1767.5,637V639M1772.5,636V651M1773.5,632V646M1774.5,628V636M1776.5,630V637M1777.5,631V635M1778.5,627V633M1779.5,627V635M1781.5,628V631M1720.5,704V772M1722.5,690V745" stroke="#4fd04f" stroke-width="1" fill="none"/>
<path d="M1.5,836.6 L4.5,839.9 L7.5,839.2 L10.5,842.8 L13.5,848.5 L16.5,852.1 L19.5,852.6 L22.5,849.6 L25.5,848.8 L28.5,849.2 L31.5,850.8 L34.5,851.2 L37.5,850.1 L40.5,847.4 L43.5,843.8 L46.5,842 L49.5,835.7 L52.5,833.5 L55.5,832.4 L58.5,832 L61.5,833 L64.5,830.4 L67.5,828.8 L70.5,826.6 L73.5,823.2 L76.5,820.9 L79.5,819.9 L82.5,819 L85.5,816.7 L88.5,814.4 L91.5,812.5 L94.5,811.2 L97.5,812.9 L100.5,814.1 L103.5,816.8 L106.5,817.5 L109.5,812.4 L112.5,806.2 L115.5,802.9 L118.5,799.2 L121.5,789.9 L124.5,786.5 L127.5,782.9 L130.5,778.3 L133.5,776.5 L136.5,775.7 L139.5,776.2 L142.5,781.2 L145.5,787.1 L148.5,791.1 L151.5,793.7 L154.5,795.5 L157.5,796 L160.5,796 L163.5,792.4 L166.5,787.1 L169.5,784.8 L172.5,783 L175.5,780.2 L178.5,778.1 L181.5,778.2 L184.5,780 L187.5,780.2 L190.5,777.9 L193.5,776.2 L196.5,778.6 L199.5,784.2 L202.5,797.1 L205.5,802.7 L208.5,807.9 L211.5,811.9 L214.5,814.8 L217.5,819.1 L220.5,822.2 L223.5,821.4 L226.5,815.6 L229.5,813.1 L232.5,810 L235.5,805.5 L238.5,803.2 L241.5,802.4 L244.5,804.3 L247.5,804.4 L250.5,806.6 L253.5,811.9 L256.5,818.2 L259.5,822.4 L262.5,822.2 L265.5,822 L268.5,823.6 L271.5,826.7 L274.5,829.6 L277.5,832.3 L280.5,832.4 L283.5,839.4 L286.5,851.9 L289.5,866.9 L292.5,874.9 L295.5,870.8 L298.5,874.1 L301.5,879.1 L304.5,878.9 L307.5,877.6 L310.5,876.7 L313.5,879.5 L316.5,881.5 L319.5,883.8 L322.5,885.1 L325.5,883.6 L328.5,888.4 L331.5,896.3 L334.5,898.2 L337.5,892.9 L340.5,889.8 L343.5,889.7 L346.5,885.1 L349.5,879.3 L352.5,873.8 L355.5,870.9 L358.5,866.2 L361.5,865.9 L364.5,866.1 L367.5,865.8 L370.5,868.4 L373.5,867.3 L376.5,863.9 L379.5,864.1 L382.5,858.5 L385.5,850.9 L388.5,846.6 L391.5,844.2 L394.5,842.4 L397.5,843.3 L400.5,844.4 L403.5,844.3 L406.5,844.3 L409.5,848.3 L412.5,851.5 L415.5,849.5 L418.5,847.6 L421.5,845.1 L424.5,841.6 L427.5,841.3 L430.5,840.2 L433.5,839.4 L436.5,844.2 L439.5,850.6 L442.5,852.7 L445.5,850.8 L448.5,848.7 L451.5,842.8 L454.5,838.9 L457.5,835.9 L460.5,832.2 L463.5,833.1 L466.5,834.9 L469.5,834.2 L472.5,836.4 L475.5,838.9 L478.5,839.7 L481.5,838.7 L484.5,836.9 L487.5,834.9 L490.5,832.9 L493.5,831.3 L496.5,827.8 L499.5,826.1 L502.5,830.7 L505.5,834.1 L508.5,837.4 L511.5,837.4 L514.5,833.6 L517.5,829.6 L520.5,827.8 L523.5,827 L526.5,824.3 L529.5,822.6 L532.5,820.7 L535.5,819.9 L538.5,817 L541.5,813.2 L544.5,809.1 L547.5,807.1 L550.5,807.8 L553.5,807.2 L556.5,806.7 L559.5,804 L562.5,801.5 L565.5,799.5 L568.5,802 L571.5,805.4 L574.5,808.1 L577.5,810.5 L580.5,808.7 L583.5,806.8 L586.5,804.8 L589.5,802.2 L592.5,798.5 L595.5,798.4 L598.5,799.6 L601.5,800.1 L604.5,799.9 L607.5,799.4 L610.5,797.9 L613.5,796.8 L616.5,796.2 L619.5,798.2 L622.5,805 L625.5,811 L628.5,824.4 L631.5,838.3 L634.5,847.9 L637.5,852.8 L640.5,853.2 L643.5,852 L646.5,849.4 L649.5,844.8 L652.5,845 L655.5,843 L658.5,841.2 L661.5,841.5 L664.5,844.9 L667.5,844.7 L670.5,842.6 L673.5,841 L676.5,837.9 L679.5,830.7 L682.5,825.2 L685.5,820.4 L688.5,820.8 L691.5,820.8 L694.5,817.7 L697.5,815.3 L700.5,810.4 L703.5,806.9 L706.5,808.3 L709.5,811.7 L712.5,813.3 L715.5,814.4 L718.5,818.2 L721.5,824.4 L724.5,826.6 L727.5,828.4 L730.5,829.9 L733.5,829.8 L736.5,831.6 L739.5,825.6 L742.5,819.2 L745.5,813.2 L748.5,807.9 L751.5,806.9 L754.5,806.6 L757.5,805.3 L760.5,804.8 L763.5,802.6 L766.5,799.5 L769.5,796.7 L772.5,797.1 L775.5,795.9 L778.5,795.4 L781.5,797.4 L784.5,799.2 L787.5,800.2 L790.5,799 L793.5,795.3 L796.5,792.6 L799.5,790.3 L802.5,791 L805.5,788.6 L808.5,785.4 L811.5,782.8 L814.5,780.9 L817.5,780.4 L820.5,780.6 L823.5,782.2 L826.5,781.5 L829.5,780.1 L832.5,779.8 L835.5,780.7 L838.5,782.6 L841.5,784.7 L844.5,780.4 L847.5,778.1 L850.5,773.9 L853.5,773 L856.5,773.4 L859.5,772.8 L862.5,775.1 L865.5,776.5 L868.5,771 L871.5,766.7 L874.5,763.6 L877.5,763.7 L880.5,765 L883.5,766.7 L886.5,766.8 L889.5,767.9 L892.5,764.8 L895.5,760.5 L898.5,756.9 L901.5,753.7 L904.5,752 L907.5,750 L910.5,745.9 L913.5,745.3 L916.5,743.1 L919.5,742.8 L922.5,740.4 L925.5,738.3 L928.5,737.4 L931.5,736.3 L934.5,733.6 L937.5,733.6 L940.5,735.5 L943.5,734.9 L946.5,735.1 L949.5,736.3 L952.5,737.3 L955.5,739.1 L958.5,739.2 L961.5,739.4 L964.5,739.2 L967.5,737.6 L970.5,735.2 L973.5,731.9 L976.5,731 L979.5,731.2 L982.5,727.5 L985.5,722.6 L988.5,719.6 L991.5,719.1 L994.5,719.2 L997.5,722.2 L1000.5,726.7 L1003.5,736.2 L1006.5,740.7 L1009.5,741.5 L1012.5,737.1 L1015.5,734.4 L1018.5,732.4 L1021.5,731 L1024.5,729.7 L1027.5,736.8 L1030.5,745.7 L1033.5,750.2 L1036.5,748.9 L1039.5,747.1 L1042.5,743.3 L1045.5,737 L1048.5,735.6 L1051.5,732.5 L1054.5,732.2 L1057.5,731.7 L1060.5,730.9 L1063.5,724 L1066.5,712.8 L1069.5,706.3 L1072.5,699.1 L1075.5,692.7 L1078.5,690.9 L1081.5,680.8 L1084.5,673.8 L1087.5,668.7 L1090.5,663.3 L1093.5,662.4 L1096.5,666 L1099.5,674.1 L1102.5,678.1 L1105.5,676 L1108.5,674.2 L1111.5,676.5 L1114.5,677.6 L1117.5,682.3 L1120.5,682.7 L1123.5,681.2 L1126.5,677.5 L1129.5,672.8 L1132.5,672 L1135.5,671.6 L1138.5,684.4 L1141.5,710.2 L1144.5,717.1 L1147.5,720.3 L1150.5,726.2 L1153.5,729.8 L1156.5,723.2 L1159.5,712.4 L1162.5,710 L1165.5,702 L1168.5,695.6 L1171.5,689.3 L1174.5,681.8 L1177.5,683 L1180.5,687 L1183.5,695.4 L1186.5,706.1 L1189.5,719.4 L1192.5,729.8 L1195.5,737.1 L1198.5,747.7 L1201.5,748.9 L1204.5,743.6 L1207.5,734.3 L1210.5,726.1 L1213.5,722.2 L1216.5,720.5 L1219.5,719.9 L1222.5,719.7 L1225.5,718.2 L1228.5,719.2 L1231.5,721.5 L1234.5,724 L1237.5,722.7 L1240.5,720 L1243.5,723.6 L1246.5,735 L1249.5,735.5 L1252.5,732.6 L1255.5,730 L1258.5,722.8 L1261.5,717 L1264.5,710.3 L1267.5,705.8 L1270.5,704.2 L1273.5,703.3 L1276.5,703.2 L1279.5,702.3 L1282.5,702.2 L1285.5,702 L1288.5,703.2 L1291.5,705.6 L1294.5,705.5 L1297.5,703.5 L1300.5,699.5 L1303.5,693.2 L1306.5,684.8 L1309.5,682.7 L1312.5,678.4 L1315.5,675.5 L1318.5,674.2 L1321.5,673.4 L1324.5,671 L1327.5,666.3 L1330.5,664.3 L1333.5,662.6 L1336.5,662 L1339.5,663 L1342.5,661.3 L1345.5,659.2 L1348.5,657 L1351.5,654.4 L1354.5,649.3 L1357.5,646.8 L1360.5,642.8 L1363.5,640.4 L1366.5,639.7 L1369.5,639.8 L1372.5,640 L1375.5,642.3 L1378.5,645.6 L1381.5,646.3 L1384.5,650.3 L1387.5,654.3 L1390.5,660.6 L1393.5,660.3 L1396.5,657.6 L1399.5,652.1 L1402.5,646.8 L1405.5,646.2 L1408.5,642.6 L1411.5,641.7 L1414.5,637.7 L1417.5,631.8 L1420.5,628.3 L1423.5,627.9 L1426.5,627 L1429.5,627.1 L1432.5,627.5 L1435.5,628.8 L1438.5,628.3 L1441.5,624.9 L1444.5,625 L1447.5,624.3 L1450.5,623.9 L1453.5,635.3 L1456.5,646.4 L1459.5,646.9 L1462.5,649.5 L1465.5,653.4 L1468.5,655.6 L1471.5,656.4 L1474.5,653.2 L1477.5,647.4 L1480.5,644.1 L1483.5,639.5 L1486.5,639.2 L1489.5,638 L1492.5,640.2 L1495.5,641.4 L1498.5,644.9 L1501.5,646.5 L1504.5,646.4 L1507.5,646.2 L1510.5,644.3 L1513.5,642.9 L1516.5,643.3 L1519.5,644.7 L1522.5,645.5 L1525.5,647.6 L1528.5,647.9 L1531.5,653.2 L1534.5,657.2 L1537.5,657.5 L1540.5,659.1 L1543.5,664.1 L1546.5,665.9 L1549.5,668.2 L1552.5,672.7 L1555.5,677.3 L1558.5,684.5 L1561.5,692.4 L1564.5,695.5 L1567.5,695 L1570.5,690.4 L1573.5,685.7 L1576.5,683.1 L1579.5,683.1 L1582.5,680.2 L1585.5,676.5 L1588.5,675.4 L1591.5,675.4 L1594.5,676.2 L1597.5,675.4 L1600.5,675.3 L1603.5,668.4 L1606.5,661.5 L1609.5,657.2 L1612.5,655.3 L1615.5,656 L1618.5,656.8 L1621.5,659.7 L1624.5,659.6 L1627.5,659.5 L1630.5,658 L1633.5,655.4 L1636.5,651 L1639.5,650.1 L1642.5,656.3 L1645.5,662.5 L1648.5,664.8 L1651.5,666.7 L1654.5,666.2 L1657.5,662.8 L1660.5,656.7 L1663.5,653.9 L1666.5,649.8 L1669.5,651.3 L1672.5,650.2 L1675.5,642.1 L1678.5,635.9 L1681.5,631.5 L1684.5,628.9 L1687.5,626 L1690.5,625.2 L1693.5,623.6 L1696.5,621.9 L1699.5,621.1 L1702.5,621.6 L1705.5,622.3 L1708.5,619.5 L1711.5,616.9 L1714.5,625.6 L1717.5,647.7 L1720.5,680.9 L1723.5,719.3 L1726.5,714.9 L1729.5,706.3 L1732.5,701.3 L1735.5,698.5 L1738.5,698.5 L1741.5,695.7 L1744.5,683.1 L1747.5,678.2 L1750.5,671.4 L1753.5,655.8 L1756.5,651.5 L1759.5,650.5 L1762.5,646.3 L1765.5,647.4 L1768.5,642.9 L1771.5,641.9 L1774.5,639.6 L1777.5,636.6 L1780.5,633.5" stroke="#e53be0" stroke-width="1" stroke-dasharray="3,4" fill="none"/>
<path d="M1.5,835.4 L4.5,838.7 L7.5,838 L10.5,841.6 L13.5,847.3 L16.5,850.9 L19.5,851.4 L22.5,848.4 L25.5,847.6 L28.5,848 L31.5,849.6 L34.5,850 L37.5,848.9 L40.5,846.2 L43.5,842.6 L46.5,840.8 L49.5,834.5 L52.5,832.3 L55.5,831.2 L58.5,830.8 L61.5,831.8 L64.5,829.2 L67.5,827.6 L70.5,825.4 L73.5,822 L76.5,819.7 L79.5,818.7 L82.5,817.8 L85.5,815.5 L88.5,813.2 L91.5,811.3 L94.5,810 L97.5,811.7 L100.5,812.9 L103.5,815.6 L106.5,816.3 L109.5,811.2 L112.5,805 L115.5,801.7 L118.5,798 L121.5,788.7 L124.5,785.3 L127.5,781.7 L130.5,777.1 L133.5,775.3 L136.5,774.5 L139.5,775 L142.5,780 L145.5,785.9 L148.5,789.9 L151.5,792.5 L154.5,794.3 L157.5,794.8 L160.5,794.8 L163.5,791.2 L166.5,785.9 L169.5,783.6 L172.5,781.8 L175.5,779 L178.5,776.9 L181.5,777 L184.5,778.8 L187.5,779 L190.5,776.7 L193.5,775 L196.5,777.4 L199.5,783 L202.5,795.9 L205.5,801.5 L208.5,806.7 L211.5,810.7 L214.5,813.6 L217.5,817.9 L220.5,821 L223.5,820.2 L226.5,814.4 L229.5,811.9 L232.5,808.8 L235.5,804.3 L238.5,802 L241.5,801.2 L244.5,803.1 L247.5,803.2 L250.5,805.4 L253.5,810.7 L256.5,817 L259.5,821.2 L262.5,821 L265.5,820.8 L268.5,822.4 L271.5,825.5 L274.5,828.4 L277.5,831.1 L280.5,831.2 L283.5,838.2 L286.5,850.7 L289.5,865.7 L292.5,873.7 L295.5,869.6 L298.5,872.9 L301.5,877.9 L304.5,877.7 L307.5,876.4 L310.5,875.5 L313.5,878.3 L316.5,880.3 L319.5,882.6 L322.5,883.9 L325.5,882.4 L328.5,887.2 L331.5,895.1 L334.5,897 L337.5,891.7 L340.5,888.6 L343.5,888.5 L346.5,883.9 L349.5,878.1 L352.5,872.6 L355.5,869.7 L358.5,865 L361.5,864.7 L364.5,864.9 L367.5,864.6 L370.5,867.2 L373.5,866.1 L376.5,862.7 L379.5,862.9 L382.5,857.3 L385.5,849.7 L388.5,845.4 L391.5,843 L394.5,841.2 L397.5,842.1 L400.5,843.2 L403.5,843.1 L406.5,843.1 L409.5,847.1 L412.5,850.3 L415.5,848.3 L418.5,846.4 L421.5,843.9 L424.5,840.4 L427.5,840.1 L430.5,839 L433.5,838.2 L436.5,843 L439.5,849.4 L442.5,851.5 L445.5,849.6 L448.5,847.5 L451.5,841.6 L454.5,837.7 L457.5,834.7 L460.5,831 L463.5,831.9 L466.5,833.7 L469.5,833 L472.5,835.2 L475.5,837.7 L478.5,838.5 L481.5,837.5 L484.5,835.7 L487.5,833.7 L490.5,831.7 L493.5,830.1 L496.5,826.6 L499.5,824.9 L502.5,829.5 L505.5,832.9 L508.5,836.2 L511.5,836.2 L514.5,832.4 L517.5,828.4 L520.5,826.6 L523.5,825.8 L526.5,823.1 L529.5,821.4 L532.5,819.5 L535.5,818.7 L538.5,815.8 L541.5,812 L544.5,807.9 L547.5,805.9 L550.5,806.6 L553.5,806 L556.5,805.5 L559.5,802.8 L562.5,800.3 L565.5,798.3 L568.5,800.8 L571.5,804.2 L574.5,806.9 L577.5,809.3 L580.5,807.5 L583.5,805.6 L586.5,803.6 L589.5,801 L592.5,797.3 L595.5,797.2 L598.5,798.4 L601.5,798.9 L604.5,798.7 L607.5,798.2 L610.5,796.7 L613.5,795.6 L616.5,795 L619.5,797 L622.5,803.8 L625.5,809.8 L628.5,823.2 L631.5,837.1 L634.5,846.7 L637.5,851.6 L640.5,852 L643.5,850.8 L646.5,848.2 L649.5,843.6 L652.5,843.8 L655.5,841.8 L658.5,840 L661.5,840.3 L664.5,843.7 L667.5,843.5 L670.5,841.4 L673.5,839.8 L676.5,836.7 L679.5,829.5 L682.5,824 L685.5,819.2 L688.5,819.6 L691.5,819.6 L694.5,816.5 L697.5,814.1 L700.5,809.2 L703.5,805.7 L706.5,807.1 L709.5,810.5 L712.5,812.1 L715.5,813.2 L718.5,817 L721.5,823.2 L724.5,825.4 L727.5,827.2 L730.5,828.7 L733.5,828.6 L736.5,830.4 L739.5,824.4 L742.5,818 L745.5,812 L748.5,806.7 L751.5,805.7 L754.5,805.4 L757.5,804.1 L760.5,803.6 L763.5,801.4 L766.5,798.3 L769.5,795.5 L772.5,795.9 L775.5,794.7 L778.5,794.2 L781.5,796.2 L784.5,798 L787.5,799 L790.5,797.8 L793.5,794.1 L796.5,791.4 L799.5,789.1 L802.5,789.8 L805.5,787.4 L808.5,784.2 L811.5,781.6 L814.5,779.7 L817.5,779.2 L820.5,779.4 L823.5,781 L826.5,780.3 L829.5,778.9 L832.5,778.6 L835.5,779.5 L838.5,781.4 L841.5,783.5 L844.5,779.2 L847.5,776.9 L850.5,772.7 L853.5,771.8 L856.5,772.2 L859.5,771.6 L862.5,773.9 L865.5,775.3 L868.5,769.8 L871.5,765.5 L874.5,762.4 L877.5,762.5 L880.5,763.8 L883.5,765.5 L886.5,765.6 L889.5,766.7 L892.5,763.6 L895.5,759.3 L898.5,755.7 L901.5,752.5 L904.5,750.8 L907.5,748.8 L910.5,744.7 L913.5,744.1 L916.5,741.9 L919.5,741.6 L922.5,739.2 L925.5,737.1 L928.5,736.2 L931.5,735.1 L934.5,732.4 L937.5,732.4 L940.5,734.3 L943.5,733.7 L946.5,733.9 L949.5,735.1 L952.5,736.1 L955.5,737.9 L958.5,738 L961.5,738.2 L964.5,738 L967.5,736.4 L970.5,734 L973.5,730.7 L976.5,729.8 L979.5,730 L982.5,726.3 L985.5,721.4 L988.5,718.4 L991.5,717.9 L994.5,718 L997.5,721 L1000.5,725.5 L1003.5,735 L1006.5,739.5 L1009.5,740.3 L1012.5,735.9 L1015.5,733.2 L1018.5,731.2 L1021.5,729.8 L1024.5,728.5 L1027.5,735.6 L1030.5,744.5 L1033.5,749 L1036.5,747.7 L1039.5,745.9 L1042.5,742.1 L1045.5,735.8 L1048.5,734.4 L1051.5,731.3 L1054.5,731 L1057.5,730.5 L1060.5,729.7 L1063.5,722.8 L1066.5,711.6 L1069.5,705.1 L1072.5,697.9 L1075.5,691.5 L1078.5,689.7 L1081.5,679.6 L1084.5,672.6 L1087.5,667.5 L1090.5,662.1 L1093.5,661.2 L1096.5,664.8 L1099.5,672.9 L1102.5,676.9 L1105.5,674.8 L1108.5,673 L1111.5,675.3 L1114.5,676.4 L1117.5,681.1 L1120.5,681.5 L1123.5,680 L1126.5,676.3 L1129.5,671.6 L1132.5,670.8 L1135.5,670.4 L1138.5,683.2 L1141.5,709 L1144.5,715.9 L1147.5,719.1 L1150.5,725 L1153.5,728.6 L1156.5,722 L1159.5,711.2 L1162.5,708.8 L1165.5,700.8 L1168.5,694.4 L1171.5,688.1 L1174.5,680.6 L1177.5,681.8 L1180.5,685.8 L1183.5,694.2 L1186.5,704.9 L1189.5,718.2 L1192.5,728.6 L1195.5,735.9 L1198.5,746.5 L1201.5,747.7 L1204.5,742.4 L1207.5,733.1 L1210.5,724.9 L1213.5,721 L1216.5,719.3 L1219.5,718.7 L1222.5,718.5 L1225.5,717 L1228.5,718 L1231.5,720.3 L1234.5,722.8 L1237.5,721.5 L1240.5,718.8 L1243.5,722.4 L1246.5,733.8 L1249.5,734.3 L1252.5,731.4 L1255.5,728.8 L1258.5,721.6 L1261.5,715.8 L1264.5,709.1 L1267.5,704.6 L1270.5,703 L1273.5,702.1 L1276.5,702 L1279.5,701.1 L1282.5,701 L1285.5,700.8 L1288.5,702 L1291.5,704.4 L1294.5,704.3 L1297.5,702.3 L1300.5,698.3 L1303.5,692 L1306.5,683.6 L1309.5,681.5 L1312.5,677.2 L1315.5,674.3 L1318.5,673 L1321.5,672.2 L1324.5,669.8 L1327.5,665.1 L1330.5,663.1 L1333.5,661.4 L1336.5,660.8 L1339.5,661.8 L1342.5,660.1 L1345.5,658 L1348.5,655.8 L1351.5,653.2 L1354.5,648.1 L1357.5,645.6 L1360.5,641.6 L1363.5,639.2 L1366.5,638.5 L1369.5,638.6 L1372.5,638.8 L1375.5,641.1 L1378.5,644.4 L1381.5,645.1 L1384.5,649.1 L1387.5,653.1 L1390.5,659.4 L1393.5,659.1 L1396.5,656.4 L1399.5,650.9 L1402.5,645.6 L1405.5,645 L1408.5,641.4 L1411.5,640.5 L1414.5,636.5 L1417.5,630.6 L1420.5,627.1 L1423.5,626.7 L1426.5,625.8 L1429.5,625.9 L1432.5,626.3 L1435.5,627.6 L1438.5,627.1 L1441.5,623.7 L1444.5,623.8 L1447.5,623.1 L1450.5,622.7 L1453.5,634.1 L1456.5,645.2 L1459.5,645.7 L1462.5,648.3 L1465.5,652.2 L1468.5,654.4 L1471.5,655.2 L1474.5,652 L1477.5,646.2 L1480.5,642.9 L1483.5,638.3 L1486.5,638 L1489.5,636.8 L1492.5,639 L1495.5,640.2 L1498.5,643.7 L1501.5,645.3 L1504.5,645.2 L1507.5,645 L1510.5,643.1 L1513.5,641.7 L1516.5,642.1 L1519.5,643.5 L1522.5,644.3 L1525.5,646.4 L1528.5,646.7 L1531.5,652 L1534.5,656 L1537.5,656.3 L1540.5,657.9 L1543.5,662.9 L1546.5,664.7 L1549.5,667 L1552.5,671.5 L1555.5,676.1 L1558.5,683.3 L1561.5,691.2 L1564.5,694.3 L1567.5,693.8 L1570.5,689.2 L1573.5,684.5 L1576.5,681.9 L1579.5,681.9 L1582.5,679 L1585.5,675.3 L1588.5,674.2 L1591.5,674.2 L1594.5,675 L1597.5,674.2 L1600.5,674.1 L1603.5,667.2 L1606.5,660.3 L1609.5,656 L1612.5,654.1 L1615.5,654.8 L1618.5,655.6 L1621.5,658.5 L1624.5,658.4 L1627.5,658.3 L1630.5,656.8 L1633.5,654.2 L1636.5,649.8 L1639.5,648.9 L1642.5,655.1 L1645.5,661.3 L1648.5,663.6 L1651.5,665.5 L1654.5,665 L1657.5,661.6 L1660.5,655.5 L1663.5,652.7 L1666.5,648.6 L1669.5,650.1 L1672.5,649 L1675.5,640.9 L1678.5,634.7 L1681.5,630.3 L1684.5,627.7 L1687.5,624.8 L1690.5,624 L1693.5,622.4 L1696.5,620.7 L1699.5,619.9 L1702.5,620.4 L1705.5,621.1 L1708.5,618.3 L1711.5,615.7 L1714.5,624.4 L1717.5,646.5 L1720.5,679.7 L1723.5,718.1 L1726.5,713.7 L1729.5,705.1 L1732.5,700.1 L1735.5,697.3 L1738.5,697.3 L1741.5,694.5 L1744.5,681.9 L1747.5,677 L1750.5,670.2 L1753.5,654.6 L1756.5,650.3 L1759.5,649.3 L1762.5,645.1 L1765.5,646.2 L1768.5,641.7 L1771.5,640.7 L1774.5,638.4 L1777.5,635.4 L1780.5,632.3" stroke="#1c8c38" stroke-width="2" stroke-dasharray="4.5,3.5" fill="none"/>
<path d="M31,845.8C34,844.6 42,841.9 48.5,839C55,836.1 63.4,831.9 69.9,828.3C76.3,824.7 81.8,819.9 87.3,817.6C92.8,815.4 98,816.7 102.9,814.7C107.7,812.8 111.6,809.9 116.4,806C121.3,802.1 127.8,795.1 132,791.4C136.2,787.7 138.4,784.5 141.7,783.7C144.9,782.9 148.1,786.1 151.4,786.6C154.6,787.1 157.2,787.4 161.1,786.6C165,785.8 170.5,782.5 174.7,781.7C178.9,780.9 182.7,782 186.3,781.7C189.9,781.4 192.8,778.3 196,779.8C199.2,781.2 202.8,787.1 205.7,790.5C208.6,793.9 210.6,797.4 213.5,800.2C216.4,802.9 220.3,805.6 223.2,807C226.1,808.3 228,808.5 230.9,808.3C233.8,808.1 237.1,805.2 240.6,806C244.2,806.7 248.1,810.8 252.3,812.8C256.5,814.7 261.7,816.2 265.9,817.6C270.1,819.1 275.2,820.5 277.5,821.5C279.9,822.5 278.3,820.9 280,823.4C281.7,826 285.2,832.2 287.8,837C290.3,841.9 292.6,848.4 295.5,852.6C298.4,856.8 301.7,859 305.2,862.3C308.8,865.5 313.3,869.1 316.9,872C320.4,874.9 323.7,877.6 326.6,879.7C329.5,881.8 331.7,883.6 334.3,884.6C336.9,885.5 338.9,886.7 342.1,885.5C345.3,884.4 349.9,880 353.7,877.8C357.6,875.5 361.5,873.6 365.4,872C369.3,870.3 373.1,870 377,868.1C380.9,866.1 384.8,862.9 388.7,860.3C392.6,857.7 396.4,854.5 400.3,852.6C404.2,850.6 408.1,849.8 412,848.7C415.8,847.5 420,847.1 423.6,845.8C427.2,844.5 430.4,841.2 433.3,840.9C436.2,840.6 438.5,843.5 441.1,843.8C443.7,844.1 445.9,844 448.8,842.9C451.7,841.7 455.3,838.6 458.5,837C461.8,835.4 465,833.5 468.2,833.1C471.5,832.8 474.4,835.1 477.9,835.1C481.5,835.1 485.7,833.8 489.6,833.1C493.5,832.5 497.3,831.5 501.2,831.2C505.1,830.9 509,832.2 512.9,831.2C516.8,830.2 520.6,827.7 524.5,825.4C528.4,823.1 532.3,819.7 536.2,817.6C540,815.5 543.9,814.6 547.8,812.8C551.7,811 555.9,808.7 559.4,807C563,805.2 565.9,802.6 569.2,802.1C572.4,801.6 577,803.6 578.9,804C580.7,804.5 577.9,805.6 580,804.8C582.1,803.9 587.8,799.6 591.6,799C595.5,798.3 599.4,801.1 603.3,800.9C607.2,800.8 611.7,798.3 614.9,798C618.2,797.7 620.4,796.9 622.7,799C625,801.1 626.6,806.4 628.5,810.6C630.5,814.8 632.4,820.6 634.3,824.2C636.3,827.8 637.9,830 640.2,832C642.4,833.9 645,835.5 647.9,835.8C650.8,836.2 654.4,833.6 657.6,833.9C660.9,834.2 664.1,837.8 667.3,837.8C670.6,837.8 673.8,835.5 677,833.9C680.3,832.3 683.5,830.7 686.7,828.1C690,825.5 693.2,821 696.4,818.4C699.7,815.8 702.9,813.2 706.1,812.6C709.4,811.9 712.6,813.5 715.8,814.5C719.1,815.5 722.3,816.9 725.5,818.4C728.8,819.8 732,822.7 735.2,823.2C738.5,823.7 741.7,822.7 745,821.3C748.2,819.8 751.4,816.9 754.7,814.5C757.9,812.1 761.1,808.7 764.4,806.7C767.6,804.8 770.5,803.8 774.1,802.9C777.6,801.9 782.1,802.2 785.7,800.9C789.3,799.6 791.9,796.9 795.4,795.1C799,793.3 803.2,791.5 807.1,790.2C810.9,788.9 814.8,788.5 818.7,787.3C822.6,786.2 826.8,783.9 830.3,783.4C833.9,783 836.8,785.4 840,784.4C843.3,783.4 846.5,779.2 849.7,777.6C853,776 855.9,775.7 859.4,774.7C863,773.7 867.7,772.5 871.1,771.8C874.5,771.1 876.9,771 880,770.4C883.1,769.8 886.5,769.8 889.7,768.5C892.9,767.2 895.8,765.1 899.4,762.6C903,760.2 907.2,756.7 911,753.9C914.9,751.2 918.5,748.9 922.7,746.1C926.9,743.4 932.1,739.2 936.3,737.4C940.5,735.6 944,735.6 947.9,735.5C951.8,735.3 955.7,736.8 959.6,736.4C963.4,736.1 967.7,735 971.2,733.5C974.8,732.1 977.7,729.2 980.9,727.7C984.1,726.2 987.4,725.1 990.6,724.8C993.8,724.5 997.1,724.6 1000.3,725.8C1003.6,726.9 1006.8,730.8 1010,731.6C1013.3,732.4 1016.5,729.8 1019.7,730.6C1023,731.4 1026.2,735.1 1029.4,736.4C1032.7,737.7 1035.9,739 1039.1,738.4C1042.4,737.7 1045.6,734.2 1048.8,732.6C1052.1,730.9 1055.6,730.6 1058.5,728.7C1061.4,726.7 1063.7,724.1 1066.3,720.9C1068.9,717.7 1071.5,713.5 1074.1,709.3C1076.6,705.1 1079.2,700.2 1081.8,695.7C1084.4,691.2 1087,685.8 1089.6,682.1C1092.2,678.4 1094.4,675.1 1097.3,673.4C1100.3,671.6 1104.1,671.1 1107.1,671.4C1110,671.7 1111.9,674.3 1114.8,675.3C1117.7,676.3 1121.3,677.1 1124.5,677.2C1127.8,677.4 1131.3,674.8 1134.2,676.3C1137.1,677.7 1139.4,682.4 1142,686C1144.6,689.5 1147.2,694.1 1149.7,697.6C1152.3,701.2 1154.9,706 1157.5,707.3C1160.1,708.6 1162.7,707 1165.3,705.4C1167.9,703.8 1170.8,699.2 1173,697.6C1175.3,696.1 1177.7,696.8 1178.9,696.1C1180,695.3 1178.5,691.7 1180,693.1C1181.5,694.6 1185.2,700.9 1187.8,704.8C1190.3,708.7 1192.6,713.4 1195.5,716.4C1198.4,719.5 1201.7,722.3 1205.2,723.2C1208.8,724.2 1213.3,723 1216.9,722.3C1220.4,721.5 1223,719.7 1226.6,718.8C1230.1,717.8 1234.3,715.9 1238.2,716.4C1242.1,717 1246,722.6 1249.9,722.3C1253.7,721.9 1257.6,717.1 1261.5,714.5C1265.4,711.9 1269.3,708.7 1273.1,706.7C1277,704.8 1280.9,703.7 1284.8,702.9C1288.7,702 1292.9,703.2 1296.4,701.9C1300,700.6 1302.9,698.2 1306.1,695.1C1309.4,692 1312.3,686.5 1315.8,683.4C1319.4,680.4 1323.9,679.2 1327.5,676.7C1331,674.1 1334,670.3 1337.2,667.9C1340.4,665.5 1344,664 1346.9,662.1C1349.8,660.2 1351.7,658.7 1354.7,656.3C1357.6,653.9 1361.1,649.8 1364.4,647.5C1367.6,645.3 1370.8,643.3 1374.1,642.7C1377.3,642 1380.5,642.4 1383.8,643.7C1387,645 1390.2,649.8 1393.5,650.5C1396.7,651.1 1399.9,649.2 1403.2,647.5C1406.4,645.9 1409.6,643.2 1412.9,640.8C1416.1,638.3 1419.3,634.8 1422.6,633C1425.8,631.2 1429.4,630.9 1432.3,630.1C1435.2,629.3 1437.5,628.9 1440,628.1C1442.6,627.3 1445.2,624.7 1447.8,625.2C1450.4,625.7 1453,628.8 1455.6,631C1458.2,633.3 1460.7,636.5 1463.3,638.8C1465.9,641.1 1468.5,643.8 1471.1,644.6C1473.7,645.5 1477.4,643.8 1478.9,644.1C1480.3,644.3 1478.5,647.2 1480,646.3C1481.5,645.4 1484.9,640.1 1487.8,638.5C1490.7,636.9 1494.2,636.4 1497.5,636.6C1500.7,636.7 1503.9,638.7 1507.2,639.5C1510.4,640.3 1513.6,640.6 1516.9,641.4C1520.1,642.2 1523.3,642.9 1526.6,644.3C1529.8,645.8 1533,647.6 1536.3,650.2C1539.5,652.7 1542.7,656.6 1546,659.9C1549.2,663.1 1552.8,666.3 1555.7,669.6C1558.6,672.8 1560.9,676.8 1563.4,679.3C1566,681.7 1568.3,683.3 1571.2,684.1C1574.1,684.9 1577.7,684.9 1580.9,684.1C1584.1,683.3 1587.4,681.2 1590.6,679.3C1593.8,677.3 1597.1,675.1 1600.3,672.5C1603.6,669.9 1606.8,665.8 1610,663.7C1613.3,661.6 1616.5,661 1619.7,659.9C1623,658.7 1626.5,658.2 1629.4,657C1632.3,655.7 1634.6,652.3 1637.2,652.1C1639.8,651.9 1642.4,654.8 1645,656C1647.5,657.1 1650.1,658.9 1652.7,658.9C1655.3,658.9 1657.9,657.3 1660.5,656C1663.1,654.7 1665.7,653.7 1668.2,651.1C1670.8,648.5 1673.4,643.2 1676,640.5C1678.6,637.7 1680.9,636.4 1683.8,634.6C1686.7,632.9 1690.2,631.9 1693.5,629.8C1696.7,627.7 1700.3,623.8 1703.2,622C1706.1,620.2 1708.8,618.6 1710.9,619.1C1713,619.6 1714.3,620.7 1715.8,624.9C1717.2,629.1 1718.5,637.9 1719.7,644.3C1720.8,650.8 1721.3,657.9 1722.6,663.7C1723.9,669.6 1725.5,675.4 1727.4,679.3C1729.4,683.1 1731.8,685.1 1734.2,687C1736.6,689 1739.7,691.2 1742,690.9C1744.2,690.6 1745.5,688.3 1747.8,685.1C1750.1,681.9 1753.3,675.7 1755.6,671.5C1757.8,667.3 1759.4,663.1 1761.4,659.9C1763.3,656.6 1764.9,654.2 1767.2,652.1C1769.5,650 1772.7,648.5 1775,647.2C1777.2,646 1779.8,644.8 1780.8,644.3" stroke="#3a12c8" stroke-width="2.1" fill="none" stroke-linejoin="round"/>
<defs><linearGradient id="ga" x1="0" y1="0" x2="0" y2="1"><stop offset="0" stop-color="#8fbcf8"/><stop offset="1" stop-color="#3f7fe6"/></linearGradient><linearGradient id="gx" x1="0" y1="0" x2="0" y2="1"><stop offset="0" stop-color="#fdbd3c"/><stop offset="1" stop-color="#f49c1c"/></linearGradient></defs>
<g fill="url(#gx)" stroke="#cc7a06" stroke-width="1">
<rect x="156.2" y="766.6" width="11.6" height="5.8" rx="0.8"/>
<rect x="194.6" y="782.7" width="9.7" height="9.7" rx="0.8"/>
<rect x="197.6" y="790.5" width="11.6" height="5.8" rx="0.8"/>
<rect x="279.8" y="836.4" width="9.7" height="9.7" rx="0.8"/>
<rect x="285.8" y="866.1" width="11.6" height="5.8" rx="0.8"/>
<rect x="296.5" y="866.1" width="9.7" height="5.8" rx="0.8"/>
<rect x="309.2" y="858.9" width="10.7" height="10.7" rx="0.8"/>
<rect x="312" y="869.1" width="11.6" height="5.8" rx="0.8"/>
<rect x="320.8" y="871" width="9.7" height="9.7" rx="0.8"/>
<rect x="334.3" y="870.6" width="11.6" height="5.8" rx="0.8"/>
<rect x="342.1" y="856.4" width="11.6" height="5.8" rx="0.8"/>
<rect x="348.9" y="851.6" width="11.6" height="5.8" rx="0.8"/>
<rect x="358.6" y="854.5" width="9.7" height="9.7" rx="0.8"/>
<rect x="368.3" y="857.9" width="9.7" height="6.8" rx="0.8"/>
<rect x="614.4" y="785.4" width="6.8" height="9.7" rx="0.8"/>
<rect x="620.8" y="820.3" width="9.7" height="9.7" rx="0.8"/>
<rect x="637.2" y="833.4" width="11.6" height="6.8" rx="0.8"/>
<rect x="633.4" y="839.7" width="11.6" height="5.8" rx="0.8"/>
<rect x="629.5" y="842.6" width="11.6" height="5.8" rx="0.8"/>
<rect x="655.2" y="832.8" width="10.7" height="10.7" rx="0.8"/>
<rect x="664.4" y="823.7" width="11.6" height="6.8" rx="0.8"/>
<rect x="674.7" y="809.2" width="11.6" height="6.8" rx="0.8"/>
<rect x="716.8" y="812.6" width="9.7" height="9.7" rx="0.8"/>
<rect x="1036.8" y="712.6" width="11.6" height="5.8" rx="0.8"/>
<rect x="1133.7" y="684.5" width="8.7" height="8.7" rx="0.8"/>
<rect x="1134.7" y="695.3" width="10.7" height="5.8" rx="0.8"/>
<rect x="1153.6" y="685.4" width="11.6" height="5.8" rx="0.8"/>
<rect x="1214.5" y="700.9" width="11.6" height="3.9" rx="0.8"/>
<rect x="1456.5" y="633.6" width="11.6" height="5.8" rx="0.8"/>
<rect x="1534.3" y="654.5" width="9.7" height="8.7" rx="0.8"/>
<rect x="1751.7" y="626.4" width="11.6" height="4.9" rx="0.8"/>
<rect x="1745.5" y="635.6" width="11.6" height="5.8" rx="0.8"/>
<rect x="1714.4" y="728.4" width="11.6" height="5.8" rx="0.8"/>
</g>
<g fill="url(#ga)" stroke="#2a66d0" stroke-width="0.9" stroke-linejoin="round">
<path d="M24.5,857.5l5.2,5.6h-2.6v7.2h-5.2v-7.2h-2.6z"/>
<path d="M38,846l5.2,5.6h-2.6v7.2h-5.2v-7.2h-2.6z"/>
<path d="M42.5,848l5.2,5.6h-2.6v7.2h-5.2v-7.2h-2.6z"/>
<path d="M51.5,837.5l5.2,5.6h-2.6v7.2h-5.2v-7.2h-2.6z"/>
<path d="M58,833.5l5.2,5.6h-2.6v7.2h-5.2v-7.2h-2.6z"/>
<path d="M63,829.5l5.2,5.6h-2.6v7.2h-5.2v-7.2h-2.6z"/>
<path d="M66,829.5l5.2,5.6h-2.6v7.2h-5.2v-7.2h-2.6z"/>
<path d="M87.5,819l5.2,5.6h-2.6v7.2h-5.2v-7.2h-2.6z"/>
<path d="M98.5,827l5.2,5.6h-2.6v7.2h-5.2v-7.2h-2.6z"/>
<path d="M108.5,812l5.2,5.6h-2.6v7.2h-5.2v-7.2h-2.6z"/>
<path d="M132.5,784.5l5.2,5.6h-2.6v7.2h-5.2v-7.2h-2.6z"/>
<path d="M146.5,798l5.2,5.6h-2.6v7.2h-5.2v-7.2h-2.6z"/>
<path d="M160,797l5.2,5.6h-2.6v7.2h-5.2v-7.2h-2.6z"/>
<path d="M168,780l5.2,5.6h-2.6v7.2h-5.2v-7.2h-2.6z"/>
<path d="M176.5,786l5.2,5.6h-2.6v7.2h-5.2v-7.2h-2.6z"/>
<path d="M181.5,795l5.2,5.6h-2.6v7.2h-5.2v-7.2h-2.6z"/>
<path d="M199,816l5.2,5.6h-2.6v7.2h-5.2v-7.2h-2.6z"/>
<path d="M202,819l5.2,5.6h-2.6v7.2h-5.2v-7.2h-2.6z"/>
<path d="M208.5,813l5.2,5.6h-2.6v7.2h-5.2v-7.2h-2.6z"/>
<path d="M215.5,826.5l5.2,5.6h-2.6v7.2h-5.2v-7.2h-2.6z"/>
<path d="M239,812l5.2,5.6h-2.6v7.2h-5.2v-7.2h-2.6z"/>
<path d="M262,828.5l5.2,5.6h-2.6v7.2h-5.2v-7.2h-2.6z"/>
<path d="M265,822l5.2,5.6h-2.6v7.2h-5.2v-7.2h-2.6z"/>
<path d="M269,830l5.2,5.6h-2.6v7.2h-5.2v-7.2h-2.6z"/>
<path d="M283,859.5l5.2,5.6h-2.6v7.2h-5.2v-7.2h-2.6z"/>
<path d="M289.5,894.5l5.2,5.6h-2.6v7.2h-5.2v-7.2h-2.6z"/>
<path d="M299.5,892.5l5.2,5.6h-2.6v7.2h-5.2v-7.2h-2.6z"/>
<path d="M314,877l5.2,5.6h-2.6v7.2h-5.2v-7.2h-2.6z"/>
<path d="M318,892.5l5.2,5.6h-2.6v7.2h-5.2v-7.2h-2.6z"/>
<path d="M325.5,888l5.2,5.6h-2.6v7.2h-5.2v-7.2h-2.6z"/>
<path d="M338,896.5l5.2,5.6h-2.6v7.2h-5.2v-7.2h-2.6z"/>
<path d="M347,882l5.2,5.6h-2.6v7.2h-5.2v-7.2h-2.6z"/>
<path d="M353.5,879l5.2,5.6h-2.6v7.2h-5.2v-7.2h-2.6z"/>
<path d="M360.5,869.5l5.2,5.6h-2.6v7.2h-5.2v-7.2h-2.6z"/>
<path d="M363.5,871.5l5.2,5.6h-2.6v7.2h-5.2v-7.2h-2.6z"/>
<path d="M370,881l5.2,5.6h-2.6v7.2h-5.2v-7.2h-2.6z"/>
<path d="M373,883l5.2,5.6h-2.6v7.2h-5.2v-7.2h-2.6z"/>
<path d="M380,859.5l5.2,5.6h-2.6v7.2h-5.2v-7.2h-2.6z"/>
<path d="M384,863.5l5.2,5.6h-2.6v7.2h-5.2v-7.2h-2.6z"/>
<path d="M451.5,842l5.2,5.6h-2.6v7.2h-5.2v-7.2h-2.6z"/>
<path d="M461.5,835.5l5.2,5.6h-2.6v7.2h-5.2v-7.2h-2.6z"/>
<path d="M478,843l5.2,5.6h-2.6v7.2h-5.2v-7.2h-2.6z"/>
<path d="M516,830.5l5.2,5.6h-2.6v7.2h-5.2v-7.2h-2.6z"/>
<path d="M519.5,835.5l5.2,5.6h-2.6v7.2h-5.2v-7.2h-2.6z"/>
<path d="M532.5,819l5.2,5.6h-2.6v7.2h-5.2v-7.2h-2.6z"/>
<path d="M549,812l5.2,5.6h-2.6v7.2h-5.2v-7.2h-2.6z"/>
<path d="M553.5,814l5.2,5.6h-2.6v7.2h-5.2v-7.2h-2.6z"/>
<path d="M567,800.5l5.2,5.6h-2.6v7.2h-5.2v-7.2h-2.6z"/>
<path d="M573,806.5l5.2,5.6h-2.6v7.2h-5.2v-7.2h-2.6z"/>
<path d="M586.5,809l5.2,5.6h-2.6v7.2h-5.2v-7.2h-2.6z"/>
<path d="M595.5,802l5.2,5.6h-2.6v7.2h-5.2v-7.2h-2.6z"/>
<path d="M608.5,809l5.2,5.6h-2.6v7.2h-5.2v-7.2h-2.6z"/>
<path d="M616,805l5.2,5.6h-2.6v7.2h-5.2v-7.2h-2.6z"/>
<path d="M619,807l5.2,5.6h-2.6v7.2h-5.2v-7.2h-2.6z"/>
<path d="M625,843l5.2,5.6h-2.6v7.2h-5.2v-7.2h-2.6z"/>
<path d="M634.5,870l5.2,5.6h-2.6v7.2h-5.2v-7.2h-2.6z"/>
<path d="M639,866l5.2,5.6h-2.6v7.2h-5.2v-7.2h-2.6z"/>
<path d="M642,861.5l5.2,5.6h-2.6v7.2h-5.2v-7.2h-2.6z"/>
<path d="M653.5,845l5.2,5.6h-2.6v7.2h-5.2v-7.2h-2.6z"/>
<path d="M659.5,851.5l5.2,5.6h-2.6v7.2h-5.2v-7.2h-2.6z"/>
<path d="M666.5,846l5.2,5.6h-2.6v7.2h-5.2v-7.2h-2.6z"/>
<path d="M670,848.5l5.2,5.6h-2.6v7.2h-5.2v-7.2h-2.6z"/>
<path d="M678.5,837l5.2,5.6h-2.6v7.2h-5.2v-7.2h-2.6z"/>
<path d="M681,829.5l5.2,5.6h-2.6v7.2h-5.2v-7.2h-2.6z"/>
<path d="M684,828.5l5.2,5.6h-2.6v7.2h-5.2v-7.2h-2.6z"/>
<path d="M692.5,817.5l5.2,5.6h-2.6v7.2h-5.2v-7.2h-2.6z"/>
<path d="M695.5,816l5.2,5.6h-2.6v7.2h-5.2v-7.2h-2.6z"/>
<path d="M710.5,824l5.2,5.6h-2.6v7.2h-5.2v-7.2h-2.6z"/>
<path d="M720,828.5l5.2,5.6h-2.6v7.2h-5.2v-7.2h-2.6z"/>
<path d="M734.5,836l5.2,5.6h-2.6v7.2h-5.2v-7.2h-2.6z"/>
<path d="M739,829.5l5.2,5.6h-2.6v7.2h-5.2v-7.2h-2.6z"/>
<path d="M745,829.5l5.2,5.6h-2.6v7.2h-5.2v-7.2h-2.6z"/>
<path d="M752.5,813l5.2,5.6h-2.6v7.2h-5.2v-7.2h-2.6z"/>
<path d="M757.5,812l5.2,5.6h-2.6v7.2h-5.2v-7.2h-2.6z"/>
<path d="M759.5,812l5.2,5.6h-2.6v7.2h-5.2v-7.2h-2.6z"/>
<path d="M766.5,799.5l5.2,5.6h-2.6v7.2h-5.2v-7.2h-2.6z"/>
<path d="M770,804l5.2,5.6h-2.6v7.2h-5.2v-7.2h-2.6z"/>
<path d="M779.5,805l5.2,5.6h-2.6v7.2h-5.2v-7.2h-2.6z"/>
<path d="M794.5,797.5l5.2,5.6h-2.6v7.2h-5.2v-7.2h-2.6z"/>
<path d="M797.5,794.5l5.2,5.6h-2.6v7.2h-5.2v-7.2h-2.6z"/>
<path d="M807,789.5l5.2,5.6h-2.6v7.2h-5.2v-7.2h-2.6z"/>
<path d="M815,793l5.2,5.6h-2.6v7.2h-5.2v-7.2h-2.6z"/>
<path d="M822.5,792l5.2,5.6h-2.6v7.2h-5.2v-7.2h-2.6z"/>
<path d="M828,784.5l5.2,5.6h-2.6v7.2h-5.2v-7.2h-2.6z"/>
<path d="M832.5,787l5.2,5.6h-2.6v7.2h-5.2v-7.2h-2.6z"/>
<path d="M849.5,769l5.2,5.6h-2.6v7.2h-5.2v-7.2h-2.6z"/>
<path d="M854.5,775l5.2,5.6h-2.6v7.2h-5.2v-7.2h-2.6z"/>
<path d="M861.5,791l5.2,5.6h-2.6v7.2h-5.2v-7.2h-2.6z"/>
<path d="M874.5,774l5.2,5.6h-2.6v7.2h-5.2v-7.2h-2.6z"/>
<path d="M898.5,766l5.2,5.6h-2.6v7.2h-5.2v-7.2h-2.6z"/>
<path d="M911,750.5l5.2,5.6h-2.6v7.2h-5.2v-7.2h-2.6z"/>
<path d="M921,746.5l5.2,5.6h-2.6v7.2h-5.2v-7.2h-2.6z"/>
<path d="M924,752.5l5.2,5.6h-2.6v7.2h-5.2v-7.2h-2.6z"/>
<path d="M930.5,739.5l5.2,5.6h-2.6v7.2h-5.2v-7.2h-2.6z"/>
<path d="M933.5,737.5l5.2,5.6h-2.6v7.2h-5.2v-7.2h-2.6z"/>
<path d="M940.5,745.5l5.2,5.6h-2.6v7.2h-5.2v-7.2h-2.6z"/>
<path d="M947.5,734l5.2,5.6h-2.6v7.2h-5.2v-7.2h-2.6z"/>
<path d="M952,744.5l5.2,5.6h-2.6v7.2h-5.2v-7.2h-2.6z"/>
<path d="M962.5,736.5l5.2,5.6h-2.6v7.2h-5.2v-7.2h-2.6z"/>
<path d="M971,739.5l5.2,5.6h-2.6v7.2h-5.2v-7.2h-2.6z"/>
<path d="M974,734l5.2,5.6h-2.6v7.2h-5.2v-7.2h-2.6z"/>
<path d="M976.5,736l5.2,5.6h-2.6v7.2h-5.2v-7.2h-2.6z"/>
<path d="M985,722l5.2,5.6h-2.6v7.2h-5.2v-7.2h-2.6z"/>
<path d="M986.5,726l5.2,5.6h-2.6v7.2h-5.2v-7.2h-2.6z"/>
<path d="M991.5,728l5.2,5.6h-2.6v7.2h-5.2v-7.2h-2.6z"/>
<path d="M999.5,734l5.2,5.6h-2.6v7.2h-5.2v-7.2h-2.6z"/>
<path d="M1021.5,730l5.2,5.6h-2.6v7.2h-5.2v-7.2h-2.6z"/>
<path d="M1023.5,741.5l5.2,5.6h-2.6v7.2h-5.2v-7.2h-2.6z"/>
<path d="M1038,744.5l5.2,5.6h-2.6v7.2h-5.2v-7.2h-2.6z"/>
<path d="M1041,747.5l5.2,5.6h-2.6v7.2h-5.2v-7.2h-2.6z"/>
<path d="M1047,725l5.2,5.6h-2.6v7.2h-5.2v-7.2h-2.6z"/>
<path d="M1049,721l5.2,5.6h-2.6v7.2h-5.2v-7.2h-2.6z"/>
<path d="M1058.5,736.5l5.2,5.6h-2.6v7.2h-5.2v-7.2h-2.6z"/>
<path d="M1073.5,695l5.2,5.6h-2.6v7.2h-5.2v-7.2h-2.6z"/>
<path d="M1085.5,667l5.2,5.6h-2.6v7.2h-5.2v-7.2h-2.6z"/>
<path d="M1111,691l5.2,5.6h-2.6v7.2h-5.2v-7.2h-2.6z"/>
<path d="M1118.5,694l5.2,5.6h-2.6v7.2h-5.2v-7.2h-2.6z"/>
<path d="M1128.5,691l5.2,5.6h-2.6v7.2h-5.2v-7.2h-2.6z"/>
<path d="M1131.5,685.5l5.2,5.6h-2.6v7.2h-5.2v-7.2h-2.6z"/>
<path d="M1136.5,698l5.2,5.6h-2.6v7.2h-5.2v-7.2h-2.6z"/>
<path d="M1138.5,741.5l5.2,5.6h-2.6v7.2h-5.2v-7.2h-2.6z"/>
<path d="M1145.5,719.5l5.2,5.6h-2.6v7.2h-5.2v-7.2h-2.6z"/>
<path d="M1158.5,720l5.2,5.6h-2.6v7.2h-5.2v-7.2h-2.6z"/>
<path d="M1163.5,700l5.2,5.6h-2.6v7.2h-5.2v-7.2h-2.6z"/>
<path d="M1165.5,696l5.2,5.6h-2.6v7.2h-5.2v-7.2h-2.6z"/>
<path d="M1175.5,698l5.2,5.6h-2.6v7.2h-5.2v-7.2h-2.6z"/>
<path d="M1211,725.5l5.2,5.6h-2.6v7.2h-5.2v-7.2h-2.6z"/>
<path d="M1216,729.5l5.2,5.6h-2.6v7.2h-5.2v-7.2h-2.6z"/>
<path d="M1219,736l5.2,5.6h-2.6v7.2h-5.2v-7.2h-2.6z"/>
<path d="M1238,718.5l5.2,5.6h-2.6v7.2h-5.2v-7.2h-2.6z"/>
<path d="M1265.5,711l5.2,5.6h-2.6v7.2h-5.2v-7.2h-2.6z"/>
<path d="M1282.5,709l5.2,5.6h-2.6v7.2h-5.2v-7.2h-2.6z"/>
<path d="M1300.5,705l5.2,5.6h-2.6v7.2h-5.2v-7.2h-2.6z"/>
<path d="M1312,680l5.2,5.6h-2.6v7.2h-5.2v-7.2h-2.6z"/>
<path d="M1316,677l5.2,5.6h-2.6v7.2h-5.2v-7.2h-2.6z"/>
<path d="M1319.5,678l5.2,5.6h-2.6v7.2h-5.2v-7.2h-2.6z"/>
<path d="M1323.5,677l5.2,5.6h-2.6v7.2h-5.2v-7.2h-2.6z"/>
<path d="M1331.5,669l5.2,5.6h-2.6v7.2h-5.2v-7.2h-2.6z"/>
<path d="M1341.5,666.5l5.2,5.6h-2.6v7.2h-5.2v-7.2h-2.6z"/>
<path d="M1363.5,646l5.2,5.6h-2.6v7.2h-5.2v-7.2h-2.6z"/>
<path d="M1375,651.5l5.2,5.6h-2.6v7.2h-5.2v-7.2h-2.6z"/>
<path d="M1382,659.5l5.2,5.6h-2.6v7.2h-5.2v-7.2h-2.6z"/>
<path d="M1385.5,660.5l5.2,5.6h-2.6v7.2h-5.2v-7.2h-2.6z"/>
<path d="M1392.5,662.5l5.2,5.6h-2.6v7.2h-5.2v-7.2h-2.6z"/>
<path d="M1397.5,661.5l5.2,5.6h-2.6v7.2h-5.2v-7.2h-2.6z"/>
<path d="M1405,646l5.2,5.6h-2.6v7.2h-5.2v-7.2h-2.6z"/>
<path d="M1412,633.5l5.2,5.6h-2.6v7.2h-5.2v-7.2h-2.6z"/>
<path d="M1422.5,633.5l5.2,5.6h-2.6v7.2h-5.2v-7.2h-2.6z"/>
<path d="M1448,626.5l5.2,5.6h-2.6v7.2h-5.2v-7.2h-2.6z"/>
<path d="M1453,657.5l5.2,5.6h-2.6v7.2h-5.2v-7.2h-2.6z"/>
<path d="M1460.5,669l5.2,5.6h-2.6v7.2h-5.2v-7.2h-2.6z"/>
<path d="M1477,649l5.2,5.6h-2.6v7.2h-5.2v-7.2h-2.6z"/>
<path d="M1481,647l5.2,5.6h-2.6v7.2h-5.2v-7.2h-2.6z"/>
<path d="M1499.5,653.5l5.2,5.6h-2.6v7.2h-5.2v-7.2h-2.6z"/>
<path d="M1502.5,659l5.2,5.6h-2.6v7.2h-5.2v-7.2h-2.6z"/>
<path d="M1509,648.5l5.2,5.6h-2.6v7.2h-5.2v-7.2h-2.6z"/>
<path d="M1514.5,647.5l5.2,5.6h-2.6v7.2h-5.2v-7.2h-2.6z"/>
<path d="M1519.5,656.5l5.2,5.6h-2.6v7.2h-5.2v-7.2h-2.6z"/>
<path d="M1524.5,653.5l5.2,5.6h-2.6v7.2h-5.2v-7.2h-2.6z"/>
<path d="M1536.5,665l5.2,5.6h-2.6v7.2h-5.2v-7.2h-2.6z"/>
<path d="M1539,678.5l5.2,5.6h-2.6v7.2h-5.2v-7.2h-2.6z"/>
<path d="M1575,687.5l5.2,5.6h-2.6v7.2h-5.2v-7.2h-2.6z"/>
<path d="M1595.5,683.5l5.2,5.6h-2.6v7.2h-5.2v-7.2h-2.6z"/>
<path d="M1602.5,664l5.2,5.6h-2.6v7.2h-5.2v-7.2h-2.6z"/>
<path d="M1605,656.5l5.2,5.6h-2.6v7.2h-5.2v-7.2h-2.6z"/>
<path d="M1612.5,668l5.2,5.6h-2.6v7.2h-5.2v-7.2h-2.6z"/>
<path d="M1631.5,648.5l5.2,5.6h-2.6v7.2h-5.2v-7.2h-2.6z"/>
<path d="M1641.5,673.5l5.2,5.6h-2.6v7.2h-5.2v-7.2h-2.6z"/>
<path d="M1656.5,651.5l5.2,5.6h-2.6v7.2h-5.2v-7.2h-2.6z"/>
<path d="M1663.5,664l5.2,5.6h-2.6v7.2h-5.2v-7.2h-2.6z"/>
<path d="M1671,638l5.2,5.6h-2.6v7.2h-5.2v-7.2h-2.6z"/>
<path d="M1676,632l5.2,5.6h-2.6v7.2h-5.2v-7.2h-2.6z"/>
<path d="M1693.5,632l5.2,5.6h-2.6v7.2h-5.2v-7.2h-2.6z"/>
<path d="M1701,628l5.2,5.6h-2.6v7.2h-5.2v-7.2h-2.6z"/>
<path d="M1719.5,772.5l5.2,5.6h-2.6v7.2h-5.2v-7.2h-2.6z"/>
<path d="M1751.5,675.5l5.2,5.6h-2.6v7.2h-5.2v-7.2h-2.6z"/>
<path d="M1756.5,662l5.2,5.6h-2.6v7.2h-5.2v-7.2h-2.6z"/>
<path d="M1763.5,639l5.2,5.6h-2.6v7.2h-5.2v-7.2h-2.6z"/>
<path d="M1779,634l5.2,5.6h-2.6v7.2h-5.2v-7.2h-2.6z"/>
</g>
<g fill="url(#gx)" stroke="#cc7a06" stroke-width="0.9" stroke-linejoin="miter">
<path d="M28.4,834.8L31.3,837.7L29.1,839.9L31.3,842.2L28.4,845.1L26.2,842.8L24,845.1L21.1,842.2L23.3,839.9L21.1,837.7L24,834.8L26.2,837Z"/>
<path d="M43,820.3L45.9,823.2L43.7,825.4L45.9,827.6L43,830.5L40.8,828.3L38.5,830.5L35.6,827.6L37.9,825.4L35.6,823.2L38.5,820.3L40.8,822.5Z"/>
<path d="M47.8,820.3L50.7,823.2L48.5,825.4L50.7,827.6L47.8,830.5L45.6,828.3L43.4,830.5L40.5,827.6L42.7,825.4L40.5,823.2L43.4,820.3L45.6,822.5Z"/>
<path d="M55.6,812.5L58.5,815.4L56.3,817.6L58.5,819.9L55.6,822.8L53.4,820.5L51.1,822.8L48.2,819.9L50.5,817.6L48.2,815.4L51.1,812.5L53.4,814.7Z"/>
<path d="M62.4,810.6L65.3,813.5L63.1,815.7L65.3,817.9L62.4,820.8L60.2,818.6L57.9,820.8L55,817.9L57.3,815.7L55,813.5L57.9,810.6L60.2,812.8Z"/>
<path d="M68.2,806.7L71.1,809.6L68.9,811.8L71.1,814L68.2,816.9L66,814.7L63.8,816.9L60.9,814L63.1,811.8L60.9,809.6L63.8,806.7L66,808.9Z"/>
<path d="M71.1,807.6L74,810.5L71.8,812.8L74,815L71.1,817.9L68.9,815.7L66.7,817.9L63.8,815L66,812.8L63.8,810.5L66.7,807.6L68.9,809.9Z"/>
<path d="M91.5,792.1L94.4,795L92.2,797.2L94.4,799.5L91.5,802.4L89.3,800.1L87,802.4L84.1,799.5L86.4,797.2L84.1,795L87,792.1L89.3,794.3Z"/>
<path d="M103.1,797.9L106,800.8L103.8,803.1L106,805.3L103.1,808.2L100.9,806L98.7,808.2L95.8,805.3L98,803.1L95.8,800.8L98.7,797.9L100.9,800.2Z"/>
<path d="M113.8,782.4L116.7,785.3L114.5,787.5L116.7,789.8L113.8,792.7L111.6,790.4L109.4,792.7L106.5,789.8L108.7,787.5L106.5,785.3L109.4,782.4L111.6,784.6Z"/>
<path d="M136.5,758.2L139.4,761.1L137.2,763.3L139.4,765.5L136.5,768.4L134.3,766.2L132.1,768.4L129.2,765.5L131.4,763.3L129.2,761.1L132.1,758.2L134.3,760.4Z"/>
<path d="M150.7,776.6L153.6,779.5L151.4,781.7L153.6,784L150.7,786.8L148.5,784.6L146.2,786.8L143.3,784L145.6,781.7L143.3,779.5L146.2,776.6L148.5,778.8Z"/>
<path d="M172,757.2L174.9,760.1L172.7,762.3L174.9,764.5L172,767.4L169.8,765.2L167.6,767.4L164.7,764.5L166.9,762.3L164.7,760.1L167.6,757.2L169.8,759.4Z"/>
<path d="M176.9,761.1L179.8,764L177.6,766.2L179.8,768.4L176.9,771.3L174.7,769.1L172.4,771.3L169.5,768.4L171.8,766.2L169.5,764L172.4,761.1L174.7,763.3Z"/>
<path d="M181.7,763L184.6,765.9L182.4,768.1L184.6,770.4L181.7,773.3L179.5,771L177.3,773.3L174.4,770.4L176.6,768.1L174.4,765.9L177.3,763L179.5,765.2Z"/>
<path d="M184.6,770.8L187.5,773.7L185.3,775.9L187.5,778.1L184.6,781L182.4,778.8L180.2,781L177.3,778.1L179.5,775.9L177.3,773.7L180.2,770.8L182.4,773Z"/>
<path d="M212.8,794.1L215.7,797L213.5,799.2L215.7,801.4L212.8,804.3L210.6,802.1L208.3,804.3L205.4,801.4L207.7,799.2L205.4,797L208.3,794.1L210.6,796.3Z"/>
<path d="M219.6,806.7L222.5,809.6L220.2,811.8L222.5,814L219.6,816.9L217.3,814.7L215.1,816.9L212.2,814L214.4,811.8L212.2,809.6L215.1,806.7L217.3,808.9Z"/>
<path d="M243.8,787.3L246.7,790.2L244.5,792.4L246.7,794.6L243.8,797.5L241.6,795.3L239.4,797.5L236.5,794.6L238.7,792.4L236.5,790.2L239.4,787.3L241.6,789.5Z"/>
<path d="M267.1,800.9L270,803.8L267.8,806L270,808.2L267.1,811.1L264.9,808.9L262.7,811.1L259.8,808.2L262,806L259.8,803.8L262.7,800.9L264.9,803.1Z"/>
<path d="M270,808.6L272.9,811.5L270.7,813.7L272.9,816L270,818.9L267.8,816.6L265.6,818.9L262.7,816L264.9,813.7L262.7,811.5L265.6,808.6L267.8,810.8Z"/>
<path d="M273.9,806.7L276.8,809.6L274.6,811.8L276.8,814L273.9,816.9L271.7,814.7L269.5,816.9L266.6,814L268.8,811.8L266.6,809.6L269.5,806.7L271.7,808.9Z"/>
<path d="M334.6,888.2L337.5,891.1L335.3,893.3L337.5,895.5L334.6,898.4L332.4,896.2L330.2,898.4L327.3,895.5L329.5,893.3L327.3,891.1L330.2,888.2L332.4,890.4Z"/>
<path d="M364.7,847.4L367.6,850.3L365.4,852.6L367.6,854.8L364.7,857.7L362.5,855.5L360.2,857.7L357.3,854.8L359.6,852.6L357.3,850.3L360.2,847.4L362.5,849.7Z"/>
<path d="M373.4,861L376.3,863.9L374.1,866.1L376.3,868.4L373.4,871.3L371.2,869L369,871.3L366.1,868.4L368.3,866.1L366.1,863.9L369,861L371.2,863.2Z"/>
<path d="M383.1,833.8L386,836.7L383.8,839L386,841.2L383.1,844.1L380.9,841.9L378.7,844.1L375.8,841.2L378,839L375.8,836.7L378.7,833.8L380.9,836.1Z"/>
<path d="M388,837.7L390.9,840.6L388.7,842.9L390.9,845.1L388,848L385.8,845.8L383.5,848L380.6,845.1L382.9,842.9L380.6,840.6L383.5,837.7L385.8,840Z"/>
<path d="M455.9,815.4L458.8,818.3L456.6,820.5L458.8,822.8L455.9,825.7L453.7,823.4L451.5,825.7L448.6,822.8L450.8,820.5L448.6,818.3L451.5,815.4L453.7,817.6Z"/>
<path d="M465.6,810.6L468.5,813.5L466.3,815.7L468.5,817.9L465.6,820.8L463.4,818.6L461.2,820.8L458.3,817.9L460.5,815.7L458.3,813.5L461.2,810.6L463.4,812.8Z"/>
<path d="M455.9,820.3L458.8,823.2L456.6,825.4L458.8,827.6L455.9,830.5L453.7,828.3L451.5,830.5L448.6,827.6L450.8,825.4L448.6,823.2L451.5,820.3L453.7,822.5Z"/>
<path d="M482.1,816.4L485,819.3L482.8,821.5L485,823.7L482.1,826.6L479.9,824.4L477.7,826.6L474.8,823.7L477,821.5L474.8,819.3L477.7,816.4L479.9,818.6Z"/>
<path d="M521.9,811.5L524.8,814.4L522.6,816.7L524.8,818.9L521.9,821.8L519.7,819.6L517.4,821.8L514.5,818.9L516.8,816.7L514.5,814.4L517.4,811.5L519.7,813.8Z"/>
<path d="M536.4,793.1L539.3,796L537.1,798.2L539.3,800.4L536.4,803.3L534.2,801.1L532,803.3L529.1,800.4L531.3,798.2L529.1,796L532,793.1L534.2,795.3Z"/>
<path d="M536.4,797.9L539.3,800.8L537.1,803.1L539.3,805.3L536.4,808.2L534.2,806L532,808.2L529.1,805.3L531.3,803.1L529.1,800.8L532,797.9L534.2,800.2Z"/>
<path d="M552.9,792.1L555.8,795L553.6,797.2L555.8,799.5L552.9,802.4L550.7,800.1L548.5,802.4L545.6,799.5L547.8,797.2L545.6,795L548.5,792.1L550.7,794.3Z"/>
<path d="M557.8,786.3L560.7,789.2L558.5,791.4L560.7,793.7L557.8,796.6L555.6,794.3L553.3,796.6L550.4,793.7L552.7,791.4L550.4,789.2L553.3,786.3L555.6,788.5Z"/>
<path d="M571.4,784.4L574.3,787.3L572.1,789.5L574.3,791.7L571.4,794.6L569.2,792.4L566.9,794.6L564,791.7L566.3,789.5L564,787.3L566.9,784.4L569.2,786.6Z"/>
<path d="M577.2,791.2L580.1,794.1L577.9,796.3L580.1,798.5L577.2,801.4L575,799.2L572.7,801.4L569.8,798.5L572.1,796.3L569.8,794.1L572.7,791.2L575,793.4Z"/>
<path d="M592.9,774.4L595.8,777.3L593.6,779.6L595.8,781.8L592.9,784.7L590.7,782.5L588.4,784.7L585.5,781.8L587.8,779.6L585.5,777.3L588.4,774.4L590.7,776.7Z"/>
<path d="M599.7,782.2L602.6,785.1L600.4,787.3L602.6,789.6L599.7,792.5L597.5,790.2L595.2,792.5L592.3,789.6L594.6,787.3L592.3,785.1L595.2,782.2L597.5,784.4Z"/>
<path d="M615.2,777.3L618.1,780.2L615.9,782.5L618.1,784.7L615.2,787.6L613,785.4L610.8,787.6L607.9,784.7L610.1,782.5L607.9,780.2L610.8,777.3L613,779.6Z"/>
<path d="M612.3,786.1L615.2,789L613,791.2L615.2,793.4L612.3,796.3L610.1,794.1L607.9,796.3L605,793.4L607.2,791.2L605,789L607.9,786.1L610.1,788.3Z"/>
<path d="M623,780.3L625.9,783.2L623.7,785.4L625.9,787.6L623,790.5L620.8,788.3L618.5,790.5L615.6,787.6L617.9,785.4L615.6,783.2L618.5,780.3L620.8,782.5Z"/>
<path d="M658.9,818.1L661.8,821L659.6,823.2L661.8,825.5L658.9,828.4L656.7,826.1L654.4,828.4L651.5,825.5L653.8,823.2L651.5,821L654.4,818.1L656.7,820.3Z"/>
<path d="M671.5,828.8L674.4,831.7L672.2,833.9L674.4,836.1L671.5,839L669.3,836.8L667,839L664.1,836.1L666.4,833.9L664.1,831.7L667,828.8L669.3,831Z"/>
<path d="M688,797.7L690.9,800.6L688.7,802.9L690.9,805.1L688,808L685.8,805.8L683.5,808L680.6,805.1L682.9,802.9L680.6,800.6L683.5,797.7L685.8,800Z"/>
<path d="M696.7,791.9L699.6,794.8L697.4,797L699.6,799.3L696.7,802.2L694.5,799.9L692.3,802.2L689.4,799.3L691.6,797L689.4,794.8L692.3,791.9L694.5,794.1Z"/>
<path d="M700.6,792.9L703.5,795.8L701.3,798L703.5,800.2L700.6,803.1L698.4,800.9L696.2,803.1L693.3,800.2L695.5,798L693.3,795.8L696.2,792.9L698.4,795.1Z"/>
<path d="M715.2,797.7L718.1,800.6L715.8,802.9L718.1,805.1L715.2,808L712.9,805.8L710.7,808L707.8,805.1L710,802.9L707.8,800.6L710.7,797.7L712.9,800Z"/>
<path d="M738.4,806.5L741.3,809.4L739.1,811.6L741.3,813.8L738.4,816.7L736.2,814.5L734,816.7L731.1,813.8L733.3,811.6L731.1,809.4L734,806.5L736.2,808.7Z"/>
<path d="M744.3,803.5L747.2,806.4L744.9,808.7L747.2,810.9L744.3,813.8L742,811.6L739.8,813.8L736.9,810.9L739.1,808.7L736.9,806.4L739.8,803.5L742,805.8Z"/>
<path d="M749.1,795.8L752,798.7L749.8,800.9L752,803.1L749.1,806L746.9,803.8L744.7,806L741.8,803.1L744,800.9L741.8,798.7L744.7,795.8L746.9,798Z"/>
<path d="M756.9,789L759.8,791.9L757.6,794.1L759.8,796.3L756.9,799.2L754.7,797L752.4,799.2L749.5,796.3L751.8,794.1L749.5,791.9L752.4,789L754.7,791.2Z"/>
<path d="M763.7,783.2L766.6,786.1L764.3,788.3L766.6,790.5L763.7,793.4L761.4,791.2L759.2,793.4L756.3,790.5L758.5,788.3L756.3,786.1L759.2,783.2L761.4,785.4Z"/>
<path d="M768.5,784.1L771.4,787L769.2,789.3L771.4,791.5L768.5,794.4L766.3,792.2L764.1,794.4L761.2,791.5L763.4,789.3L761.2,787L764.1,784.1L766.3,786.4Z"/>
<path d="M774.3,779.3L777.2,782.2L775,784.4L777.2,786.6L774.3,789.5L772.1,787.3L769.9,789.5L767,786.6L769.2,784.4L767,782.2L769.9,779.3L772.1,781.5Z"/>
<path d="M784.1,780.3L787,783.2L784.7,785.4L787,787.6L784.1,790.5L781.8,788.3L779.6,790.5L776.7,787.6L778.9,785.4L776.7,783.2L779.6,780.3L781.8,782.5Z"/>
<path d="M799.6,772.5L802.5,775.4L800.2,777.6L802.5,779.9L799.6,782.8L797.3,780.5L795.1,782.8L792.2,779.9L794.4,777.6L792.2,775.4L795.1,772.5L797.3,774.7Z"/>
<path d="M812.2,764.7L815.1,767.6L812.9,769.9L815.1,772.1L812.2,775L810,772.8L807.7,775L804.8,772.1L807.1,769.9L804.8,767.6L807.7,764.7L810,767Z"/>
<path d="M820,772.5L822.9,775.4L820.6,777.6L822.9,779.9L820,782.8L817.7,780.5L815.5,782.8L812.6,779.9L814.8,777.6L812.6,775.4L815.5,772.5L817.7,774.7Z"/>
<path d="M826.7,761.8L829.6,764.7L827.4,767L829.6,769.2L826.7,772.1L824.5,769.9L822.3,772.1L819.4,769.2L821.6,767L819.4,764.7L822.3,761.8L824.5,764.1Z"/>
<path d="M832.6,763.8L835.5,766.7L833.2,768.9L835.5,771.1L832.6,774L830.3,771.8L828.1,774L825.2,771.1L827.4,768.9L825.2,766.7L828.1,763.8L830.3,766Z"/>
<path d="M836.4,770.6L839.3,773.5L837.1,775.7L839.3,777.9L836.4,780.8L834.2,778.6L832,780.8L829.1,777.9L831.3,775.7L829.1,773.5L832,770.6L834.2,772.8Z"/>
<path d="M853.9,750.2L856.8,753.1L854.6,755.3L856.8,757.5L853.9,760.4L851.7,758.2L849.5,760.4L846.6,757.5L848.8,755.3L846.6,753.1L849.5,750.2L851.7,752.4Z"/>
<path d="M858.8,752.1L861.7,755L859.4,757.2L861.7,759.5L858.8,762.4L856.5,760.1L854.3,762.4L851.4,759.5L853.6,757.2L851.4,755L854.3,752.1L856.5,754.3Z"/>
<path d="M865.6,761.8L868.5,764.7L866.2,767L868.5,769.2L865.6,772.1L863.3,769.9L861.1,772.1L858.2,769.2L860.4,767L858.2,764.7L861.1,761.8L863.3,764.1Z"/>
<path d="M879.1,748.2L882,751.1L879.8,753.4L882,755.6L879.1,758.5L876.9,756.3L874.7,758.5L871.8,755.6L874,753.4L871.8,751.1L874.7,748.2L876.9,750.5Z"/>
<path d="M902.6,739.1L905.5,742L903.3,744.2L905.5,746.4L902.6,749.3L900.4,747.1L898.1,749.3L895.2,746.4L897.5,744.2L895.2,742L898.1,739.1L900.4,741.3Z"/>
<path d="M915.2,726.5L918.1,729.4L915.9,731.6L918.1,733.8L915.2,736.7L913,734.5L910.8,736.7L907.9,733.8L910.1,731.6L907.9,729.4L910.8,726.5L913,728.7Z"/>
<path d="M924.9,730.3L927.8,733.2L925.6,735.5L927.8,737.7L924.9,740.6L922.7,738.4L920.5,740.6L917.6,737.7L919.8,735.5L917.6,733.2L920.5,730.3L922.7,732.6Z"/>
<path d="M927.8,718.7L930.7,721.6L928.5,723.8L930.7,726.1L927.8,728.9L925.6,726.7L923.4,728.9L920.5,726.1L922.7,723.8L920.5,721.6L923.4,718.7L925.6,720.9Z"/>
<path d="M934.6,714.8L937.5,717.7L935.3,719.9L937.5,722.2L934.6,725.1L932.4,722.8L930.2,725.1L927.3,722.2L929.5,719.9L927.3,717.7L930.2,714.8L932.4,717Z"/>
<path d="M936.6,709L939.5,711.9L937.2,714.1L939.5,716.3L936.6,719.2L934.3,717L932.1,719.2L929.2,716.3L931.4,714.1L929.2,711.9L932.1,709L934.3,711.2Z"/>
<path d="M944.3,721.6L947.2,724.5L945,726.7L947.2,729L944.3,731.9L942.1,729.6L939.9,731.9L937,729L939.2,726.7L937,724.5L939.9,721.6L942.1,723.8Z"/>
<path d="M951.7,710.9L954.6,713.8L952.4,716.1L954.6,718.3L951.7,721.2L949.5,719L947.2,721.2L944.3,718.3L946.6,716.1L944.3,713.8L947.2,710.9L949.5,713.2Z"/>
<path d="M956.9,729.4L959.8,732.3L957.6,734.5L959.8,736.7L956.9,739.6L954.7,737.4L952.5,739.6L949.6,736.7L951.8,734.5L949.6,732.3L952.5,729.4L954.7,731.6Z"/>
<path d="M966.6,721.6L969.5,724.5L967.3,726.7L969.5,729L966.6,731.9L964.4,729.6L962.2,731.9L959.3,729L961.5,726.7L959.3,724.5L962.2,721.6L964.4,723.8Z"/>
<path d="M975.4,712.9L978.3,715.8L976,718L978.3,720.2L975.4,723.1L973.1,720.9L970.9,723.1L968,720.2L970.3,718L968,715.8L970.9,712.9L973.1,715.1Z"/>
<path d="M980.2,708L983.1,710.9L980.9,713.1L983.1,715.4L980.2,718.3L978,716L975.8,718.3L972.9,715.4L975.1,713.1L972.9,710.9L975.8,708L978,710.3Z"/>
<path d="M989,702.2L991.9,705.1L989.6,707.3L991.9,709.6L989,712.5L986.7,710.2L984.5,712.5L981.6,709.6L983.8,707.3L981.6,705.1L984.5,702.2L986.7,704.4Z"/>
<path d="M996.7,701.2L999.6,704.1L997.4,706.4L999.6,708.6L996.7,711.5L994.5,709.3L992.3,711.5L989.4,708.6L991.6,706.4L989.4,704.1L992.3,701.2L994.5,703.5Z"/>
<path d="M1003.5,711.9L1006.4,714.8L1004.2,717L1006.4,719.3L1003.5,722.2L1001.3,719.9L999.1,722.2L996.2,719.3L998.4,717L996.2,714.8L999.1,711.9L1001.3,714.1Z"/>
<path d="M1025.8,715.8L1028.7,718.7L1026.5,720.9L1028.7,723.1L1025.8,726L1023.6,723.8L1021.4,726L1018.5,723.1L1020.7,720.9L1018.5,718.7L1021.4,715.8L1023.6,718Z"/>
<path d="M1026.8,722.6L1029.7,725.5L1027.5,727.7L1029.7,729.9L1026.8,732.8L1024.6,730.6L1022.3,732.8L1019.4,729.9L1021.7,727.7L1019.4,725.5L1022.3,722.6L1024.6,724.8Z"/>
<path d="M1043.3,724.5L1046.2,727.4L1044,729.6L1046.2,731.9L1043.3,734.8L1041.1,732.5L1038.8,734.8L1035.9,731.9L1038.2,729.6L1035.9,727.4L1038.8,724.5L1041.1,726.7Z"/>
<path d="M1049.5,699.3L1052.4,702.2L1050.2,704.4L1052.4,706.6L1049.5,709.5L1047.3,707.3L1045.1,709.5L1042.2,706.6L1044.4,704.4L1042.2,702.2L1045.1,699.3L1047.3,701.5Z"/>
<path d="M1054.9,711.9L1057.8,714.8L1055.6,717L1057.8,719.3L1054.9,722.2L1052.7,719.9L1050.5,722.2L1047.6,719.3L1049.8,717L1047.6,714.8L1050.5,711.9L1052.7,714.1Z"/>
<path d="M1062.7,710.9L1065.6,713.8L1063.4,716.1L1065.6,718.3L1062.7,721.2L1060.5,719L1058.3,721.2L1055.4,718.3L1057.6,716.1L1055.4,713.8L1058.3,710.9L1060.5,713.2Z"/>
<path d="M1077.3,668.2L1080.2,671.1L1077.9,673.4L1080.2,675.6L1077.3,678.5L1075,676.3L1072.8,678.5L1069.9,675.6L1072.1,673.4L1069.9,671.1L1072.8,668.2L1075,670.5Z"/>
<path d="M1089.9,646.9L1092.8,649.8L1090.5,652L1092.8,654.2L1089.9,657.1L1087.6,654.9L1085.4,657.1L1082.5,654.2L1084.7,652L1082.5,649.8L1085.4,646.9L1087.6,649.1Z"/>
<path d="M1115.1,666.3L1118,669.2L1115.8,671.4L1118,673.7L1115.1,676.6L1112.9,674.3L1110.6,676.6L1107.7,673.7L1110,671.4L1107.7,669.2L1110.6,666.3L1112.9,668.5Z"/>
<path d="M1122.9,669.2L1125.8,672.1L1123.5,674.3L1125.8,676.6L1122.9,679.5L1120.6,677.2L1118.4,679.5L1115.5,676.6L1117.7,674.3L1115.5,672.1L1118.4,669.2L1120.6,671.4Z"/>
<path d="M1132.6,663.4L1135.5,666.3L1133.2,668.5L1135.5,670.7L1132.6,673.6L1130.3,671.4L1128.1,673.6L1125.2,670.7L1127.4,668.5L1125.2,666.3L1128.1,663.4L1130.3,665.6Z"/>
<path d="M1136.1,656.6L1139,659.5L1136.7,661.7L1139,664L1136.1,666.8L1133.8,664.6L1131.6,666.8L1128.7,664L1130.9,661.7L1128.7,659.5L1131.6,656.6L1133.8,658.8Z"/>
<path d="M1150,704.1L1152.9,707L1150.7,709.3L1152.9,711.5L1150,714.4L1147.8,712.2L1145.6,714.4L1142.7,711.5L1144.9,709.3L1142.7,707L1145.6,704.1L1147.8,706.4Z"/>
<path d="M1167.5,672.1L1170.4,675L1168.2,677.2L1170.4,679.5L1167.5,682.4L1165.3,680.1L1163,682.4L1160.1,679.5L1162.4,677.2L1160.1,675L1163,672.1L1165.3,674.3Z"/>
<path d="M1170.4,679.9L1173.3,682.8L1171.1,685L1173.3,687.2L1170.4,690.1L1168.2,687.9L1166,690.1L1163.1,687.2L1165.3,685L1163.1,682.8L1166,679.9L1168.2,682.1Z"/>
<path d="M1180.1,689.6L1183,692.5L1180.8,694.7L1183,696.9L1180.1,699.8L1177.9,697.6L1175.7,699.8L1172.8,696.9L1175,694.7L1172.8,692.5L1175.7,689.6L1177.9,691.8Z"/>
<path d="M1217.2,708.4L1220.1,711.3L1217.8,713.5L1220.1,715.8L1217.2,718.7L1214.9,716.4L1212.7,718.7L1209.8,715.8L1212,713.5L1209.8,711.3L1212.7,708.4L1214.9,710.6Z"/>
<path d="M1221,714.2L1223.9,717.1L1221.7,719.3L1223.9,721.6L1221,724.5L1218.8,722.2L1216.6,724.5L1213.7,721.6L1215.9,719.3L1213.7,717.1L1216.6,714.2L1218.8,716.4Z"/>
<path d="M1242.4,707.4L1245.3,710.3L1243.1,712.6L1245.3,714.8L1242.4,717.7L1240.2,715.5L1237.9,717.7L1235,714.8L1237.3,712.6L1235,710.3L1237.9,707.4L1240.2,709.7Z"/>
<path d="M1269.6,684.5L1272.5,687.4L1270.2,689.7L1272.5,691.9L1269.6,694.8L1267.3,692.6L1265.1,694.8L1262.2,691.9L1264.4,689.7L1262.2,687.4L1265.1,684.5L1267.3,686.8Z"/>
<path d="M1287,684.5L1289.9,687.4L1287.7,689.7L1289.9,691.9L1287,694.8L1284.8,692.6L1282.6,694.8L1279.7,691.9L1281.9,689.7L1279.7,687.4L1282.6,684.5L1284.8,686.8Z"/>
<path d="M1304.5,686.1L1307.4,689L1305.2,691.2L1307.4,693.4L1304.5,696.3L1302.3,694.1L1300,696.3L1297.1,693.4L1299.4,691.2L1297.1,689L1300,686.1L1302.3,688.3Z"/>
<path d="M1315.2,654.1L1318.1,657L1315.8,659.2L1318.1,661.4L1315.2,664.3L1312.9,662.1L1310.7,664.3L1307.8,661.4L1310,659.2L1307.8,657L1310.7,654.1L1312.9,656.3Z"/>
<path d="M1321,653.1L1323.9,656L1321.7,658.2L1323.9,660.4L1321,663.3L1318.8,661.1L1316.5,663.3L1313.6,660.4L1315.9,658.2L1313.6,656L1316.5,653.1L1318.8,655.3Z"/>
<path d="M1323.9,648.2L1326.8,651.1L1324.6,653.4L1326.8,655.6L1323.9,658.5L1321.7,656.3L1319.4,658.5L1316.5,655.6L1318.8,653.4L1316.5,651.1L1319.4,648.2L1321.7,650.5Z"/>
<path d="M1329.7,653.1L1332.6,656L1330.4,658.2L1332.6,660.4L1329.7,663.3L1327.5,661.1L1325.3,663.3L1322.4,660.4L1324.6,658.2L1322.4,656L1325.3,653.1L1327.5,655.3Z"/>
<path d="M1335.5,641.4L1338.4,644.3L1336.2,646.6L1338.4,648.8L1335.5,651.7L1333.3,649.5L1331.1,651.7L1328.2,648.8L1330.4,646.6L1328.2,644.3L1331.1,641.4L1333.3,643.7Z"/>
<path d="M1345.6,633.7L1348.5,636.6L1346.3,638.8L1348.5,641L1345.6,643.9L1343.4,641.7L1341.2,643.9L1338.3,641L1340.5,638.8L1338.3,636.6L1341.2,633.7L1343.4,635.9Z"/>
<path d="M1367.6,617.2L1370.5,620.1L1368.2,622.3L1370.5,624.5L1367.6,627.4L1365.3,625.2L1363.1,627.4L1360.2,624.5L1362.4,622.3L1360.2,620.1L1363.1,617.2L1365.3,619.4Z"/>
<path d="M1380.2,629.8L1383.1,632.7L1380.8,634.9L1383.1,637.2L1380.2,640.1L1377.9,637.8L1375.7,640.1L1372.8,637.2L1375,634.9L1372.8,632.7L1375.7,629.8L1377.9,632Z"/>
<path d="M1385,636.6L1387.9,639.5L1385.7,641.7L1387.9,644L1385,646.8L1382.8,644.6L1380.6,646.8L1377.7,644L1379.9,641.7L1377.7,639.5L1380.6,636.6L1382.8,638.8Z"/>
<path d="M1390.8,633.7L1393.7,636.6L1391.5,638.8L1393.7,641L1390.8,643.9L1388.6,641.7L1386.4,643.9L1383.5,641L1385.7,638.8L1383.5,636.6L1386.4,633.7L1388.6,635.9Z"/>
<path d="M1396.7,636.6L1399.6,639.5L1397.3,641.7L1399.6,644L1396.7,646.8L1394.4,644.6L1392.2,646.8L1389.3,644L1391.5,641.7L1389.3,639.5L1392.2,636.6L1394.4,638.8Z"/>
<path d="M1401.5,633.7L1404.4,636.6L1402.2,638.8L1404.4,641L1401.5,643.9L1399.3,641.7L1397.1,643.9L1394.2,641L1396.4,638.8L1394.2,636.6L1397.1,633.7L1399.3,635.9Z"/>
<path d="M1409.3,617.2L1412.2,620.1L1410,622.3L1412.2,624.5L1409.3,627.4L1407.1,625.2L1404.8,627.4L1401.9,624.5L1404.2,622.3L1401.9,620.1L1404.8,617.2L1407.1,619.4Z"/>
<path d="M1417,613.3L1419.9,616.2L1417.7,618.4L1419.9,620.7L1417,623.6L1414.8,621.3L1412.6,623.6L1409.7,620.7L1411.9,618.4L1409.7,616.2L1412.6,613.3L1414.8,615.5Z"/>
<path d="M1427.7,613.3L1430.6,616.2L1428.4,618.4L1430.6,620.7L1427.7,623.6L1425.5,621.3L1423.3,623.6L1420.4,620.7L1422.6,618.4L1420.4,616.2L1423.3,613.3L1425.5,615.5Z"/>
<path d="M1452.9,619.1L1455.8,622L1453.6,624.3L1455.8,626.5L1452.9,629.4L1450.7,627.2L1448.5,629.4L1445.6,626.5L1447.8,624.3L1445.6,622L1448.5,619.1L1450.7,621.4Z"/>
<path d="M1457.8,626.9L1460.7,629.8L1458.5,632L1460.7,634.2L1457.8,637.1L1455.6,634.9L1453.3,637.1L1450.4,634.2L1452.7,632L1450.4,629.8L1453.3,626.9L1455.6,629.1Z"/>
<path d="M1482.1,622L1485,624.9L1482.7,627.2L1485,629.4L1482.1,632.3L1479.8,630.1L1477.6,632.3L1474.7,629.4L1476.9,627.2L1474.7,624.9L1477.6,622L1479.8,624.3Z"/>
<path d="M1485.1,617.9L1488,620.8L1485.8,623L1488,625.2L1485.1,628.1L1482.9,625.9L1480.7,628.1L1477.8,625.2L1480,623L1477.8,620.8L1480.7,617.9L1482.9,620.1Z"/>
<path d="M1503.6,632.4L1506.5,635.3L1504.2,637.5L1506.5,639.8L1503.6,642.7L1501.3,640.4L1499.1,642.7L1496.2,639.8L1498.4,637.5L1496.2,635.3L1499.1,632.4L1501.3,634.6Z"/>
<path d="M1508.4,627.6L1511.3,630.5L1509.1,632.7L1511.3,634.9L1508.4,637.8L1506.2,635.6L1504,637.8L1501.1,634.9L1503.3,632.7L1501.1,630.5L1504,627.6L1506.2,629.8Z"/>
<path d="M1513.7,615.9L1516.6,618.8L1514.3,621L1516.6,623.3L1513.7,626.2L1511.4,623.9L1509.2,626.2L1506.3,623.3L1508.5,621L1506.3,618.8L1509.2,615.9L1511.4,618.2Z"/>
<path d="M1519.1,631.4L1522,634.3L1519.8,636.6L1522,638.8L1519.1,641.7L1516.9,639.5L1514.6,641.7L1511.7,638.8L1514,636.6L1511.7,634.3L1514.6,631.4L1516.9,633.7Z"/>
<path d="M1524.9,632.4L1527.8,635.3L1525.6,637.5L1527.8,639.8L1524.9,642.7L1522.7,640.4L1520.5,642.7L1517.6,639.8L1519.8,637.5L1517.6,635.3L1520.5,632.4L1522.7,634.6Z"/>
<path d="M1528.8,646L1531.7,648.9L1529.5,651.1L1531.7,653.4L1528.8,656.3L1526.6,654L1524.3,656.3L1521.4,653.4L1523.7,651.1L1521.4,648.9L1524.3,646L1526.6,648.2Z"/>
<path d="M1579.3,666.4L1582.2,669.3L1579.9,671.5L1582.2,673.7L1579.3,676.6L1577,674.4L1574.8,676.6L1571.9,673.7L1574.1,671.5L1571.9,669.3L1574.8,666.4L1577,668.6Z"/>
<path d="M1599.6,654.7L1602.5,657.6L1600.3,659.9L1602.5,662.1L1599.6,665L1597.4,662.8L1595.2,665L1592.3,662.1L1594.5,659.9L1592.3,657.6L1595.2,654.7L1597.4,657Z"/>
<path d="M1608.4,633.4L1611.3,636.3L1609,638.5L1611.3,640.7L1608.4,643.6L1606.1,641.4L1603.9,643.6L1601,640.7L1603.2,638.5L1601,636.3L1603.9,633.4L1606.1,635.6Z"/>
<path d="M1617.1,635.3L1620,638.2L1617.8,640.5L1620,642.7L1617.1,645.6L1614.9,643.4L1612.6,645.6L1609.7,642.7L1612,640.5L1609.7,638.2L1612.6,635.3L1614.9,637.6Z"/>
<path d="M1635.5,633.4L1638.4,636.3L1636.2,638.5L1638.4,640.7L1635.5,643.6L1633.3,641.4L1631.1,643.6L1628.2,640.7L1630.4,638.5L1628.2,636.3L1631.1,633.4L1633.3,635.6Z"/>
<path d="M1645.6,649.9L1648.5,652.8L1646.3,655L1648.5,657.2L1645.6,660.1L1643.4,657.9L1641.2,660.1L1638.3,657.2L1640.5,655L1638.3,652.8L1641.2,649.9L1643.4,652.1Z"/>
<path d="M1660.8,631.4L1663.7,634.3L1661.4,636.6L1663.7,638.8L1660.8,641.7L1658.5,639.5L1656.3,641.7L1653.4,638.8L1655.6,636.6L1653.4,634.3L1656.3,631.4L1658.5,633.7Z"/>
<path d="M1667.6,625.6L1670.5,628.5L1668.2,630.8L1670.5,633L1667.6,635.9L1665.3,633.7L1663.1,635.9L1660.2,633L1662.4,630.8L1660.2,628.5L1663.1,625.6L1665.3,627.9Z"/>
<path d="M1675.3,615L1678.2,617.9L1676,620.1L1678.2,622.3L1675.3,625.2L1673.1,623L1670.9,625.2L1668,622.3L1670.2,620.1L1668,617.9L1670.9,615L1673.1,617.2Z"/>
<path d="M1680.6,605.2L1683.5,608.1L1681.2,610.4L1683.5,612.6L1680.6,615.5L1678.3,613.3L1676.1,615.5L1673.2,612.6L1675.4,610.4L1673.2,608.1L1676.1,605.2L1678.3,607.5Z"/>
<path d="M1697.6,606.2L1700.5,609.1L1698.3,611.3L1700.5,613.6L1697.6,616.5L1695.4,614.2L1693.2,616.5L1690.3,613.6L1692.5,611.3L1690.3,609.1L1693.2,606.2L1695.4,608.4Z"/>
<path d="M1706.4,613.6L1709.3,616.5L1707,618.7L1709.3,620.9L1706.4,623.8L1704.1,621.6L1701.9,623.8L1699,620.9L1701.2,618.7L1699,616.5L1701.9,613.6L1704.1,615.8Z"/>
<path d="M1767.5,615.9L1770.4,618.8L1768.2,621L1770.4,623.3L1767.5,626.2L1765.3,623.9L1763,626.2L1760.1,623.3L1762.4,621L1760.1,618.8L1763,615.9L1765.3,618.2Z"/>
<path d="M1782.6,613.6L1785.5,616.5L1783.3,618.7L1785.5,620.9L1782.6,623.8L1780.4,621.6L1778.2,623.8L1775.3,620.9L1777.5,618.7L1775.3,616.5L1778.2,613.6L1780.4,615.8Z"/>
</g>
<rect x="0" y="771.8" width="1840" height="3.2" fill="#2db12d"/>
<rect x="0" y="828.8" width="1840" height="2" fill="#2db12d"/>
<rect x="0" y="902.9" width="1840" height="2.2" fill="#2db12d"/>
<rect x="466" y="860.7" width="1374" height="2" fill="#2db12d"/>
<rect x="991" y="645.7" width="849" height="3" fill="#2db12d"/>
<rect x="1141" y="704" width="699" height="4" fill="#2db12d"/>
<rect x="1289" y="663" width="551" height="2.6" fill="#2db12d"/>
<rect x="1309" y="631" width="531" height="2.6" fill="#2db12d"/>
<rect x="1445" y="623.6" width="395" height="2.4" fill="#2db12d"/>
<rect x="1567" y="676" width="273" height="1" fill="#2db12d"/>
<rect x="1707" y="762" width="133" height="1.6" fill="#2db12d"/>
<path d="M1727,684.5H1840" stroke="#2db12d" stroke-width="1" stroke-dasharray="19,9" fill="none"/>
<path d="M1720,697.5H1840" stroke="#2db12d" stroke-width="1" stroke-dasharray="19,9" fill="none"/>
<path d="M1718,731.5H1840" stroke="#2db12d" stroke-width="1" stroke-dasharray="19,9" fill="none"/>
<rect x="1385" y="609.8" width="455" height="4" fill="#f5101a"/>
<rect x="4" y="55" width="1" height="870" fill="#f29aa0"/>
<rect x="4" y="922" width="1" height="4" fill="#555"/>
<rect x="78" y="922" width="1" height="4" fill="#555"/>
<rect x="192.5" y="922" width="1" height="4" fill="#555"/>
<rect x="309.5" y="922" width="1" height="4" fill="#555"/>
<rect x="426.5" y="922" width="1" height="4" fill="#555"/>
<rect x="549" y="922" width="1" height="4" fill="#555"/>
<rect x="672.5" y="922" width="1" height="4" fill="#555"/>
<rect x="800.5" y="922" width="1" height="4" fill="#555"/>
<rect x="927.5" y="922" width="1" height="4" fill="#555"/>
<rect x="1055.5" y="922" width="1" height="4" fill="#555"/>
<rect x="1183.5" y="922" width="1" height="4" fill="#555"/>
<rect x="1310.5" y="922" width="1" height="4" fill="#555"/>
<rect x="1437.5" y="922" width="1" height="4" fill="#555"/>
<rect x="1565.5" y="922" width="1" height="4" fill="#555"/>
<rect x="1692.5" y="922" width="1" height="4" fill="#555"/>
<rect x="1821.5" y="922" width="1" height="4" fill="#555"/>
</svg>
<div class="lab" style="top:37px;width:246px">Equity-Kurve: WeeklyLong 8H linreg fcci</div>
<div class="lab" style="top:373px;width:276px">ProBacktest Positionen: WeeklyLong 8H linreg fcci</div>
<div class="lab" style="top:589px;width:110px;height:14.5px;line-height:15.5px">Kurs</div>
<svg class="abs" style="left:0px;top:0px" width="300" height="610" viewBox="0 0 300 610"><g transform="translate(196.8,39.3) scale(1)"><path d="M10.390,0.630L7.300,3.720L9.280,5.700L12.370,2.610A4.300,4.300 0 0 1 6.710,8.410L2.490,12.630A1.500,1.500 0 0 1 0.370,10.510L4.590,6.290A4.300,4.300 0 0 1 10.390,0.630Z" fill="#fff" stroke="#111" stroke-width="1.150" stroke-linejoin="round"/></g><rect x="214.5" y="40" width="12" height="11.500" rx="1.500" fill="#fff" stroke="#111" stroke-width="1"/><rect x="214.5" y="40" width="12" height="3" fill="#111"/><circle cx="237.0" cy="45.8" r="6.300" fill="#3a3a3a" stroke="#111" stroke-width="0.600"/><path d="M234.4,43.199999999999996L239.6,48.4M234.4,48.4L239.6,43.199999999999996" stroke="#fff" stroke-width="2.100"/><rect x="245.5" y="375.5" width="12" height="11.500" rx="1.500" fill="#fff" stroke="#111" stroke-width="1"/><rect x="245.5" y="375.5" width="12" height="3" fill="#111"/><circle cx="268.0" cy="381.3" r="6.300" fill="#3a3a3a" stroke="#111" stroke-width="0.600"/><path d="M265.4,378.7L270.6,383.90000000000003M265.4,383.90000000000003L270.6,378.7" stroke="#fff" stroke-width="2.100"/><g transform="translate(27,590.2) scale(1)"><path d="M10.390,0.630L7.300,3.720L9.280,5.700L12.370,2.610A4.300,4.300 0 0 1 6.710,8.410L2.490,12.630A1.500,1.500 0 0 1 0.370,10.510L4.590,6.290A4.300,4.300 0 0 1 10.390,0.630Z" fill="#fff" stroke="#111" stroke-width="1.150" stroke-linejoin="round"/></g><rect x="43.5" y="591.3" width="12" height="11.500" rx="1.500" fill="#fff" stroke="#111" stroke-width="1"/><rect x="43.5" y="591.3" width="12" height="3" fill="#111"/><circle cx="67.0" cy="597.1" r="6.300" fill="#3a3a3a" stroke="#111" stroke-width="0.600"/><path d="M64.4,594.5L69.6,599.7M64.4,599.7L69.6,594.5" stroke="#fff" stroke-width="2.100"/><rect x="78.5" y="591" width="11" height="12" fill="#fff" stroke="#9aa6b0" stroke-width="0.800"/><path d="M84.0,602l3.700,-4.200h-2.200v-4h-3v4h-2.200z" fill="#e02a2a"/><rect x="95.5" y="591" width="11" height="12" fill="#fff" stroke="#9aa6b0" stroke-width="0.800"/><path d="M101.0,593.500l3.700,4.200h-2.200v4h-3v-4h-2.200z" fill="#1fa01f"/></svg>
<div class="orow" style="left:111px;width:304px"><span style="left:0;width:181px;letter-spacing:-1.08px;border:none;padding-left:1px">0Tag5+36,5Hoch13.257,7+5Tief:13.191,2780</span><span style="left:178px">,5</span><span style="left:189.5px">3</span><span style="left:198.5px">7</span><b style="left:210.9px"></b><span style="left:218.5px">,0</span><span style="left:233px">2</span><span style="left:239.5px">5</span><span style="left:247.5px">2</span><span style="left:256.5px">7</span><span style="left:263.5px">1</span><span style="left:269.5px">5</span><span style="left:278px">0</span><span style="left:287px">0</span></div>
<div class="orow" style="left:424px;width:1390px"><span style="left:0.4px">1@5.980,0</span><span style="left:57.9px">0</span><span style="left:65.4px">4,5</span><span style="left:83.3px">5.205,5</span><span style="left:124.2px">,3</span><span style="left:137px">2,4</span><span style="left:158.6px">,0</span><span style="left:176.5px">2,5</span><span style="left:193.5px">5</span><span style="left:201px">,5</span><b style="left:216.4px"></b><b style="left:223.4px"></b><span style="left:229.3px">0</span><b style="left:241.7px"></b><b style="left:244.7px"></b><span style="left:247.2px">,0</span><span style="left:263.2px">0</span><span style="left:274.5px">1</span><span style="left:288.5px">5</span><span style="left:299.9px">5,5</span><span style="left:315px">4</span><span style="left:323.5px">5,5</span><b style="left:344.8px"></b><span style="left:348.5px">3</span><b style="left:360.9px"></b><span style="left:363.5px">3</span><span style="left:374.9px">9</span><span style="left:384.3px">0,9</span><span style="left:402.5px">9</span><span style="left:411.5px">9</span><span style="left:419.2px">5</span><b style="left:431.6px"></b><b style="left:434.1px"></b><span style="left:436.1px">5,5</span><span style="left:458.7px">0</span><span style="left:467.2px">,3</span><span style="left:479.5px">15,0</span><span style="left:503.9px">,3</span><span style="left:516.2px">9</span><span style="left:527.5px">5</span><span style="left:536.9px">2</span><span style="left:543.5px">1</span><span style="left:557.5px">3</span><span style="left:567.1px">3</span><span style="left:581.2px">3</span><b style="left:593.6px"></b><b style="left:597.6px"></b><b style="left:600.6px"></b><span style="left:603.8px">05,5</span><span style="left:629.2px">3,1</span><span style="left:644.3px">3</span><span style="left:653.7px">7</span><span style="left:663.1px">7,5</span><span style="left:681px">,3</span><span style="left:695.7px">74,3</span><span style="left:719.2px">0</span><span style="left:726.8px">8</span><b style="left:739.2px"></b><b style="left:741.7px"></b><span style="left:749.4px">2,5</span><span style="left:765.4px">1</span><span style="left:774.2px">0</span><span style="left:784.2px">.799,0</span><b style="left:820.3px"></b><span style="left:826.1px">5,8</span><span style="left:843px">578,5</span><span style="left:872.8px">5,6</span><span style="left:890.7px">1,8</span><span style="left:909.5px">0</span><b style="left:921.9px"></b><b style="left:924.9px"></b><b style="left:927.4px"></b><span style="left:931.2px">5</span><span style="left:940.5px">1</span><span style="left:949.1px">34,1</span><span style="left:970.7px">,3</span><span style="left:983px">3</span><span style="left:993.4px">5</span><span style="left:1005px">3</span><span style="left:1013.1px">2</span><span style="left:1021.5px">8</span><span style="left:1032px">14,1</span><span style="left:1060.8px">9</span><span style="left:1068.3px">0,0</span><span style="left:1089px">5,0</span><span style="left:1109.7px">9</span><b style="left:1122.1px"></b><b style="left:1124.6px"></b><b style="left:1127.1px"></b><b style="left:1130.1px"></b><span style="left:1132.3px">,3</span><span style="left:1149.7px">.159,9</span><span style="left:1185.1px">4,3</span><span style="left:1203.9px">3,2</span><span style="left:1220.9px">2,2</span><span style="left:1239.7px">7</span><span style="left:1249.2px">0,0</span><span style="left:1270.8px">9</span><span style="left:1284px">1,1</span><span style="left:1302.8px">9</span><span style="left:1311.3px">,7</span><span style="left:1323.5px">.239,1</span><span style="left:1356.5px">0</span><span style="left:1363.1px">3</span><span style="left:1370.7px">5,7</span></div>
<div class="brow" style="left:0px;width:413px"><span style="left:-7.5px">1@5.489,0</span><b style="left:51.2px"></b><b style="left:53.7px"></b><span style="left:55.8px">,0</span><span style="left:69px">0</span><span style="left:76.5px">0</span><b style="left:88.9px"></b><span style="left:92.5px">37,5</span><span style="left:117.1px">5</span><span style="left:126.5px">5</span><span style="left:135px">64,5</span><span style="left:163.2px">,5</span><span style="left:178.3px">0</span><span style="left:186.8px">0</span><span style="left:196.2px">0</span><span style="left:208.5px">7,5</span><span style="left:227.8px">5</span><span style="left:234.8px">5</span><span style="left:242.4px">41,0</span><span style="left:265.9px">29,5</span><b style="left:293.1px"></b><span style="left:296px">,5</span><span style="left:310.2px">5</span><span style="left:316.8px">0</span><span style="left:327.1px">,0</span><span style="left:345px">0</span><span style="left:356.9px">5</span><span style="left:366.3px">5</span><span style="left:374.8px">0</span><span style="left:380.5px">5</span><span style="left:388.9px">0</span><span style="left:399.3px">0</span></div>
<div class="brow" style="left:422px;width:1390px"><span style="left:-0.1px">1@5.939,0</span><span style="left:58.3px">5</span><span style="left:66.7px">0,5</span><span style="left:83.7px">5.313,8</span><span style="left:124.2px">,5</span><span style="left:137.4px">2,0</span><span style="left:160px">,5</span><b style="left:175.4px"></b><span style="left:178.8px">,5</span><span style="left:192px">3</span><span style="left:200.5px">,8</span><b style="left:215.9px"></b><b style="left:218.9px"></b><span style="left:222.2px">5</span><span style="left:230.1px">8</span><b style="left:242.5px"></b><span style="left:247.5px">,0</span><span style="left:263.5px">3</span><span style="left:274px">0</span><b style="left:286.4px"></b><span style="left:289.2px">3</span><span style="left:299.9px">5,5</span><span style="left:315.9px">5</span><span style="left:326.3px">,9</span><b style="left:341.7px"></b><b style="left:344.2px"></b><span style="left:348.9px">3</span><span style="left:363px">3</span><span style="left:374.7px">7</span><span style="left:383.8px">5,8</span><span style="left:402.5px">2</span><span style="left:412px">0</span><span style="left:419.5px">3</span><b style="left:431.9px"></b><span style="left:436.5px">5,5</span><span style="left:458.2px">3</span><span style="left:466.7px">,3</span><span style="left:478.9px">89,9</span><span style="left:503.4px">,5</span><span style="left:516px">5</span><span style="left:526.9px">3</span><span style="left:536.7px">0</span><span style="left:544.8px">3</span><span style="left:558px">0</span><span style="left:567.5px">5</span><b style="left:579.9px"></b><span style="left:582.5px">7</span><span style="left:595.7px">9</span><span style="left:604.2px">45,3</span><span style="left:627.3px">5,8</span><span style="left:649px">0</span><span style="left:655.5px">0</span><span style="left:663.1px">6,3</span><span style="left:682px">,0</span><span style="left:694.5px">00,8</span><span style="left:718.7px">9</span><span style="left:726.2px">2</span><b style="left:738.6px"></b><b style="left:741.1px"></b><span style="left:744.1px">8</span><span style="left:754.5px">,5</span><b style="left:769.9px"></b><span style="left:774.3px">0</span><span style="left:783.7px">.904,0</span><span style="left:822.3px">02,0</span><span style="left:846.8px">33,4</span><span style="left:873.2px">5,3</span><span style="left:890.1px">0,8</span><span style="left:909.9px">0</span><b style="left:922.3px"></b><b style="left:925.3px"></b><span style="left:930.5px">4</span><span style="left:940.1px">8</span><span style="left:949.5px">90,4</span><span style="left:972.1px">,3</span><span style="left:982.9px">5</span><span style="left:993.2px">2</span><span style="left:1005.3px">5</span><span style="left:1013px">3</span><span style="left:1021.1px">9</span><span style="left:1032.1px">60,4</span><span style="left:1060.7px">3</span><span style="left:1067.9px">1,2</span><span style="left:1089.2px">9,1</span><span style="left:1109.7px">7</span><b style="left:1122.1px"></b><b style="left:1124.6px"></b><b style="left:1127.1px"></b><b style="left:1129.6px"></b><span style="left:1132.7px">,5</span><span style="left:1150.3px">.243,5</span><span style="left:1184.4px">7,2</span><span style="left:1203.1px">1</span><span style="left:1212.3px">7</span><span style="left:1220.7px">5,4</span><span style="left:1240px">3</span><span style="left:1251.9px">,8</span><b style="left:1267.3px"></b><span style="left:1270.8px">3</span><span style="left:1283.3px">0,0</span><span style="left:1302px">3</span><span style="left:1310.8px">,5</span><span style="left:1326.1px">.656,2</span><span style="left:1363.5px">3</span><span style="left:1371.2px">5,2</span></div>
<div class="abs" style="left:0;top:909.5px;font-size:11.2px;line-height:13px;white-space:nowrap;color:#222">IG-Finance.com <i>Daten sind indikativ</i></div>
<div class="tick" style="top:44.8px"></div><div class="yl" style="top:39.3px;font-size:11px;color:#000;">60.000</div>
<div class="tick" style="top:75.5px"></div><div class="yl" style="top:70px;font-size:11px;color:#000;">55.000</div>
<div class="tick" style="top:106.3px"></div><div class="yl" style="top:100.8px;font-size:12px;color:#000;font-weight:bold;">50.000</div>
<div class="tick" style="top:137.1px"></div><div class="yl" style="top:131.6px;font-size:11px;color:#000;">45.000</div>
<div class="tick" style="top:167.8px"></div><div class="yl" style="top:162.3px;font-size:11px;color:#000;">40.000</div>
<div class="tick" style="top:198.6px"></div><div class="yl" style="top:193.1px;font-size:11px;color:#000;">35.000</div>
<div class="tick" style="top:229.3px"></div><div class="yl" style="top:223.8px;font-size:11px;color:#000;">30.000</div>
<div class="tick" style="top:260.1px"></div><div class="yl" style="top:254.6px;font-size:11px;color:#000;">25.000</div>
<div class="tick" style="top:290.8px"></div><div class="yl" style="top:285.3px;font-size:11px;color:#000;">20.000</div>
<div class="tick" style="top:321.6px"></div><div class="yl" style="top:316.1px;font-size:11px;color:#000;">15.000</div>
<div class="tick" style="top:352.3px"></div><div class="yl" style="top:346.8px;font-size:11px;color:#000;">10.000</div>
<div class="tick" style="top:70px;background:#5b8ff0"></div>
<div class="abs" style="left:1844.5px;top:62px;width:36.5px;height:15.5px;box-sizing:border-box;border:1px solid #8d9cb0;background:linear-gradient(#f4f7fd,#cfd9f0);font-size:10.7px;line-height:14px;text-align:center;color:#6a97f0">55.894</div>
<div class="tick" style="top:346px;background:#000;height:1px"></div>
<div class="abs" style="left:1844px;top:339px;width:36.5px;height:15px;box-sizing:border-box;border:1px solid #8a8a40;background:#ffff1c;font-size:11px;line-height:13px;text-align:center;color:#000">11.100</div>
<div class="tick" style="top:383.5px"></div><div class="yl" style="top:378px;font-size:11px;color:#000;">2</div>
<div class="tick" style="top:431.2px"></div><div class="yl" style="top:425.7px;font-size:11px;color:#000;">1,5</div>
<div class="tick" style="top:479.3px"></div><div class="yl" style="top:473.8px;font-size:11px;color:#000;">1</div>
<div class="tick" style="top:526.7px"></div><div class="yl" style="top:521.2px;font-size:11px;color:#000;">0,5</div>
<div class="tick" style="top:575px;background:#5b8ff0"></div>
<div class="abs" style="left:1844px;top:568px;width:11px;height:14px;box-sizing:border-box;border:1px solid #8d9cb0;background:linear-gradient(#f4f7fd,#cfd9f0);font-size:11px;line-height:12px;text-align:center;color:#6a97f0">0</div>
<div class="tick" style="top:804.7px"></div><div class="yl" style="top:799.2px;font-size:11px;color:#000;">7.000</div>
<div class="tick" style="top:598px"></div>
<div class="tick" style="top:620.5px"></div>
<div class="tick" style="top:631.5px"></div>
<div class="tick" style="top:646.5px"></div>
<div class="tick" style="top:663.5px"></div>
<div class="tick" style="top:675.5px"></div>
<div class="tick" style="top:684px"></div>
<div class="tick" style="top:696.5px"></div>
<div class="tick" style="top:705.5px"></div>
<div class="tick" style="top:731px"></div>
<div class="tick" style="top:762.3px"></div>
<div class="tick" style="top:772.9px"></div>
<div class="tick" style="top:829.3px"></div>
<div class="tick" style="top:861.2px"></div>
<div class="tick" style="top:903.3px"></div>
<div class="pl" style="left:1891px;top:611px;width:17px;height:34.5px;text-indent:-34px;padding-top:14px;"></div>
<div class="pl" style="left:1844.3px;top:592px;width:51.7px;height:28px;background:linear-gradient(#fba3a3,#f58f8f);border-color:#b08888;">13.559,6<br>Monatlich</div>
<div class="pl" style="left:1844.3px;top:634.5px;width:50.7px;height:15.5px;">12.374,7<br>Monatlich</div>
<div class="pl" style="left:1844.3px;top:651px;width:63.7px;height:12px;">11.794,1<br>Wöchentlich</div>
<div class="pl" style="left:1844.3px;top:663px;width:63.7px;height:27px;">11.299,5<br>Wöchentlich</div>
<div class="pl" style="left:1844.3px;top:671px;width:46.5px;height:13.5px;">11.107,7<br>Täglich</div>
<div class="pl" style="left:1844.3px;top:684px;width:45.2px;height:9px;padding-top:0;line-height:9px;">10.692,5<br>Täglich</div>
<div class="pl" style="left:1844.3px;top:692.5px;width:51.7px;height:27px;">10.387,5<br>Monatlich</div>
<div class="pl" style="left:1844.3px;top:719.5px;width:40.2px;height:26px;">9.525,8<br>Täglich</div>
<div class="pl" style="left:1844.3px;top:746.5px;width:63.7px;height:26px;">8.441,7<br>Wöchentlich</div>
<div class="pl" style="left:1844.3px;top:767.5px;width:51.7px;height:27px;">8.102,4<br>Monatlich</div>
<div class="pl" style="left:1844.3px;top:816.5px;width:51.7px;height:27px;">6.161,5<br>Monatlich</div>
<div class="pl" style="left:1844.3px;top:848.5px;width:51.7px;height:27px;">5.072,3<br>Monatlich</div>
<div class="pl" style="left:1844.3px;top:890.5px;width:51.7px;height:27px;">3.668,3<br>Monatlich</div>
<div class="abs" style="left:1845px;top:612.5px;width:53px;height:21px;box-sizing:border-box;border:1px solid #c79a10;border-radius:2px;background:linear-gradient(#ffe31e,#fdb515);white-space:nowrap;color:#3a2500;line-height:20px;overflow:hidden"><span style="font-size:10.5px;padding-left:1px">13.1</span><span style="font-size:16.5px">80,</span><span style="font-size:10px;position:relative;top:-7px">8</span></div>
<div class="abs" style="left:1893px;top:632px;font-size:11px;line-height:12px">ch</div>
<div class="yr" style="left:173px">2008</div>
<div class="yr" style="left:290px">2009</div>
<div class="yr" style="left:407px">2010</div>
<div class="yr" style="left:529.5px">2011</div>
<div class="yr" style="left:653px">2012</div>
<div class="yr" style="left:781px">2013</div>
<div class="yr" style="left:908px">2014</div>
<div class="yr" style="left:1036px">2015</div>
<div class="yr" style="left:1164px">2016</div>
<div class="yr" style="left:1291px">2017</div>
<div class="yr" style="left:1418px">2018</div>
<div class="yr" style="left:1546px">2019</div>
<div class="yr" style="left:1673px">2020</div>
<div class="yr" style="left:1802px">2021</div>
<div class="abs" style="left:0;top:927px;width:97px;height:13px;background:#ffff00;font-size:10.5px;line-height:13px;white-space:nowrap;box-sizing:border-box;border:1px solid #c8c800;border-left:none;color:#000">Di 16.05.2006 09:00</div>
<div class="bt"></div>
<div class="abs" style="left:0;top:973px;width:1911px;height:6px;background:linear-gradient(#5a90ee 0,#5a90ee 3px,#2a62c8 3px,#2a62c8 4px,#f8f4ec 4.5px,#f8f4ec 6px)"></div>
<svg class="abs" style="left:0px;top:0px" width="1911" height="979" viewBox="0 0 1911 979"><rect x="-3" y="948" width="54.800" height="21.800" rx="3.500" fill="#3a98e0"/><rect x="-3" y="948" width="54.800" height="10" rx="3.500" fill="#49a4e8" opacity="0.500"/><path d="M12.900,954.700L3.100,959.400L12.900,964.500" stroke="#fff" stroke-width="1.500" fill="none"/><circle cx="3.100" cy="959.400" r="2.500" fill="#fff"/><circle cx="12.900" cy="954.700" r="2.500" fill="#fff"/><circle cx="12.900" cy="964.500" r="2.500" fill="#fff"/><ellipse cx="61.600" cy="955.100" rx="3.900" ry="3.300" fill="#fff" stroke="#111" stroke-width="1.600"/><ellipse cx="61.600" cy="964.900" rx="3.900" ry="3.300" fill="#fff" stroke="#111" stroke-width="1.600"/><rect x="60.300" y="954.500" width="2.600" height="11" rx="1.200" fill="#fff" stroke="#111" stroke-width="0.900"/><path d="M70.500,955v8.600" stroke="#b02a2a" stroke-width="1"/><rect x="68.200" y="956.700" width="4.600" height="5" fill="#ea6e6e" stroke="#c03030" stroke-width="0.800"/><path d="M76.500,948.900v14.700" stroke="#1a9a1a" stroke-width="1"/><rect x="74.500" y="953" width="4.200" height="7.800" fill="#5cd45c" stroke="#1a9a1a" stroke-width="0.800"/><path d="M70,965.200h8l-4,3.600z" fill="#111" stroke="#fff" stroke-width="0.600"/><rect x="90" y="952.700" width="11.300" height="13.300" fill="#fff" stroke="#111" stroke-width="1.500"/><path d="M91,955.200h9.500M91,958h9.500M91,960.800h9.500M91,963.600h9.500" stroke="#111" stroke-width="1.500"/><path d="M90.500,953.500l10.500,11.500" stroke="#fff" stroke-width="1.800"/><path d="M97,953.500h3.700v3.200z" fill="#f08080"/><path d="M90.800,962.300v3.200h3.700z" fill="#40c050"/><rect x="117" y="953" width="7.1" height="2.500" fill="#42cf42" stroke="#5a6a5a" stroke-width="0.500"/><rect x="125" y="953" width="3.1" height="2.500" fill="#f08a8a" stroke="#6a5a5a" stroke-width="0.500"/><rect x="118.3" y="956" width="5.8" height="2.500" fill="#42cf42" stroke="#5a6a5a" stroke-width="0.500"/><rect x="125" y="956" width="6.2" height="2.500" fill="#f08a8a" stroke="#6a5a5a" stroke-width="0.500"/><rect x="117" y="959" width="7.1" height="2.500" fill="#42cf42" stroke="#5a6a5a" stroke-width="0.500"/><rect x="125" y="959" width="3.1" height="2.500" fill="#f08a8a" stroke="#6a5a5a" stroke-width="0.500"/><rect x="118.3" y="962" width="5.8" height="2.500" fill="#42cf42" stroke="#5a6a5a" stroke-width="0.500"/><rect x="125" y="962" width="6.2" height="2.500" fill="#f08a8a" stroke="#6a5a5a" stroke-width="0.500"/><rect x="117" y="965" width="7.1" height="2.500" fill="#42cf42" stroke="#5a6a5a" stroke-width="0.500"/><rect x="125" y="965" width="2.2" height="2.500" fill="#f08a8a" stroke="#6a5a5a" stroke-width="0.500"/><rect x="140.500" y="952.500" width="1654" height="15" rx="3" fill="#9bbac7" stroke="#6f8896" stroke-width="1"/><rect x="139.500" y="953" width="14.500" height="14" rx="3.500" fill="#b4d1de" stroke="#7f9aaa" stroke-width="0.900"/><rect x="140.500" y="954" width="12.500" height="6" rx="2.500" fill="#c6e0ea" opacity="0.700"/><path d="M148.200,956.700v6.400l-3.600,-3.200z" fill="#111"/><rect x="1780" y="953" width="14.200" height="14.300" rx="3.500" fill="#b4d1de" stroke="#7f9aaa" stroke-width="0.900"/><rect x="1781" y="954" width="12.200" height="6" rx="2.500" fill="#c8e1eb" opacity="0.700"/><path d="M1785.300,956.700v6.400l3.600,-3.200z" fill="#111"/><path d="M1813.500,950v20M1805.400,958v12" stroke="#555" stroke-width="0.900"/><rect x="1810.400" y="952.600" width="6.200" height="15" fill="#4fd04f" stroke="#555" stroke-width="0.900"/><rect x="1802.500" y="961" width="5.900" height="6.700" fill="#f08585" stroke="#555" stroke-width="0.900"/><g transform="translate(1802.6,954.6) scale(1)"><path d="M10.390,0.630L7.300,3.720L9.280,5.700L12.370,2.610A4.300,4.300 0 0 1 6.710,8.410L2.490,12.630A1.500,1.500 0 0 1 0.370,10.510L4.590,6.290A4.300,4.300 0 0 1 10.390,0.630Z" fill="#fff" stroke="#111" stroke-width="1.150" stroke-linejoin="round"/></g><rect x="1825.200" y="947.200" width="24.600" height="24.700" fill="#93aab8"/><path d="M1839,962l5.500,5.700" stroke="#111" stroke-width="3" stroke-linecap="round"/><circle cx="1834.800" cy="957.700" r="5.500" fill="#d4d7da" stroke="#111" stroke-width="1.300"/><circle cx="1833.600" cy="956.300" r="3.300" fill="#f4f5f6" opacity="0.850"/><path d="M1844.700,953.500v7.600" stroke="#1a1aff" stroke-width="1.500"/><path d="M1842.400,955l2.300,-2.900l2.300,2.900zM1842.400,959.700l2.300,2.900l2.300,-2.900z" fill="#1a1aff"/><path d="M1829.600,966.600h6.600" stroke="#1a1aff" stroke-width="1.500"/><path d="M1831.100,964.300l-2.900,2.300l2.900,2.300zM1834.700,964.300l2.900,2.300l-2.900,2.300z" fill="#1a1aff"/><path d="M1867.1,962l6,6" stroke="#111" stroke-width="3" stroke-linecap="round"/><circle cx="1863.1" cy="957.900" r="5.400" fill="#fff" stroke="#111" stroke-width="1.400"/><path d="M1860.1999999999998,957.900h5.800" stroke="#1a1aff" stroke-width="2"/><path d="M1895,962l6,6" stroke="#111" stroke-width="3" stroke-linecap="round"/><circle cx="1891" cy="957.900" r="5.400" fill="#fff" stroke="#111" stroke-width="1.400"/><path d="M1888.1,957.900h5.800" stroke="#1a1aff" stroke-width="2"/><path d="M1891,955v5.800" stroke="#1a1aff" stroke-width="2"/></svg><div class="abs" style="left:20px;top:952px;font-size:11px;line-height:14px;color:#fff">Share</div>
</div></body></html>
